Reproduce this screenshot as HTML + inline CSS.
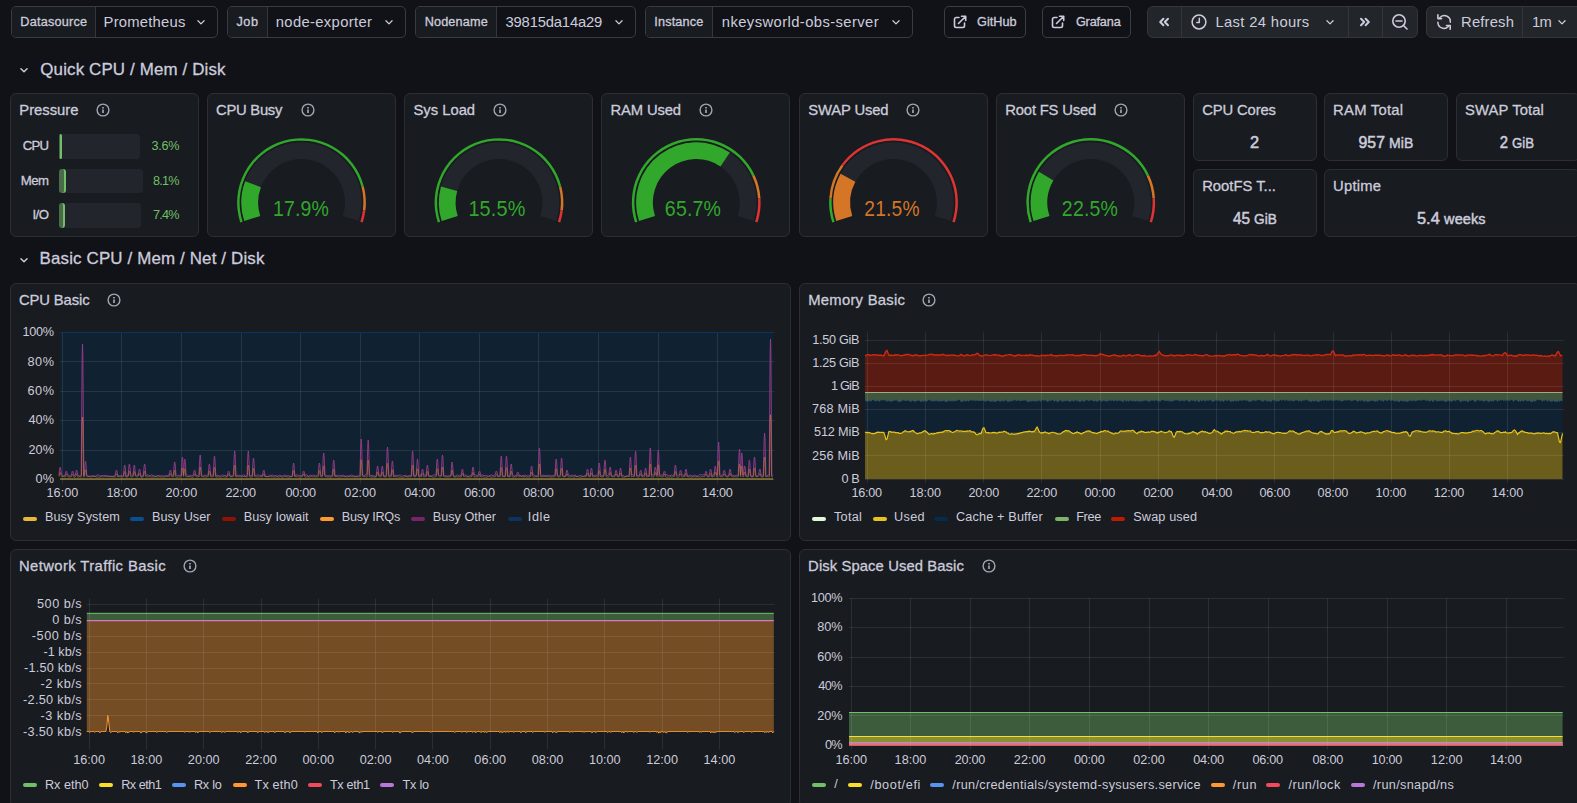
<!DOCTYPE html>
<html><head><meta charset="utf-8">
<style>
*{box-sizing:border-box;margin:0;padding:0}
html,body{width:1577px;height:803px;overflow:hidden;background:#111217;font-family:"Liberation Sans",sans-serif;color:#ccccdc}
.a{position:absolute;white-space:nowrap}
.vb{position:absolute;top:6px;height:32px;border:1px solid #393b41;border-radius:5px;background:#111217;overflow:hidden}
.vl{position:absolute;left:0;top:0;bottom:0;background:#181b1f;border-right:1px solid #34363b}
.btn{position:absolute;top:6px;height:32px;border:1px solid #3b3d42;border-radius:5px;background:#111217}
.grp{position:absolute;top:6px;height:32px;border:1px solid #33353a;border-radius:6px;background:#22252a;overflow:hidden}
.dv{position:absolute;top:0;bottom:0;width:1px;background:#34363b}
.p{position:absolute;background:#181b1f;border:1px solid #2c2e33;border-radius:6px;overflow:hidden}
.lbl{-webkit-text-stroke:0.3px #ccccdc}
.val{font-size:14px;letter-spacing:0.35px}
.ttl{-webkit-text-stroke:0.3px #ccccdc}
.ax{font-size:12px;letter-spacing:0.2px;color:#ccccdc}
svg{position:absolute;overflow:visible}
</style></head><body>

<div class="vb" style="left:11px;width:207px"><div class="vl" style="width:84px"></div></div>
<div id="t0" class="a lbl" style="left:20.30px;top:14.72px;line-height:14.59px;font-size:12.68px;color:#ccccdc;font-weight:normal;letter-spacing:0.222px;">Datasource</div>
<div id="t1" class="a val" style="left:103.60px;top:13.61px;line-height:17.02px;font-size:14.80px;color:#ccccdc;font-weight:normal;letter-spacing:0.222px;">Prometheus</div>
<svg style="left:197px;top:19.5px" width="8" height="4.8" viewBox="0 0 8 5"><path d="M0.8 0.8L4 4L7.2 0.8" fill="none" stroke="#ccccdc" stroke-width="1.3" stroke-linecap="round" stroke-linejoin="round"/></svg>
<div class="vb" style="left:227px;width:179px"><div class="vl" style="width:40px"></div></div>
<div id="t2" class="a lbl" style="left:236.50px;top:14.72px;line-height:14.59px;font-size:12.68px;color:#ccccdc;font-weight:normal;letter-spacing:0.500px;">Job</div>
<div id="t3" class="a val" style="left:275.80px;top:13.61px;line-height:17.02px;font-size:14.80px;color:#ccccdc;font-weight:normal;letter-spacing:0.333px;">node-exporter</div>
<svg style="left:385px;top:19.5px" width="8" height="4.8" viewBox="0 0 8 5"><path d="M0.8 0.8L4 4L7.2 0.8" fill="none" stroke="#ccccdc" stroke-width="1.3" stroke-linecap="round" stroke-linejoin="round"/></svg>
<div class="vb" style="left:415px;width:221px"><div class="vl" style="width:81px"></div></div>
<div id="t4" class="a lbl" style="left:424.70px;top:14.72px;line-height:14.59px;font-size:12.68px;color:#ccccdc;font-weight:normal;letter-spacing:0.143px;">Nodename</div>
<div id="t5" class="a val" style="left:505.50px;top:13.61px;line-height:17.02px;font-size:14.80px;color:#ccccdc;font-weight:normal;letter-spacing:-0.182px;">39815da14a29</div>
<svg style="left:615px;top:19.5px" width="8" height="4.8" viewBox="0 0 8 5"><path d="M0.8 0.8L4 4L7.2 0.8" fill="none" stroke="#ccccdc" stroke-width="1.3" stroke-linecap="round" stroke-linejoin="round"/></svg>
<div class="vb" style="left:645px;width:268px"><div class="vl" style="width:67px"></div></div>
<div id="t6" class="a lbl" style="left:654.30px;top:14.72px;line-height:14.59px;font-size:12.68px;color:#ccccdc;font-weight:normal;letter-spacing:0.143px;">Instance</div>
<div id="t7" class="a val" style="left:721.80px;top:13.61px;line-height:17.02px;font-size:14.80px;color:#ccccdc;font-weight:normal;letter-spacing:0.400px;">nkeysworld-obs-server</div>
<svg style="left:892px;top:19.5px" width="8" height="4.8" viewBox="0 0 8 5"><path d="M0.8 0.8L4 4L7.2 0.8" fill="none" stroke="#ccccdc" stroke-width="1.3" stroke-linecap="round" stroke-linejoin="round"/></svg>
<div class="btn" style="left:944px;width:82px"></div>
<svg style="left:952px;top:14px" width="16" height="16" viewBox="0 0 16 16"><path d="M7 3.5H4.2A1.7 1.7 0 0 0 2.5 5.2v6.6a1.7 1.7 0 0 0 1.7 1.7h6.6a1.7 1.7 0 0 0 1.7-1.7V9" fill="none" stroke="#ccccdc" stroke-width="1.6" stroke-linecap="round"/><path d="M6.5 9.5L13.5 2.5M9.5 2.3h4.2v4.2" fill="none" stroke="#ccccdc" stroke-width="1.6" stroke-linecap="round" stroke-linejoin="round"/></svg>
<div id="t8" class="a lbl" style="left:977.10px;top:15.32px;line-height:14.59px;font-size:12.68px;color:#ccccdc;font-weight:normal;letter-spacing:-0.000px;">GitHub</div>
<div class="btn" style="left:1042px;width:89px"></div>
<svg style="left:1050px;top:14px" width="16" height="16" viewBox="0 0 16 16"><path d="M7 3.5H4.2A1.7 1.7 0 0 0 2.5 5.2v6.6a1.7 1.7 0 0 0 1.7 1.7h6.6a1.7 1.7 0 0 0 1.7-1.7V9" fill="none" stroke="#ccccdc" stroke-width="1.6" stroke-linecap="round"/><path d="M6.5 9.5L13.5 2.5M9.5 2.3h4.2v4.2" fill="none" stroke="#ccccdc" stroke-width="1.6" stroke-linecap="round" stroke-linejoin="round"/></svg>
<div id="t9" class="a lbl" style="left:1075.90px;top:15.32px;line-height:14.59px;font-size:12.68px;color:#ccccdc;font-weight:normal;letter-spacing:-0.167px;">Grafana</div>
<div class="grp" style="left:1147px;width:271px"><div class="dv" style="left:33px"></div><div class="dv" style="left:200px"></div><div class="dv" style="left:234px"></div></div>
<svg style="left:1158px;top:17px" width="12" height="10" viewBox="0 0 12 10"><path d="M5.4 1.8L2.2 5L5.4 8.2M10 1.8L6.8 5L10 8.2" fill="none" stroke="#ccccdc" stroke-width="2" stroke-linecap="round" stroke-linejoin="round"/></svg>
<svg style="left:1191px;top:14px" width="16" height="16" viewBox="0 0 16 16"><circle cx="8" cy="8" r="6.9" fill="none" stroke="#ccccdc" stroke-width="1.5"/><path d="M8.3 4.3V8.4H5.8" fill="none" stroke="#ccccdc" stroke-width="1.5" stroke-linecap="round" stroke-linejoin="round"/></svg>
<div id="t10" class="a val" style="left:1215.50px;top:13.61px;line-height:17.02px;font-size:14.80px;color:#ccccdc;font-weight:normal;letter-spacing:0.333px;">Last 24 hours</div>
<svg style="left:1326px;top:19.5px" width="8" height="4.8" viewBox="0 0 8 5"><path d="M0.8 0.8L4 4L7.2 0.8" fill="none" stroke="#ccccdc" stroke-width="1.3" stroke-linecap="round" stroke-linejoin="round"/></svg>
<svg style="left:1359px;top:17px" width="12" height="10" viewBox="0 0 12 10"><path d="M2 1.8L5.2 5L2 8.2M6.6 1.8L9.8 5L6.6 8.2" fill="none" stroke="#ccccdc" stroke-width="2" stroke-linecap="round" stroke-linejoin="round"/></svg>
<svg style="left:1391px;top:13px" width="18" height="18" viewBox="0 0 18 18"><circle cx="8" cy="8" r="6.2" fill="none" stroke="#ccccdc" stroke-width="1.6"/><path d="M5 8H11M12.5 12.5L16 16" fill="none" stroke="#ccccdc" stroke-width="1.6" stroke-linecap="round"/></svg>
<div class="grp" style="left:1426px;width:160px"><div class="dv" style="left:95px"></div></div>
<svg style="left:1436px;top:14px" width="16" height="16" viewBox="0 0 16 16"><path d="M3.6 3.9A6 6 0 0 1 14.3 8.2M1.9 8.2A6 6 0 0 0 12.3 12.4" fill="none" stroke="#ccccdc" stroke-width="1.5" stroke-linecap="round"/><path d="M1.9 0.9V4.6H5.6M14.2 15.2V11.5H10.5" fill="none" stroke="#ccccdc" stroke-width="1.6" stroke-linecap="round" stroke-linejoin="round"/></svg>
<div id="t11" class="a val" style="left:1461.10px;top:13.61px;line-height:17.02px;font-size:14.80px;color:#ccccdc;font-weight:normal;letter-spacing:0.167px;">Refresh</div>
<div id="t12" class="a val" style="left:1531.90px;top:13.61px;line-height:17.02px;font-size:14.80px;color:#ccccdc;font-weight:normal;letter-spacing:-0.500px;">1m</div>
<svg style="left:1558px;top:19.5px" width="8" height="4.8" viewBox="0 0 8 5"><path d="M0.8 0.8L4 4L7.2 0.8" fill="none" stroke="#ccccdc" stroke-width="1.3" stroke-linecap="round" stroke-linejoin="round"/></svg>
<svg style="left:19.5px;top:67.8px" width="8" height="4.8" viewBox="0 0 8 5"><path d="M0.8 0.8L4 4L7.2 0.8" fill="none" stroke="#ccccdc" stroke-width="1.5" stroke-linecap="round" stroke-linejoin="round"/></svg>
<div id="t13" class="a ttl" style="left:40.30px;top:60.49px;line-height:19.45px;font-size:16.91px;color:#ccccdc;font-weight:normal;letter-spacing:0.143px;">Quick CPU / Mem / Disk</div>
<svg style="left:19.5px;top:257.5px" width="8" height="4.8" viewBox="0 0 8 5"><path d="M0.8 0.8L4 4L7.2 0.8" fill="none" stroke="#ccccdc" stroke-width="1.5" stroke-linecap="round" stroke-linejoin="round"/></svg>
<div id="t14" class="a ttl" style="left:39.60px;top:249.19px;line-height:19.45px;font-size:16.91px;color:#ccccdc;font-weight:normal;letter-spacing:0.148px;">Basic CPU / Mem / Net / Disk</div>
<div class="p" style="left:10px;top:93px;width:189px;height:144px"></div>
<div id="t15" class="a ttl" style="left:19.30px;top:101.61px;line-height:17.02px;font-size:14.80px;color:#ccccdc;font-weight:normal;letter-spacing:-0.000px;">Pressure</div>
<svg style="left:95.9px;top:103px" width="14" height="14" viewBox="0 0 14 14"><g opacity="0.78"><circle cx="7" cy="7" r="5.9" fill="none" stroke="#ccccdc" stroke-width="1.4"/><path d="M7 6.6V9.9" stroke="#ccccdc" stroke-width="1.7"/><path d="M7 3.9V5.4" stroke="#ccccdc" stroke-width="1.7"/></g></svg>
<div class="p" style="left:207px;top:93px;width:189px;height:144px"></div>
<div id="t16" class="a ttl" style="left:216.10px;top:101.61px;line-height:17.02px;font-size:14.80px;color:#ccccdc;font-weight:normal;letter-spacing:-0.286px;">CPU Busy</div>
<svg style="left:300.7px;top:103px" width="14" height="14" viewBox="0 0 14 14"><g opacity="0.78"><circle cx="7" cy="7" r="5.9" fill="none" stroke="#ccccdc" stroke-width="1.4"/><path d="M7 6.6V9.9" stroke="#ccccdc" stroke-width="1.7"/><path d="M7 3.9V5.4" stroke="#ccccdc" stroke-width="1.7"/></g></svg>
<div class="p" style="left:404px;top:93px;width:189px;height:144px"></div>
<div id="t17" class="a ttl" style="left:413.40px;top:101.61px;line-height:17.02px;font-size:14.80px;color:#ccccdc;font-weight:normal;letter-spacing:0.000px;">Sys Load</div>
<svg style="left:492.7px;top:103px" width="14" height="14" viewBox="0 0 14 14"><g opacity="0.78"><circle cx="7" cy="7" r="5.9" fill="none" stroke="#ccccdc" stroke-width="1.4"/><path d="M7 6.6V9.9" stroke="#ccccdc" stroke-width="1.7"/><path d="M7 3.9V5.4" stroke="#ccccdc" stroke-width="1.7"/></g></svg>
<div class="p" style="left:601px;top:93px;width:189px;height:144px"></div>
<div id="t18" class="a ttl" style="left:610.50px;top:101.61px;line-height:17.02px;font-size:14.80px;color:#ccccdc;font-weight:normal;letter-spacing:-0.143px;">RAM Used</div>
<svg style="left:698.9px;top:103px" width="14" height="14" viewBox="0 0 14 14"><g opacity="0.78"><circle cx="7" cy="7" r="5.9" fill="none" stroke="#ccccdc" stroke-width="1.4"/><path d="M7 6.6V9.9" stroke="#ccccdc" stroke-width="1.7"/><path d="M7 3.9V5.4" stroke="#ccccdc" stroke-width="1.7"/></g></svg>
<div class="p" style="left:799px;top:93px;width:189px;height:144px"></div>
<div id="t19" class="a ttl" style="left:808.20px;top:101.61px;line-height:17.02px;font-size:14.80px;color:#ccccdc;font-weight:normal;letter-spacing:-0.125px;">SWAP Used</div>
<svg style="left:906.0px;top:103px" width="14" height="14" viewBox="0 0 14 14"><g opacity="0.78"><circle cx="7" cy="7" r="5.9" fill="none" stroke="#ccccdc" stroke-width="1.4"/><path d="M7 6.6V9.9" stroke="#ccccdc" stroke-width="1.7"/><path d="M7 3.9V5.4" stroke="#ccccdc" stroke-width="1.7"/></g></svg>
<div class="p" style="left:996px;top:93px;width:189px;height:144px"></div>
<div id="t20" class="a ttl" style="left:1005.30px;top:101.61px;line-height:17.02px;font-size:14.80px;color:#ccccdc;font-weight:normal;letter-spacing:-0.182px;">Root FS Used</div>
<svg style="left:1113.7px;top:103px" width="14" height="14" viewBox="0 0 14 14"><g opacity="0.78"><circle cx="7" cy="7" r="5.9" fill="none" stroke="#ccccdc" stroke-width="1.4"/><path d="M7 6.6V9.9" stroke="#ccccdc" stroke-width="1.7"/><path d="M7 3.9V5.4" stroke="#ccccdc" stroke-width="1.7"/></g></svg>
<div id="t21" class="a ttl" style="left:-351.80px;width:400px;text-align:right;top:138.04px;line-height:15.19px;font-size:13.21px;color:#ccccdc;font-weight:normal;letter-spacing:-0.800px;">CPU</div>
<div class="a" style="left:59px;top:134px;width:81px;height:25px;background:#22252b;border-radius:3px"></div>
<div class="a" style="left:59px;top:134px;width:3.3px;height:25px;background:#4a6b47;border-right:2.5px solid #73bf69;border-radius:3px"></div>
<div id="t22" class="a " style="left:-220.83px;width:400px;text-align:right;top:138.52px;line-height:14.59px;font-size:12.68px;color:#73bf69;font-weight:normal;letter-spacing:-0.333px;">3.6%</div>
<div id="t23" class="a ttl" style="left:-351.50px;width:400px;text-align:right;top:172.94px;line-height:15.19px;font-size:13.21px;color:#ccccdc;font-weight:normal;letter-spacing:-0.500px;">Mem</div>
<div class="a" style="left:59px;top:169px;width:84px;height:24px;background:#22252b;border-radius:3px"></div>
<div class="a" style="left:59px;top:169px;width:7.0px;height:24px;background:#4a6b47;border-right:2.5px solid #73bf69;border-radius:3px"></div>
<div id="t24" class="a " style="left:-221.30px;width:400px;text-align:right;top:174.42px;line-height:14.59px;font-size:12.68px;color:#73bf69;font-weight:normal;letter-spacing:-0.800px;">8.1%</div>
<div id="t25" class="a ttl" style="left:-351.50px;width:400px;text-align:right;top:207.14px;line-height:15.19px;font-size:13.21px;color:#ccccdc;font-weight:normal;letter-spacing:-0.500px;">I/O</div>
<div class="a" style="left:59px;top:203px;width:82px;height:25px;background:#22252b;border-radius:3px"></div>
<div class="a" style="left:59px;top:203px;width:6.2px;height:25px;background:#4a6b47;border-right:2.5px solid #73bf69;border-radius:3px"></div>
<div id="t26" class="a " style="left:-221.30px;width:400px;text-align:right;top:207.62px;line-height:14.59px;font-size:12.68px;color:#73bf69;font-weight:normal;letter-spacing:-0.800px;">7.4%</div>
<svg style="left:0;top:0" width="1577" height="803"><path d="M240.25 222.40A64.4 64.4 0 1 1 363.88 186.48L361.46 187.11A61.9 61.9 0 1 0 242.63 221.63Z" fill="#31a82c"/><path d="M363.88 186.48A64.4 64.4 0 0 1 365.39 210.57L362.91 210.26A61.9 61.9 0 0 0 361.46 187.11Z" fill="#d57627"/><path d="M365.39 210.57A64.4 64.4 0 0 1 362.75 222.40L360.37 221.63A61.9 61.9 0 0 0 362.91 210.26Z" fill="#df3334"/><path d="M244.25 221.10A60.2 60.2 0 1 1 358.75 221.10L342.78 215.91A43.4 43.4 0 1 0 260.22 215.91Z" fill="#22252b"/><path d="M244.25 221.10A60.2 60.2 0 0 1 245.17 181.26L260.89 187.18A43.4 43.4 0 0 0 260.22 215.91Z" fill="#31a82c"/></svg>
<div id="t27" class="a " style="left:100.50px;width:400px;text-align:center;top:197.39px;line-height:24.92px;font-size:21.67px;color:#31a82c;font-weight:normal;transform:scaleX(0.9004);transform-origin:50% 50%;letter-spacing:0.200px;">17.9%</div>
<svg style="left:0;top:0" width="1577" height="803"><path d="M437.75 222.40A64.4 64.4 0 1 1 561.38 186.48L558.96 187.11A61.9 61.9 0 1 0 440.13 221.63Z" fill="#31a82c"/><path d="M561.38 186.48A64.4 64.4 0 0 1 562.89 210.57L560.41 210.26A61.9 61.9 0 0 0 558.96 187.11Z" fill="#d57627"/><path d="M562.89 210.57A64.4 64.4 0 0 1 560.25 222.40L557.87 221.63A61.9 61.9 0 0 0 560.41 210.26Z" fill="#df3334"/><path d="M441.75 221.10A60.2 60.2 0 1 1 556.25 221.10L540.28 215.91A43.4 43.4 0 1 0 457.72 215.91Z" fill="#22252b"/><path d="M441.75 221.10A60.2 60.2 0 0 1 440.98 186.43L457.17 190.92A43.4 43.4 0 0 0 457.72 215.91Z" fill="#31a82c"/></svg>
<div id="t28" class="a " style="left:296.50px;width:400px;text-align:center;top:197.39px;line-height:24.92px;font-size:21.67px;color:#31a82c;font-weight:normal;transform:scaleX(0.9170);transform-origin:50% 50%;letter-spacing:0.200px;">15.5%</div>
<svg style="left:0;top:0" width="1577" height="803"><path d="M635.00 222.40A64.4 64.4 0 0 1 754.52 175.08L752.26 176.14A61.9 61.9 0 0 0 637.38 221.63Z" fill="#31a82c"/><path d="M754.52 175.08A64.4 64.4 0 0 1 760.52 198.46L758.03 198.61A61.9 61.9 0 0 0 752.26 176.14Z" fill="#d57627"/><path d="M760.52 198.46A64.4 64.4 0 0 1 757.50 222.40L755.12 221.63A61.9 61.9 0 0 0 758.03 198.61Z" fill="#df3334"/><path d="M639.00 221.10A60.2 60.2 0 1 1 753.50 221.10L737.53 215.91A43.4 43.4 0 1 0 654.97 215.91Z" fill="#22252b"/><path d="M639.00 221.10A60.2 60.2 0 0 1 729.84 152.54L720.46 166.48A43.4 43.4 0 0 0 654.97 215.91Z" fill="#31a82c"/></svg>
<div id="t29" class="a " style="left:493.25px;width:400px;text-align:center;top:197.39px;line-height:24.92px;font-size:21.67px;color:#31a82c;font-weight:normal;transform:scaleX(0.9023);transform-origin:50% 50%;letter-spacing:0.200px;">65.7%</div>
<svg style="left:0;top:0" width="1577" height="803"><path d="M832.25 222.40A64.4 64.4 0 0 1 829.23 198.46L831.72 198.61A61.9 61.9 0 0 0 834.63 221.63Z" fill="#31a82c"/><path d="M829.23 198.46A64.4 64.4 0 0 1 841.40 164.65L843.42 166.12A61.9 61.9 0 0 0 831.72 198.61Z" fill="#d57627"/><path d="M841.40 164.65A64.4 64.4 0 0 1 954.75 222.40L952.37 221.63A61.9 61.9 0 0 0 843.42 166.12Z" fill="#df3334"/><path d="M836.25 221.10A60.2 60.2 0 1 1 950.75 221.10L934.78 215.91A43.4 43.4 0 1 0 852.22 215.91Z" fill="#22252b"/><path d="M836.25 221.10A60.2 60.2 0 0 1 840.57 173.83L855.34 181.83A43.4 43.4 0 0 0 852.22 215.91Z" fill="#d57627"/></svg>
<div id="t30" class="a " style="left:692.00px;width:400px;text-align:center;top:197.39px;line-height:24.92px;font-size:21.67px;color:#d57627;font-weight:normal;transform:scaleX(0.8856);transform-origin:50% 50%;letter-spacing:0.200px;">21.5%</div>
<svg style="left:0;top:0" width="1577" height="803"><path d="M1029.50 222.40A64.4 64.4 0 0 1 1149.02 175.08L1146.76 176.14A61.9 61.9 0 0 0 1031.88 221.63Z" fill="#31a82c"/><path d="M1149.02 175.08A64.4 64.4 0 0 1 1155.02 198.46L1152.53 198.61A61.9 61.9 0 0 0 1146.76 176.14Z" fill="#d57627"/><path d="M1155.02 198.46A64.4 64.4 0 0 1 1152.00 222.40L1149.62 221.63A61.9 61.9 0 0 0 1152.53 198.61Z" fill="#df3334"/><path d="M1033.50 221.10A60.2 60.2 0 1 1 1148.00 221.10L1132.03 215.91A43.4 43.4 0 1 0 1049.47 215.91Z" fill="#22252b"/><path d="M1033.50 221.10A60.2 60.2 0 0 1 1038.93 171.86L1053.39 180.41A43.4 43.4 0 0 0 1049.47 215.91Z" fill="#31a82c"/></svg>
<div id="t31" class="a " style="left:889.75px;width:400px;text-align:center;top:197.39px;line-height:24.92px;font-size:21.67px;color:#31a82c;font-weight:normal;transform:scaleX(0.9023);transform-origin:50% 50%;letter-spacing:0.200px;">22.5%</div>
<div class="p" style="left:1193px;top:93px;width:124px;height:68px"></div>
<div id="t32" class="a ttl" style="left:1202.20px;top:101.61px;line-height:17.02px;font-size:14.80px;color:#ccccdc;font-weight:normal;letter-spacing:-0.125px;">CPU Cores</div>
<div id="t33" class="a " style="left:1054.50px;width:400px;text-align:center;top:133.37px;line-height:18.84px;font-size:16.38px;color:#ccccdc;font-weight:normal;transform:scaleX(1.0000);transform-origin:50% 50%;letter-spacing:0.100px;-webkit-text-stroke:0.55px #ccccdc;">2</div>
<div class="p" style="left:1324px;top:93px;width:124px;height:68px"></div>
<div id="t34" class="a ttl" style="left:1333.10px;top:101.61px;line-height:17.02px;font-size:14.80px;color:#ccccdc;font-weight:normal;letter-spacing:0.250px;">RAM Total</div>
<div id="t35" class="a " style="left:1185.50px;width:400px;text-align:center;top:133.37px;line-height:18.84px;font-size:16.38px;color:#ccccdc;font-weight:normal;transform:scaleX(0.9650);transform-origin:50% 50%;letter-spacing:0.100px;-webkit-text-stroke:0.55px #ccccdc;">957<span style="font-size:14.5px;-webkit-text-stroke:0.45px #ccccdc"> MiB</span></div>
<div class="p" style="left:1456px;top:93px;width:124px;height:68px"></div>
<div id="t36" class="a ttl" style="left:1465.00px;top:101.61px;line-height:17.02px;font-size:14.80px;color:#ccccdc;font-weight:normal;letter-spacing:0.111px;">SWAP Total</div>
<div id="t37" class="a " style="left:1317.15px;width:400px;text-align:center;top:133.37px;line-height:18.84px;font-size:16.38px;color:#ccccdc;font-weight:normal;transform:scaleX(0.9093);transform-origin:50% 50%;letter-spacing:0.100px;-webkit-text-stroke:0.55px #ccccdc;">2<span style="font-size:14.5px;-webkit-text-stroke:0.45px #ccccdc"> GiB</span></div>
<div class="p" style="left:1193px;top:169px;width:124px;height:68px"></div>
<div id="t38" class="a ttl" style="left:1202.20px;top:177.61px;line-height:17.02px;font-size:14.80px;color:#ccccdc;font-weight:normal;letter-spacing:0.000px;">RootFS T...</div>
<div id="t39" class="a " style="left:1054.50px;width:400px;text-align:center;top:209.37px;line-height:18.84px;font-size:16.38px;color:#ccccdc;font-weight:normal;transform:scaleX(0.9377);transform-origin:50% 50%;letter-spacing:0.100px;-webkit-text-stroke:0.55px #ccccdc;">45<span style="font-size:14.5px;-webkit-text-stroke:0.45px #ccccdc"> GiB</span></div>
<div class="p" style="left:1324px;top:169px;width:256px;height:68px"></div>
<div id="t40" class="a ttl" style="left:1333.10px;top:177.61px;line-height:17.02px;font-size:14.80px;color:#ccccdc;font-weight:normal;letter-spacing:0.200px;">Uptime</div>
<div id="t41" class="a " style="left:1251.30px;width:400px;text-align:center;top:209.37px;line-height:18.84px;font-size:16.38px;color:#ccccdc;font-weight:normal;transform:scaleX(1.0000);transform-origin:50% 50%;letter-spacing:0.100px;-webkit-text-stroke:0.55px #ccccdc;">5.4<span style="font-size:14.5px;-webkit-text-stroke:0.45px #ccccdc"> weeks</span></div>
<div class="p" style="left:10px;top:283px;width:781px;height:258px"></div>
<div id="t42" class="a ttl" style="left:19.00px;top:291.61px;line-height:17.02px;font-size:14.80px;color:#ccccdc;font-weight:normal;letter-spacing:-0.125px;">CPU Basic</div>
<svg style="left:107px;top:293px" width="14" height="14" viewBox="0 0 14 14"><g opacity="0.78"><circle cx="7" cy="7" r="5.9" fill="none" stroke="#ccccdc" stroke-width="1.4"/><path d="M7 6.6V9.9" stroke="#ccccdc" stroke-width="1.7"/><path d="M7 3.9V5.4" stroke="#ccccdc" stroke-width="1.7"/></g></svg>
<svg style="left:0;top:0" width="1577" height="803"><rect x="60.1" y="332.5" width="713.1" height="146.9" fill="#052b51" fill-opacity="0.4"/><path d="M60.1 332.5H774.5" stroke="rgba(240,250,255,0.09)" stroke-width="1"/><path d="M60.1 361.5H774.5" stroke="rgba(240,250,255,0.09)" stroke-width="1"/><path d="M60.1 391.5H774.5" stroke="rgba(240,250,255,0.09)" stroke-width="1"/><path d="M60.1 420.5H774.5" stroke="rgba(240,250,255,0.09)" stroke-width="1"/><path d="M60.1 450.5H774.5" stroke="rgba(240,250,255,0.09)" stroke-width="1"/><path d="M60.1 479.5H774.5" stroke="rgba(240,250,255,0.09)" stroke-width="1"/><path d="M62.5 332.5V483.4" stroke="rgba(240,250,255,0.09)" stroke-width="1"/><path d="M121.5 332.5V483.4" stroke="rgba(240,250,255,0.09)" stroke-width="1"/><path d="M181.5 332.5V483.4" stroke="rgba(240,250,255,0.09)" stroke-width="1"/><path d="M241.5 332.5V483.4" stroke="rgba(240,250,255,0.09)" stroke-width="1"/><path d="M300.5 332.5V483.4" stroke="rgba(240,250,255,0.09)" stroke-width="1"/><path d="M360.5 332.5V483.4" stroke="rgba(240,250,255,0.09)" stroke-width="1"/><path d="M419.5 332.5V483.4" stroke="rgba(240,250,255,0.09)" stroke-width="1"/><path d="M479.5 332.5V483.4" stroke="rgba(240,250,255,0.09)" stroke-width="1"/><path d="M538.5 332.5V483.4" stroke="rgba(240,250,255,0.09)" stroke-width="1"/><path d="M598.5 332.5V483.4" stroke="rgba(240,250,255,0.09)" stroke-width="1"/><path d="M658.5 332.5V483.4" stroke="rgba(240,250,255,0.09)" stroke-width="1"/><path d="M717.5 332.5V483.4" stroke="rgba(240,250,255,0.09)" stroke-width="1"/><path d="M60.1 332.5H773.2" stroke="#0a3561" stroke-width="1"/><path d="M58.90 475.37L59.85 467.86L60.20 467.00L60.55 467.86L61.50 474.63L62.10 475.37L63.10 475.79L64.10 475.83L65.00 475.38L65.95 471.46L66.30 471.00L66.65 471.46L67.60 475.04L68.10 475.17L69.10 475.12L70.10 476.49L71.10 475.55L71.30 475.18L72.25 471.46L72.60 471.00L72.95 471.46L73.90 474.82L74.10 475.85L75.10 474.97L75.30 475.00L76.25 470.56L76.60 470.00L76.95 470.56L77.90 474.81L78.10 475.64L79.10 476.03L80.10 475.91L81.10 474.82L81.20 475.06L82.15 357.16L82.50 344.00L82.85 357.16L83.80 475.41L84.10 475.24L84.20 475.42L85.15 462.46L85.50 461.00L85.85 462.46L86.80 475.52L87.10 475.55L88.10 475.99L89.10 476.28L90.10 475.99L91.10 476.36L92.10 475.41L93.10 476.14L94.10 475.50L95.10 476.38L96.10 476.28L97.10 474.88L98.10 474.94L99.10 475.09L100.10 476.44L101.10 475.49L102.10 475.83L103.10 475.24L104.10 475.61L105.10 475.39L106.10 475.33L107.10 475.75L108.10 475.75L109.10 476.33L110.10 475.93L111.10 476.37L112.10 476.24L113.10 476.48L114.10 475.91L115.10 474.99L115.20 474.77L116.15 470.56L116.50 470.00L116.85 470.56L117.80 475.49L118.10 476.33L119.10 475.72L120.10 475.98L121.10 475.08L122.10 476.20L123.10 475.73L123.40 475.58L124.35 466.06L124.70 465.00L125.05 466.06L126.00 474.63L126.10 476.24L127.10 476.48L128.10 474.86L128.10 475.40L129.05 465.16L129.40 464.00L129.75 465.16L130.70 474.71L131.10 474.97L132.10 475.23L133.00 475.51L133.95 466.06L134.30 465.00L134.65 466.06L135.60 475.13L136.10 475.81L137.10 474.78L138.10 475.99L138.20 475.38L139.15 469.66L139.50 469.00L139.85 469.66L140.80 474.77L141.10 476.47L142.10 475.61L143.10 476.50L143.30 474.98L144.25 465.16L144.60 464.00L144.95 465.16L145.90 474.96L146.10 475.78L147.10 474.76L148.10 475.06L149.10 475.43L150.10 475.80L151.10 474.98L152.10 474.78L153.10 476.26L154.10 475.26L155.10 476.43L156.10 476.31L157.10 475.38L158.10 475.53L159.10 475.64L160.10 475.86L161.10 475.77L162.10 475.71L163.10 475.82L164.10 476.39L165.10 475.61L166.10 475.48L167.10 476.00L168.10 475.13L169.10 474.84L169.10 475.24L170.05 470.56L170.40 470.00L170.75 470.56L171.70 474.73L172.10 475.69L173.10 474.72L173.40 475.25L174.35 463.36L174.70 462.00L175.05 463.36L176.00 475.00L176.10 474.74L177.10 475.81L178.10 475.84L179.10 474.81L180.10 475.83L181.10 475.15L181.10 475.54L182.05 458.86L182.40 457.00L182.75 458.86L183.50 474.76L184.45 460.66L184.80 459.00L185.15 460.66L186.10 475.01L187.10 474.81L188.10 475.92L189.10 476.43L190.10 475.15L191.10 475.52L192.10 475.77L193.10 475.28L193.30 474.79L194.25 470.56L194.60 470.00L194.95 470.56L195.90 475.39L196.10 475.36L197.10 475.77L198.10 475.24L198.90 475.06L199.85 457.06L200.20 455.00L200.55 457.06L201.50 475.14L202.10 475.72L203.10 476.02L204.10 475.26L205.10 475.10L206.10 476.15L207.10 475.13L208.10 474.87L208.10 475.04L209.05 465.16L209.40 464.00L209.75 465.16L210.70 475.52L211.10 474.88L212.10 475.28L213.10 475.30L213.20 475.25L214.15 457.96L214.50 456.00L214.85 457.96L215.80 475.12L216.10 476.24L217.10 475.00L218.10 475.31L219.10 475.87L220.10 476.29L221.10 475.51L222.10 475.11L223.10 474.92L224.10 475.65L225.10 475.04L226.10 476.15L227.10 476.21L227.30 475.53L228.25 471.46L228.60 471.00L228.95 471.46L229.90 475.05L230.10 476.15L231.10 475.86L232.10 476.15L233.10 475.32L233.40 474.86L234.35 453.46L234.70 451.00L235.05 453.46L236.00 475.18L236.10 476.13L237.10 475.19L238.10 475.32L239.10 475.45L240.10 475.46L241.10 475.44L242.10 476.36L243.10 474.98L244.10 474.71L245.10 476.40L246.10 476.28L247.00 474.95L247.95 453.46L248.30 451.00L248.65 453.46L249.60 474.99L250.10 476.37L251.10 475.10L252.10 476.04L252.20 475.39L253.15 459.76L253.50 458.00L253.85 459.76L254.80 475.25L255.10 475.63L256.10 475.22L257.10 475.31L258.10 475.11L259.10 474.82L260.10 475.76L261.10 475.22L262.10 476.16L262.50 474.60L263.45 470.56L263.80 470.00L264.15 470.56L265.10 475.26L265.10 475.95L266.10 476.36L267.10 476.31L268.10 476.32L269.10 475.74L270.10 474.72L271.10 476.04L272.10 475.01L273.10 475.24L274.10 475.89L275.10 475.64L276.10 475.44L277.10 476.39L278.10 475.80L279.10 475.31L280.10 475.15L281.10 476.25L282.10 475.56L283.10 476.11L284.10 475.33L285.10 475.06L286.10 475.66L287.10 476.17L288.10 475.01L289.10 476.13L290.10 476.36L291.10 476.15L292.10 476.18L292.30 475.17L293.25 464.26L293.60 463.00L293.95 464.26L294.90 475.52L295.10 476.25L296.10 474.79L297.10 475.19L298.10 475.18L299.10 475.65L300.10 475.46L301.10 475.55L302.10 476.10L302.40 475.38L303.35 471.46L303.70 471.00L304.05 471.46L305.00 475.43L305.10 474.93L306.10 474.92L307.10 474.82L308.10 476.45L309.10 476.24L310.10 474.86L311.10 475.60L312.10 475.27L313.10 475.27L314.10 475.33L315.10 475.86L316.10 475.76L317.10 475.35L318.10 474.67L319.05 464.26L319.40 463.00L319.75 464.26L320.70 474.87L321.10 475.70L322.10 475.99L322.40 474.73L323.35 455.26L323.70 453.00L324.05 455.26L325.00 474.61L325.10 475.02L326.10 475.37L327.10 475.79L328.10 476.11L329.10 475.38L330.10 476.14L331.10 475.82L332.10 475.48L332.40 474.99L333.35 461.56L333.70 460.00L334.05 461.56L335.00 474.67L335.10 475.97L336.10 475.46L337.10 475.95L338.10 475.53L339.10 475.14L340.10 475.66L341.10 475.95L342.10 474.83L343.10 475.46L344.10 475.47L345.10 476.28L346.10 476.39L347.10 475.37L348.10 476.32L349.10 476.12L350.10 475.17L351.10 475.54L352.10 474.92L353.10 476.16L354.10 475.89L355.10 476.30L356.10 476.13L357.10 475.90L358.10 476.02L359.10 475.71L359.90 475.06L360.85 442.66L361.20 439.00L361.55 442.66L362.50 475.18L363.10 474.96L364.10 476.09L365.10 474.78L366.10 474.87L366.90 474.65L367.85 443.56L368.20 440.00L368.55 443.56L369.50 474.70L370.10 474.74L371.10 476.21L372.10 474.92L373.10 476.22L374.10 475.91L375.10 476.21L376.10 476.41L376.30 474.65L377.25 466.96L377.60 466.00L377.95 466.96L378.90 475.12L379.10 474.77L380.10 476.08L381.00 474.83L381.95 466.96L382.30 466.00L382.65 466.96L383.60 475.19L384.10 476.05L385.10 476.38L386.10 474.81L386.20 474.60L387.15 449.86L387.50 447.00L387.85 449.86L388.80 474.68L389.10 476.19L390.10 475.14L391.10 475.31L392.05 462.46L392.40 461.00L392.75 462.46L393.70 474.67L394.10 476.06L395.10 475.41L396.10 475.36L397.10 475.41L398.10 475.33L399.10 475.45L400.10 474.85L401.10 475.60L402.10 476.45L403.10 475.44L404.10 476.05L405.10 474.99L406.10 475.94L407.10 476.06L408.10 475.91L409.10 475.63L410.10 475.57L411.10 475.86L411.30 475.42L412.25 453.46L412.60 451.00L412.95 453.46L413.90 475.50L414.10 474.87L415.10 476.05L416.00 474.88L416.20 475.08L417.15 460.66L417.50 459.00L417.85 460.66L418.80 474.96L419.10 475.99L420.10 475.03L421.10 475.18L421.20 475.56L422.15 469.66L422.50 469.00L422.85 469.66L423.80 474.85L424.10 475.27L425.10 475.12L426.10 475.32L427.05 466.06L427.40 465.00L427.75 466.06L428.70 475.17L429.10 475.97L430.10 475.44L431.10 476.24L432.10 475.75L433.10 475.18L434.10 475.09L435.10 474.74L436.00 475.26L436.95 460.66L437.30 459.00L437.65 460.66L438.60 474.86L439.10 475.35L440.10 475.28L441.10 476.09L441.20 474.85L442.15 457.06L442.50 455.00L442.85 457.06L443.80 475.31L444.10 475.56L445.10 475.78L446.10 475.54L447.10 476.20L448.10 476.18L449.10 475.70L450.10 475.57L450.80 475.50L451.75 463.36L452.10 462.00L452.45 463.36L453.40 475.30L454.10 476.02L455.10 476.43L456.10 475.54L457.10 475.11L458.10 475.12L459.10 475.99L460.10 475.92L461.10 475.19L462.05 469.66L462.40 469.00L462.75 469.66L463.70 475.52L464.10 475.04L465.10 475.17L466.10 475.04L467.10 475.97L468.10 476.25L469.10 476.32L470.10 475.16L471.10 476.26L471.70 475.45L472.65 467.86L473.00 467.00L473.35 467.86L474.30 474.84L475.10 474.85L476.10 474.87L477.10 476.20L478.10 475.23L478.20 474.90L479.15 471.46L479.50 471.00L479.85 471.46L480.80 474.62L481.10 475.92L482.10 474.71L483.10 475.30L484.10 475.49L485.10 475.57L486.10 475.08L487.10 475.75L488.10 476.42L489.10 475.40L490.10 475.68L491.10 474.91L492.10 475.19L493.10 475.90L494.10 474.90L495.10 474.62L496.05 471.46L496.40 471.00L496.75 471.46L497.70 474.72L498.10 476.39L499.10 475.37L500.00 475.23L500.95 457.96L501.30 456.00L501.65 457.96L502.60 475.44L503.10 475.92L504.10 475.88L505.10 476.15L505.20 475.29L506.15 457.96L506.50 456.00L506.85 457.96L507.80 475.14L508.10 476.43L509.10 475.91L509.90 475.07L510.85 465.16L511.20 464.00L511.55 465.16L512.50 475.06L513.10 475.33L514.10 475.99L515.10 475.92L516.10 475.72L516.50 475.24L517.45 472.36L517.80 472.00L518.15 472.36L519.10 474.75L519.10 475.84L520.10 475.02L521.10 476.30L522.10 475.88L523.10 474.92L524.10 476.38L525.10 474.95L526.10 475.30L527.10 476.00L528.10 475.78L529.10 475.70L530.10 475.87L530.30 475.31L531.25 466.96L531.60 466.00L531.95 466.96L532.90 475.14L533.10 475.02L534.10 474.82L535.10 475.99L536.10 476.06L537.10 475.68L538.10 474.71L539.05 450.76L539.40 448.00L539.75 450.76L540.70 474.79L541.10 475.39L542.10 476.27L543.10 474.78L544.10 475.61L545.10 475.14L546.10 476.08L547.10 475.34L548.10 475.30L549.10 475.43L550.10 475.67L551.10 476.09L552.10 475.34L553.10 476.22L554.10 474.90L554.90 475.30L555.85 460.66L556.20 459.00L556.55 460.66L557.50 475.36L558.10 476.10L559.10 476.01L560.10 475.03L560.30 474.79L561.25 459.76L561.60 458.00L561.95 459.76L562.90 475.59L563.10 476.04L564.10 476.17L565.10 476.05L565.70 475.47L566.65 470.56L567.00 470.00L567.35 470.56L568.30 475.07L569.10 475.05L570.10 475.65L571.10 475.72L572.10 475.06L573.10 475.15L574.10 476.11L575.10 474.75L576.10 476.15L577.10 476.30L578.10 476.41L579.10 475.39L580.10 475.69L581.10 475.75L582.10 475.84L583.10 476.46L584.10 475.94L585.10 475.24L586.10 476.25L586.20 475.06L587.15 469.66L587.50 469.00L587.85 469.66L588.80 475.43L589.10 476.01L590.10 475.55L591.05 468.76L591.40 468.00L591.75 468.76L592.70 475.40L593.10 475.59L594.10 475.64L595.10 475.53L596.10 475.05L597.10 475.65L597.90 474.83L598.85 464.26L599.20 463.00L599.55 464.26L600.50 475.13L601.10 475.50L602.10 475.72L603.10 476.43L603.70 474.62L604.65 461.56L605.00 460.00L605.35 461.56L606.30 474.81L607.10 475.82L608.10 474.79L608.90 474.62L609.85 467.86L610.20 467.00L610.55 467.86L611.50 475.56L612.10 475.67L613.10 476.37L614.10 475.28L614.80 475.41L615.75 470.56L616.10 470.00L616.45 470.56L617.40 475.59L618.10 476.24L619.10 475.78L619.20 475.17L620.15 468.76L620.50 468.00L620.85 468.76L621.80 475.26L622.10 476.03L623.10 475.32L624.10 476.15L625.10 476.38L626.10 476.25L627.10 475.49L628.10 476.06L629.10 475.55L630.05 458.86L630.40 457.00L630.75 458.86L631.70 475.05L632.10 474.84L633.10 475.06L634.10 474.99L634.30 475.51L635.25 453.46L635.60 451.00L635.95 453.46L636.90 475.29L637.10 475.67L638.10 475.46L639.10 475.87L639.40 475.35L640.35 470.56L640.70 470.00L641.05 470.56L642.00 474.80L642.10 476.06L643.10 475.42L644.10 475.03L644.30 475.18L645.25 468.76L645.60 468.00L645.95 468.76L646.90 475.34L647.10 475.36L648.10 475.37L649.00 475.56L649.95 450.76L650.30 448.00L650.65 450.76L651.60 475.17L652.10 474.70L653.10 475.08L654.00 474.97L654.95 467.86L655.30 467.00L655.65 467.86L656.60 474.92L657.00 474.69L657.95 452.56L658.30 450.00L658.65 452.56L659.60 474.79L660.10 475.43L661.10 475.00L662.10 474.75L663.10 475.35L664.05 471.46L664.40 471.00L664.75 471.46L665.70 475.46L666.10 474.81L667.10 474.74L668.10 475.51L669.10 475.43L670.10 475.97L671.10 474.79L672.10 475.43L673.10 475.41L674.10 474.84L675.05 466.06L675.40 465.00L675.75 466.06L676.70 474.81L677.10 474.87L678.10 475.55L679.10 475.00L679.30 475.09L680.25 470.56L680.60 470.00L680.95 470.56L681.90 474.77L682.10 474.92L683.10 474.79L684.10 476.01L684.70 475.05L685.65 469.66L686.00 469.00L686.35 469.66L687.30 475.32L688.10 476.38L689.10 475.24L690.10 475.15L691.10 475.18L692.10 476.17L693.10 475.83L694.10 475.32L695.10 474.87L696.10 475.93L697.10 476.44L698.10 475.77L699.10 474.71L700.10 474.75L701.10 474.86L702.10 475.01L703.10 474.77L704.10 474.80L704.70 475.43L705.65 471.46L706.00 471.00L706.35 471.46L707.30 475.58L708.10 476.45L709.10 475.56L709.30 474.96L710.25 469.66L710.60 469.00L710.95 469.66L711.90 474.70L712.10 476.39L713.10 474.76L714.00 474.69L714.95 466.96L715.30 466.00L715.65 466.96L716.60 475.13L717.10 474.86L717.30 474.93L718.25 445.36L718.60 442.00L718.95 445.36L719.90 474.67L720.10 474.91L721.10 475.40L722.10 475.30L722.90 474.79L723.85 470.56L724.20 470.00L724.55 470.56L725.50 475.00L726.10 476.03L727.10 476.02L728.10 476.20L728.80 475.19L729.75 469.66L730.10 469.00L730.45 469.66L731.40 475.08L732.10 475.45L733.10 475.11L734.10 476.10L735.10 475.57L736.10 475.19L737.10 475.01L738.10 476.00L738.20 475.43L739.15 451.66L739.50 449.00L739.85 451.66L740.50 474.92L741.45 455.26L741.80 453.00L742.15 455.26L743.10 474.61L743.10 474.98L743.40 475.05L744.35 466.96L744.70 466.00L745.05 466.96L746.00 475.19L746.10 475.54L747.10 476.07L748.10 475.25L749.05 461.56L749.40 460.00L749.75 461.56L750.70 475.15L751.10 476.22L752.10 475.86L753.10 476.28L753.20 474.80L754.15 458.86L754.50 457.00L754.85 458.86L755.80 475.15L756.10 476.31L757.10 476.02L758.10 475.30L758.60 474.64L759.55 469.66L759.90 469.00L760.25 469.66L761.20 475.44L762.10 476.42L763.10 474.89L763.30 475.29L764.25 437.26L764.60 433.00L764.95 437.26L765.90 475.08L766.10 474.85L767.10 475.87L768.10 475.13L769.10 474.79L769.20 475.19L770.15 352.66L770.50 339.00L770.85 352.66L771.80 474.75L772.10 475.75L773.10 474.72" fill="none" stroke="#9a3d8c" stroke-width="1" stroke-opacity="0.9"/><path d="M59.20 476.61L59.85 472.83L60.20 472.39L60.55 472.83L61.20 475.82L62.10 476.91L63.10 476.33L64.10 476.87L65.10 476.85L65.30 476.69L65.95 474.45L66.30 474.19L66.65 474.45L67.30 475.93L68.10 477.01L69.10 477.21L70.10 476.40L71.10 476.97L71.60 476.62L72.25 474.45L72.60 474.19L72.95 474.45L73.60 476.00L74.10 477.20L75.10 477.26L75.60 476.54L76.25 474.05L76.60 473.74L76.95 474.05L77.60 476.72L78.10 477.22L79.10 476.48L80.10 476.68L81.10 477.13L81.50 476.26L82.15 423.02L82.50 417.04L82.85 423.02L83.50 475.96L84.10 477.25L84.50 475.95L85.15 470.40L85.50 469.69L85.85 470.40L86.50 475.92L87.10 476.69L88.10 476.58L89.10 476.43L90.10 476.55L91.10 477.28L92.10 476.38L93.10 476.53L94.10 476.50L95.10 476.38L96.10 476.83L97.10 477.04L98.10 477.14L99.10 476.93L100.10 477.12L101.10 476.31L102.10 476.58L103.10 477.26L104.10 476.37L105.10 476.57L106.10 476.78L107.10 476.57L108.10 476.85L109.10 476.35L110.10 476.54L111.10 477.26L112.10 476.44L113.10 477.21L114.10 476.48L115.10 477.29L115.50 475.82L116.15 474.05L116.50 473.74L116.85 474.05L117.50 476.75L118.10 476.44L119.10 476.35L120.10 477.06L121.10 476.48L122.10 476.49L123.10 477.12L123.70 476.42L124.35 472.02L124.70 471.49L125.05 472.02L125.70 476.69L126.10 477.26L127.10 476.83L128.10 476.68L128.40 476.04L129.05 471.62L129.40 471.04L129.75 471.62L130.40 476.35L131.10 477.29L132.10 476.58L133.10 476.43L133.30 476.06L133.95 472.02L134.30 471.49L134.65 472.02L135.30 476.00L136.10 476.65L137.10 477.21L138.10 476.38L138.50 475.80L139.15 473.64L139.50 473.29L139.85 473.64L140.50 476.12L141.10 477.30L142.10 477.28L143.10 476.55L143.60 475.92L144.25 471.62L144.60 471.04L144.95 471.62L145.60 476.25L146.10 476.79L147.10 477.00L148.10 476.61L149.10 476.32L150.10 476.65L151.10 477.05L152.10 477.08L153.10 476.87L154.10 476.76L155.10 476.84L156.10 476.74L157.10 476.83L158.10 477.13L159.10 476.50L160.10 476.89L161.10 477.23L162.10 477.15L163.10 476.48L164.10 477.26L165.10 477.14L166.10 476.47L167.10 476.57L168.10 476.50L169.10 476.35L169.40 476.72L170.05 474.05L170.40 473.74L170.75 474.05L171.40 475.91L172.10 477.17L173.10 476.41L173.70 476.71L174.35 470.81L174.70 470.14L175.05 470.81L175.70 476.71L176.10 477.09L177.10 477.29L178.10 476.99L179.10 476.83L180.10 477.07L181.10 476.39L181.40 475.97L182.05 468.78L182.40 467.89L182.75 468.78L183.40 476.52L183.80 476.14L184.45 469.59L184.80 468.79L185.15 469.59L185.80 476.77L186.10 476.62L187.10 476.81L188.10 476.67L189.10 476.62L190.10 476.66L191.10 476.90L192.10 477.28L193.10 477.24L193.60 476.59L194.25 474.05L194.60 473.74L194.95 474.05L195.60 476.08L196.10 476.59L197.10 477.28L198.10 476.57L199.10 476.42L199.20 476.76L199.85 467.97L200.20 466.99L200.55 467.97L201.20 476.29L202.10 476.64L203.10 476.95L204.10 476.58L205.10 477.27L206.10 476.75L207.10 476.78L208.10 476.83L208.40 475.86L209.05 471.62L209.40 471.04L209.75 471.62L210.40 476.59L211.10 476.83L212.10 476.74L213.10 476.92L213.50 476.10L214.15 468.38L214.50 467.44L214.85 468.38L215.50 476.06L216.10 477.15L217.10 477.08L218.10 476.36L219.10 477.15L220.10 476.68L221.10 477.28L222.10 476.67L223.10 476.51L224.10 476.85L225.10 477.18L226.10 476.73L227.10 477.17L227.60 476.18L228.25 474.45L228.60 474.19L228.95 474.45L229.60 476.03L230.10 476.60L231.10 476.81L232.10 476.70L233.10 476.67L233.70 476.10L234.35 466.35L234.70 465.19L235.05 466.35L235.70 476.79L236.10 476.88L237.10 476.45L238.10 476.52L239.10 476.67L240.10 476.91L241.10 476.44L242.10 476.38L243.10 476.62L244.10 476.58L245.10 476.33L246.10 476.84L247.10 477.22L247.30 476.61L247.95 466.35L248.30 465.19L248.65 466.35L249.30 476.26L250.10 477.13L251.10 477.14L252.10 477.21L252.50 475.83L253.15 469.19L253.50 468.34L253.85 469.19L254.50 476.58L255.10 476.42L256.10 477.18L257.10 476.68L258.10 476.78L259.10 477.19L260.10 476.59L261.10 476.49L262.10 477.12L262.80 476.21L263.45 474.05L263.80 473.74L264.15 474.05L264.80 476.67L265.10 476.33L266.10 476.65L267.10 476.31L268.10 477.13L269.10 476.48L270.10 476.57L271.10 476.69L272.10 476.81L273.10 476.73L274.10 476.93L275.10 476.96L276.10 476.74L277.10 476.40L278.10 477.28L279.10 476.99L280.10 476.38L281.10 476.74L282.10 477.05L283.10 477.29L284.10 476.37L285.10 476.31L286.10 476.78L287.10 476.72L288.10 477.19L289.10 477.13L290.10 476.63L291.10 476.72L292.10 476.88L292.60 475.95L293.25 471.21L293.60 470.59L293.95 471.21L294.60 476.35L295.10 476.69L296.10 476.39L297.10 476.94L298.10 476.33L299.10 477.24L300.10 476.82L301.10 476.87L302.10 476.39L302.70 476.28L303.35 474.45L303.70 474.19L304.05 474.45L304.70 476.13L305.10 477.16L306.10 476.84L307.10 476.58L308.10 477.28L309.10 476.96L310.10 476.83L311.10 476.50L312.10 476.60L313.10 477.20L314.10 476.43L315.10 476.83L316.10 476.92L317.10 476.65L318.10 477.07L318.40 476.66L319.05 471.21L319.40 470.59L319.75 471.21L320.40 476.07L321.10 477.04L322.10 476.50L322.70 476.00L323.35 467.16L323.70 466.09L324.05 467.16L324.70 475.94L325.10 476.61L326.10 476.49L327.10 477.17L328.10 476.52L329.10 477.12L330.10 477.24L331.10 476.42L332.10 477.21L332.70 476.52L333.35 470.00L333.70 469.24L334.05 470.00L334.70 476.57L335.10 476.49L336.10 476.34L337.10 476.80L338.10 476.68L339.10 477.15L340.10 477.13L341.10 476.36L342.10 476.70L343.10 476.69L344.10 476.48L345.10 476.55L346.10 476.56L347.10 476.99L348.10 476.64L349.10 476.41L350.10 476.52L351.10 476.74L352.10 476.86L353.10 476.55L354.10 477.00L355.10 476.52L356.10 476.97L357.10 476.91L358.10 476.48L359.10 477.05L360.10 476.69L360.20 476.64L360.85 461.49L361.20 459.79L361.55 461.49L362.20 475.90L363.10 476.93L364.10 476.74L365.10 476.36L366.10 477.09L367.10 477.16L367.20 476.36L367.85 461.90L368.20 460.24L368.55 461.90L369.20 476.41L370.10 476.57L371.10 477.20L372.10 476.99L373.10 476.52L374.10 477.12L375.10 477.29L376.10 476.65L376.60 476.28L377.25 472.43L377.60 471.94L377.95 472.43L378.60 476.10L379.10 476.48L380.10 477.02L381.10 476.64L381.30 476.48L381.95 472.43L382.30 471.94L382.65 472.43L383.30 476.46L384.10 476.41L385.10 476.83L386.10 477.15L386.50 476.03L387.15 464.73L387.50 463.39L387.85 464.73L388.50 476.02L389.10 477.16L390.10 476.75L391.10 476.79L391.40 476.50L392.05 470.40L392.40 469.69L392.75 470.40L393.40 476.73L394.10 476.50L395.10 476.39L396.10 477.06L397.10 476.85L398.10 476.60L399.10 477.19L400.10 477.18L401.10 476.84L402.10 477.29L403.10 477.14L404.10 477.05L405.10 476.59L406.10 476.31L407.10 476.98L408.10 477.04L409.10 476.65L410.10 476.78L411.10 476.87L411.60 475.87L412.25 466.35L412.60 465.19L412.95 466.35L413.60 476.07L414.10 476.86L415.10 476.69L416.10 476.41L416.30 476.21L416.50 475.84L417.15 469.59L417.50 468.79L417.85 469.59L418.50 476.37L419.10 477.02L420.10 476.47L421.10 476.69L421.50 476.58L422.15 473.64L422.50 473.29L422.85 473.64L423.50 476.70L424.10 476.88L425.10 476.41L426.10 476.35L426.40 476.45L427.05 472.02L427.40 471.49L427.75 472.02L428.40 476.20L429.10 476.81L430.10 476.47L431.10 476.40L432.10 476.84L433.10 477.22L434.10 477.17L435.10 476.82L436.10 476.70L436.30 476.44L436.95 469.59L437.30 468.79L437.65 469.59L438.30 475.85L439.10 476.61L440.10 477.24L441.10 476.42L441.50 476.15L442.15 467.97L442.50 466.99L442.85 467.97L443.50 476.34L444.10 476.73L445.10 476.56L446.10 477.26L447.10 476.49L448.10 476.87L449.10 476.81L450.10 476.50L451.10 476.14L451.75 470.81L452.10 470.14L452.45 470.81L453.10 476.20L454.10 477.03L455.10 477.20L456.10 476.40L457.10 477.00L458.10 477.05L459.10 476.53L460.10 476.76L461.10 477.27L461.40 476.18L462.05 473.64L462.40 473.29L462.75 473.64L463.40 476.30L464.10 476.47L465.10 476.97L466.10 476.57L467.10 476.81L468.10 476.67L469.10 477.17L470.10 477.04L471.10 476.80L472.00 476.28L472.65 472.83L473.00 472.39L473.35 472.83L474.00 476.31L474.10 477.10L475.10 476.56L476.10 476.84L477.10 476.89L478.10 476.69L478.50 475.97L479.15 474.45L479.50 474.19L479.85 474.45L480.50 476.61L481.10 476.94L482.10 476.51L483.10 477.06L484.10 476.80L485.10 477.25L486.10 477.15L487.10 477.03L488.10 476.67L489.10 476.34L490.10 476.86L491.10 477.05L492.10 477.22L493.10 476.50L494.10 476.46L495.10 477.28L495.40 476.01L496.05 474.45L496.40 474.19L496.75 474.45L497.40 476.50L498.10 477.04L499.10 476.45L500.10 476.84L500.30 475.95L500.95 468.38L501.30 467.44L501.65 468.38L502.30 476.73L503.10 476.46L504.10 476.44L505.10 476.92L505.50 476.32L506.15 468.38L506.50 467.44L506.85 468.38L507.50 476.36L508.10 476.31L509.10 476.38L510.10 477.09L510.20 476.09L510.85 471.62L511.20 471.04L511.55 471.62L512.20 476.60L513.10 477.29L514.10 476.91L515.10 476.56L516.10 477.00L516.80 476.54L517.45 474.86L517.80 474.64L518.15 474.86L518.80 476.67L519.10 477.00L520.10 476.47L521.10 476.33L522.10 476.82L523.10 476.63L524.10 477.27L525.10 476.40L526.10 477.10L527.10 476.69L528.10 477.11L529.10 476.75L530.10 476.97L530.60 476.24L531.25 472.43L531.60 471.94L531.95 472.43L532.60 476.22L533.10 476.75L534.10 477.10L535.10 476.65L536.10 476.53L537.10 476.72L538.10 476.40L538.40 476.80L539.05 465.14L539.40 463.84L539.75 465.14L540.40 476.62L541.10 476.85L542.10 476.90L543.10 476.59L544.10 476.32L545.10 476.33L546.10 476.64L547.10 476.50L548.10 476.87L549.10 476.57L550.10 477.06L551.10 476.90L552.10 476.96L553.10 477.04L554.10 476.82L555.10 476.73L555.20 476.60L555.85 469.59L556.20 468.79L556.55 469.59L557.20 475.84L558.10 477.09L559.10 476.80L560.10 476.40L560.60 476.34L561.25 469.19L561.60 468.34L561.95 469.19L562.60 476.23L563.10 476.92L564.10 476.74L565.10 476.43L566.00 476.51L566.65 474.05L567.00 473.74L567.35 474.05L568.00 476.14L568.10 476.67L569.10 477.30L570.10 476.42L571.10 476.80L572.10 476.78L573.10 476.55L574.10 477.22L575.10 476.71L576.10 476.31L577.10 476.77L578.10 476.30L579.10 477.01L580.10 477.17L581.10 477.21L582.10 476.35L583.10 476.98L584.10 476.60L585.10 476.77L586.10 476.60L586.50 475.99L587.15 473.64L587.50 473.29L587.85 473.64L588.50 476.13L589.10 476.93L590.10 476.39L590.40 476.80L591.05 473.24L591.40 472.84L591.75 473.24L592.40 476.36L593.10 477.26L594.10 476.49L595.10 476.38L596.10 477.04L597.10 476.83L598.10 477.07L598.20 476.31L598.85 471.21L599.20 470.59L599.55 471.21L600.20 476.76L601.10 476.38L602.10 476.97L603.10 476.81L604.00 476.01L604.65 470.00L605.00 469.24L605.35 470.00L606.00 476.48L606.10 476.37L607.10 476.98L608.10 477.23L609.10 476.72L609.20 476.51L609.85 472.83L610.20 472.39L610.55 472.83L611.20 476.17L612.10 476.69L613.10 476.77L614.10 476.90L615.10 476.22L615.75 474.05L616.10 473.74L616.45 474.05L617.10 476.30L618.10 476.56L619.10 476.77L619.50 475.94L620.15 473.24L620.50 472.84L620.85 473.24L621.50 476.28L622.10 476.95L623.10 477.04L624.10 477.26L625.10 476.78L626.10 476.50L627.10 476.64L628.10 476.36L629.10 476.54L629.40 476.46L630.05 468.78L630.40 467.89L630.75 468.78L631.40 476.74L632.10 476.54L633.10 476.48L634.10 476.40L634.60 476.25L635.25 466.35L635.60 465.19L635.95 466.35L636.60 476.44L637.10 476.56L638.10 477.18L639.10 476.86L639.70 476.26L640.35 474.05L640.70 473.74L641.05 474.05L641.70 476.45L642.10 476.34L643.10 477.03L644.10 477.05L644.60 476.79L645.25 473.24L645.60 472.84L645.95 473.24L646.60 476.76L647.10 476.57L648.10 476.52L649.10 476.53L649.30 476.64L649.95 465.14L650.30 463.84L650.65 465.14L651.30 476.71L652.10 476.94L653.10 477.03L654.10 476.40L654.30 475.95L654.95 472.83L655.30 472.39L655.65 472.83L656.30 476.22L657.10 476.68L657.30 476.56L657.95 465.95L658.30 464.74L658.65 465.95L659.30 476.09L660.10 476.50L661.10 476.70L662.10 476.95L663.10 477.02L663.40 476.17L664.05 474.45L664.40 474.19L664.75 474.45L665.40 476.74L666.10 477.19L667.10 477.10L668.10 477.01L669.10 477.28L670.10 476.44L671.10 477.08L672.10 477.20L673.10 476.42L674.10 476.89L674.40 476.05L675.05 472.02L675.40 471.49L675.75 472.02L676.40 476.57L677.10 477.16L678.10 477.21L679.10 476.74L679.60 475.80L680.25 474.05L680.60 473.74L680.95 474.05L681.60 476.66L682.10 477.13L683.10 476.72L684.10 476.62L685.00 476.51L685.65 473.64L686.00 473.29L686.35 473.64L687.00 476.55L687.10 476.55L688.10 476.32L689.10 477.25L690.10 476.62L691.10 476.69L692.10 477.28L693.10 476.58L694.10 476.39L695.10 477.19L696.10 476.54L697.10 476.52L698.10 477.24L699.10 476.53L700.10 477.20L701.10 476.63L702.10 476.60L703.10 476.52L704.10 476.84L705.00 475.94L705.65 474.45L706.00 474.19L706.35 474.45L707.00 475.98L707.10 476.81L708.10 476.60L709.10 477.14L709.60 476.22L710.25 473.64L710.60 473.29L710.95 473.64L711.60 476.65L712.10 477.12L713.10 476.37L714.10 476.55L714.30 476.37L714.95 472.43L715.30 471.94L715.65 472.43L716.30 476.10L717.10 477.27L717.60 476.74L718.25 462.71L718.60 461.14L718.95 462.71L719.60 475.88L720.10 476.86L721.10 476.42L722.10 476.73L723.10 476.36L723.20 475.96L723.85 474.05L724.20 473.74L724.55 474.05L725.20 475.87L726.10 476.59L727.10 477.25L728.10 476.50L729.10 476.10L729.75 473.64L730.10 473.29L730.45 473.64L731.10 476.18L732.10 476.41L733.10 477.20L734.10 476.70L735.10 476.65L736.10 476.95L737.10 476.89L738.10 476.55L738.50 475.82L739.15 465.54L739.50 464.29L739.85 465.54L740.50 476.53L740.80 476.49L741.45 467.16L741.80 466.09L742.15 467.16L742.80 476.68L743.10 476.64L743.70 476.62L744.35 472.43L744.70 471.94L745.05 472.43L745.70 476.00L746.10 476.41L747.10 476.62L748.10 476.84L748.40 476.70L749.05 470.00L749.40 469.24L749.75 470.00L750.40 476.06L751.10 476.59L752.10 476.79L753.10 477.08L753.50 476.40L754.15 468.78L754.50 467.89L754.85 468.78L755.50 475.92L756.10 476.78L757.10 476.42L758.10 476.47L758.90 476.04L759.55 473.64L759.90 473.29L760.25 473.64L760.90 476.11L761.10 476.68L762.10 476.82L763.10 477.15L763.60 475.95L764.25 459.06L764.60 457.09L764.95 459.06L765.60 476.76L766.10 476.67L767.10 476.31L768.10 476.84L769.10 476.78L769.50 476.53L770.15 420.99L770.50 414.79L770.85 420.99L771.50 476.43L772.10 476.77L773.10 477.02" fill="none" stroke="#ff9830" stroke-width="0.8" stroke-opacity="0.5"/><path d="M60.1 479.0H773.2" stroke="#eab839" stroke-width="1.2" stroke-opacity="0.85"/></svg>
<div id="t43" class="a ax" style="left:-346.43px;width:400px;text-align:right;top:325.32px;line-height:14.59px;font-size:12.68px;color:#ccccdc;font-weight:normal;letter-spacing:-0.333px;">100%</div>
<div id="t44" class="a ax" style="left:-345.60px;width:400px;text-align:right;top:354.70px;line-height:14.59px;font-size:12.68px;color:#ccccdc;font-weight:normal;letter-spacing:0.500px;">80%</div>
<div id="t45" class="a ax" style="left:-345.60px;width:400px;text-align:right;top:384.08px;line-height:14.59px;font-size:12.68px;color:#ccccdc;font-weight:normal;letter-spacing:0.500px;">60%</div>
<div id="t46" class="a ax" style="left:-346.10px;width:400px;text-align:right;top:413.46px;line-height:14.59px;font-size:12.68px;color:#ccccdc;font-weight:normal;letter-spacing:0.000px;">40%</div>
<div id="t47" class="a ax" style="left:-346.10px;width:400px;text-align:right;top:442.84px;line-height:14.59px;font-size:12.68px;color:#ccccdc;font-weight:normal;letter-spacing:-0.000px;">20%</div>
<div id="t48" class="a ax" style="left:-345.90px;width:400px;text-align:right;top:472.22px;line-height:14.59px;font-size:12.68px;color:#ccccdc;font-weight:normal;letter-spacing:0.200px;">0%</div>
<div id="t49" class="a ax" style="left:-137.60px;width:400px;text-align:center;top:486.22px;line-height:14.59px;font-size:12.68px;color:#ccccdc;font-weight:normal;letter-spacing:0.000px;">16:00</div>
<div id="t50" class="a ax" style="left:-78.26px;width:400px;text-align:center;top:486.22px;line-height:14.59px;font-size:12.68px;color:#ccccdc;font-weight:normal;letter-spacing:-0.250px;">18:00</div>
<div id="t51" class="a ax" style="left:-18.68px;width:400px;text-align:center;top:486.22px;line-height:14.59px;font-size:12.68px;color:#ccccdc;font-weight:normal;letter-spacing:0.000px;">20:00</div>
<div id="t52" class="a ax" style="left:40.65px;width:400px;text-align:center;top:486.22px;line-height:14.59px;font-size:12.68px;color:#ccccdc;font-weight:normal;letter-spacing:-0.250px;">22:00</div>
<div id="t53" class="a ax" style="left:100.61px;width:400px;text-align:center;top:486.22px;line-height:14.59px;font-size:12.68px;color:#ccccdc;font-weight:normal;letter-spacing:-0.250px;">00:00</div>
<div id="t54" class="a ax" style="left:160.20px;width:400px;text-align:center;top:486.22px;line-height:14.59px;font-size:12.68px;color:#ccccdc;font-weight:normal;letter-spacing:0.000px;">02:00</div>
<div id="t55" class="a ax" style="left:219.53px;width:400px;text-align:center;top:486.22px;line-height:14.59px;font-size:12.68px;color:#ccccdc;font-weight:normal;letter-spacing:-0.250px;">04:00</div>
<div id="t56" class="a ax" style="left:279.49px;width:400px;text-align:center;top:486.22px;line-height:14.59px;font-size:12.68px;color:#ccccdc;font-weight:normal;letter-spacing:-0.250px;">06:00</div>
<div id="t57" class="a ax" style="left:338.45px;width:400px;text-align:center;top:486.22px;line-height:14.59px;font-size:12.68px;color:#ccccdc;font-weight:normal;letter-spacing:-0.250px;">08:00</div>
<div id="t58" class="a ax" style="left:398.04px;width:400px;text-align:center;top:486.22px;line-height:14.59px;font-size:12.68px;color:#ccccdc;font-weight:normal;letter-spacing:-0.000px;">10:00</div>
<div id="t59" class="a ax" style="left:458.00px;width:400px;text-align:center;top:486.22px;line-height:14.59px;font-size:12.68px;color:#ccccdc;font-weight:normal;letter-spacing:-0.000px;">12:00</div>
<div id="t60" class="a ax" style="left:517.34px;width:400px;text-align:center;top:486.22px;line-height:14.59px;font-size:12.68px;color:#ccccdc;font-weight:normal;letter-spacing:-0.250px;">14:00</div>
<div class="a" style="left:23.3px;top:517px;width:14px;height:4px;border-radius:2px;background:#eab839"></div>
<div id="t61" class="a ax" style="left:44.90px;top:510.12px;line-height:14.59px;font-size:12.68px;color:#ccccdc;font-weight:normal;letter-spacing:0.100px;">Busy System</div>
<div class="a" style="left:130.3px;top:517px;width:14px;height:4px;border-radius:2px;background:#0a4f91"></div>
<div id="t62" class="a ax" style="left:152.00px;top:510.12px;line-height:14.59px;font-size:12.68px;color:#ccccdc;font-weight:normal;letter-spacing:0.000px;">Busy User</div>
<div class="a" style="left:221.7px;top:517px;width:14px;height:4px;border-radius:2px;background:#8f1204"></div>
<div id="t63" class="a ax" style="left:243.70px;top:510.12px;line-height:14.59px;font-size:12.68px;color:#ccccdc;font-weight:normal;letter-spacing:0.000px;">Busy Iowait</div>
<div class="a" style="left:320.4px;top:517px;width:14px;height:4px;border-radius:2px;background:#ff9830"></div>
<div id="t64" class="a ax" style="left:341.70px;top:510.12px;line-height:14.59px;font-size:12.68px;color:#ccccdc;font-weight:normal;letter-spacing:-0.250px;">Busy IRQs</div>
<div class="a" style="left:411.1px;top:517px;width:14px;height:4px;border-radius:2px;background:#7a236b"></div>
<div id="t65" class="a ax" style="left:432.70px;top:510.12px;line-height:14.59px;font-size:12.68px;color:#ccccdc;font-weight:normal;letter-spacing:0.000px;">Busy Other</div>
<div class="a" style="left:508px;top:517px;width:14px;height:4px;border-radius:2px;background:#0b3560"></div>
<div id="t66" class="a ax" style="left:527.70px;top:510.12px;line-height:14.59px;font-size:12.68px;color:#ccccdc;font-weight:normal;letter-spacing:0.667px;">Idle</div>
<div class="p" style="left:799px;top:283px;width:781px;height:258px"></div>
<div id="t67" class="a ttl" style="left:808.20px;top:291.61px;line-height:17.02px;font-size:14.80px;color:#ccccdc;font-weight:normal;letter-spacing:0.273px;">Memory Basic</div>
<svg style="left:921.7px;top:293px" width="14" height="14" viewBox="0 0 14 14"><g opacity="0.78"><circle cx="7" cy="7" r="5.9" fill="none" stroke="#ccccdc" stroke-width="1.4"/><path d="M7 6.6V9.9" stroke="#ccccdc" stroke-width="1.7"/><path d="M7 3.9V5.4" stroke="#ccccdc" stroke-width="1.7"/></g></svg>
<svg style="left:0;top:0" width="1577" height="803"><path d="M865.00 432.06L866.00 432.46L867.00 432.61L868.00 432.48L869.00 432.62L870.00 432.75L871.00 433.24L872.01 433.59L873.01 433.49L874.01 433.53L875.01 433.40L876.01 432.89L877.01 432.36L878.01 432.13L879.01 432.44L880.01 432.36L881.01 432.28L882.01 432.67L883.01 432.14L884.01 432.79L885.01 435.89L886.02 439.59L887.02 439.02L888.02 434.85L889.02 431.32L890.02 431.46L891.02 431.85L892.02 432.38L893.02 432.15L894.02 432.06L895.02 432.40L896.02 432.80L897.02 432.53L898.02 432.65L899.02 433.39L900.03 433.34L901.03 433.31L902.03 433.04L903.03 431.96L904.03 431.60L905.03 430.60L906.03 430.97L907.03 431.46L908.03 431.74L909.03 431.90L910.03 431.31L911.03 431.28L912.03 430.87L913.03 430.54L914.04 431.47L915.04 432.39L916.04 433.05L917.04 433.58L918.04 433.67L919.04 433.03L920.04 432.84L921.04 432.96L922.04 432.23L923.04 431.59L924.04 431.17L925.04 430.75L926.04 431.49L927.04 432.20L928.05 433.46L929.05 434.42L930.05 433.98L931.05 433.66L932.05 433.61L933.05 434.27L934.05 433.33L935.05 433.58L936.05 433.19L937.05 432.70L938.05 433.05L939.05 432.40L940.05 432.46L941.05 432.68L942.06 431.92L943.06 432.16L944.06 431.27L945.06 430.78L946.06 430.58L947.06 430.91L948.06 430.64L949.06 430.66L950.06 431.14L951.06 431.72L952.06 432.31L953.06 432.55L954.06 431.74L955.06 431.54L956.07 430.88L957.07 430.32L958.07 430.81L959.07 431.12L960.07 430.81L961.07 431.00L962.07 431.11L963.07 431.44L964.07 431.34L965.07 431.46L966.07 431.39L967.07 430.90L968.07 431.03L969.07 430.93L970.08 430.67L971.08 431.74L972.08 431.96L973.08 431.87L974.08 432.11L975.08 432.92L976.08 434.33L977.08 434.89L978.08 434.21L979.08 433.61L980.08 433.41L981.08 433.69L982.08 430.61L983.08 428.07L984.09 427.83L985.09 430.35L986.09 432.73L987.09 432.70L988.09 432.87L989.09 432.58L990.09 433.00L991.09 432.94L992.09 432.81L993.09 432.33L994.09 432.68L995.09 432.45L996.09 433.07L997.09 433.17L998.10 432.58L999.10 432.18L1000.10 432.28L1001.10 432.19L1002.10 432.20L1003.10 431.81L1004.10 431.29L1005.10 431.75L1006.10 431.80L1007.10 433.04L1008.10 433.18L1009.10 433.96L1010.10 434.32L1011.10 433.80L1012.11 433.81L1013.11 434.10L1014.11 434.12L1015.11 434.08L1016.11 433.82L1017.11 433.88L1018.11 433.40L1019.11 433.65L1020.11 432.84L1021.11 432.83L1022.11 432.72L1023.11 432.17L1024.11 432.17L1025.11 431.75L1026.12 431.58L1027.12 431.76L1028.12 431.45L1029.12 431.18L1030.12 431.29L1031.12 431.71L1032.12 431.81L1033.12 431.31L1034.12 431.62L1035.12 430.53L1036.12 428.37L1037.12 427.01L1038.12 428.94L1039.12 431.43L1040.13 432.63L1041.13 433.34L1042.13 432.55L1043.13 432.98L1044.13 432.28L1045.13 431.86L1046.13 432.58L1047.13 432.79L1048.13 433.14L1049.13 433.70L1050.13 432.79L1051.13 432.75L1052.13 432.24L1053.13 432.26L1054.14 432.74L1055.14 432.74L1056.14 433.41L1057.14 433.65L1058.14 433.80L1059.14 434.00L1060.14 433.97L1061.14 433.53L1062.14 432.64L1063.14 431.78L1064.14 431.36L1065.14 430.84L1066.14 430.39L1067.14 431.10L1068.15 430.68L1069.15 431.01L1070.15 431.67L1071.15 432.67L1072.15 433.00L1073.15 433.66L1074.15 433.48L1075.15 432.67L1076.15 432.77L1077.15 431.89L1078.15 432.66L1079.15 432.91L1080.15 433.33L1081.15 434.05L1082.16 433.45L1083.16 432.88L1084.16 432.39L1085.16 431.95L1086.16 431.37L1087.16 431.11L1088.16 431.16L1089.16 430.87L1090.16 431.29L1091.16 432.05L1092.16 432.35L1093.16 433.05L1094.16 432.69L1095.16 433.23L1096.17 433.42L1097.17 433.62L1098.17 432.70L1099.17 432.24L1100.17 432.27L1101.17 431.25L1102.17 431.71L1103.17 431.45L1104.17 430.69L1105.17 430.61L1106.17 431.22L1107.17 431.06L1108.17 431.15L1109.18 431.96L1110.18 432.20L1111.18 433.07L1112.18 433.10L1113.18 433.89L1114.18 433.93L1115.18 433.21L1116.18 433.18L1117.18 433.37L1118.18 432.98L1119.18 432.45L1120.18 431.19L1121.18 430.93L1122.18 431.25L1123.19 431.16L1124.19 431.42L1125.19 431.14L1126.19 430.91L1127.19 430.81L1128.19 430.62L1129.19 430.91L1130.19 430.84L1131.19 430.84L1132.19 430.47L1133.19 430.46L1134.19 431.14L1135.19 432.31L1136.19 433.10L1137.20 433.71L1138.20 432.49L1139.20 431.90L1140.20 432.06L1141.20 431.11L1142.20 431.69L1143.20 431.69L1144.20 432.14L1145.20 432.53L1146.20 432.36L1147.20 432.39L1148.20 431.82L1149.20 432.27L1150.20 432.16L1151.21 431.39L1152.21 431.38L1153.21 431.38L1154.21 431.60L1155.21 431.92L1156.21 432.38L1157.21 433.14L1158.21 432.21L1159.21 432.37L1160.21 431.75L1161.21 431.14L1162.21 431.72L1163.21 432.00L1164.21 432.28L1165.22 432.90L1166.22 432.35L1167.22 432.25L1168.22 431.64L1169.22 430.73L1170.22 431.52L1171.22 431.66L1172.22 433.69L1173.22 436.40L1174.22 437.22L1175.22 435.02L1176.22 432.42L1177.22 431.42L1178.22 431.53L1179.23 431.58L1180.23 431.34L1181.23 431.65L1182.23 431.76L1183.23 432.61L1184.23 433.34L1185.23 433.60L1186.23 433.73L1187.23 433.80L1188.23 433.64L1189.23 433.18L1190.23 433.30L1191.23 432.63L1192.23 431.91L1193.24 431.72L1194.24 432.17L1195.24 432.67L1196.24 433.07L1197.24 434.09L1198.24 433.19L1199.24 432.63L1200.24 432.07L1201.24 431.64L1202.24 431.04L1203.24 431.68L1204.24 431.95L1205.24 431.72L1206.24 432.25L1207.25 432.39L1208.25 432.92L1209.25 433.48L1210.25 433.06L1211.25 432.99L1212.25 432.43L1213.25 430.75L1214.25 429.63L1215.25 430.71L1216.25 431.11L1217.25 431.26L1218.25 431.77L1219.25 432.71L1220.25 432.92L1221.26 434.14L1222.26 433.57L1223.26 432.30L1224.26 432.31L1225.26 431.00L1226.26 431.29L1227.26 431.08L1228.26 431.39L1229.26 431.52L1230.26 431.54L1231.26 432.71L1232.26 432.76L1233.26 433.30L1234.26 432.96L1235.27 432.38L1236.27 431.91L1237.27 431.81L1238.27 431.70L1239.27 431.45L1240.27 431.77L1241.27 431.40L1242.27 430.98L1243.27 430.96L1244.27 430.60L1245.27 430.49L1246.27 430.98L1247.27 430.71L1248.27 431.13L1249.28 431.02L1250.28 430.91L1251.28 432.10L1252.28 432.51L1253.28 432.26L1254.28 432.62L1255.28 431.93L1256.28 431.66L1257.28 431.75L1258.28 431.49L1259.28 432.04L1260.28 432.69L1261.28 432.84L1262.28 432.43L1263.29 432.63L1264.29 432.30L1265.29 431.92L1266.29 431.60L1267.29 432.08L1268.29 432.02L1269.29 431.89L1270.29 432.23L1271.29 433.06L1272.29 433.20L1273.29 433.91L1274.29 433.66L1275.29 433.06L1276.29 432.48L1277.30 432.31L1278.30 432.26L1279.30 432.63L1280.30 432.51L1281.30 432.97L1282.30 433.19L1283.30 433.28L1284.30 433.15L1285.30 433.31L1286.30 433.32L1287.30 432.62L1288.30 431.87L1289.30 431.05L1290.30 430.95L1291.31 431.25L1292.31 431.13L1293.31 431.13L1294.31 431.84L1295.31 432.62L1296.31 432.84L1297.31 433.57L1298.31 434.07L1299.31 433.94L1300.31 433.83L1301.31 433.08L1302.31 432.58L1303.31 432.24L1304.31 431.85L1305.32 431.50L1306.32 431.03L1307.32 431.32L1308.32 430.90L1309.32 430.85L1310.32 431.82L1311.32 432.21L1312.32 432.77L1313.32 433.06L1314.32 433.33L1315.32 433.29L1316.32 433.58L1317.32 434.08L1318.32 433.49L1319.33 432.21L1320.33 431.57L1321.33 431.46L1322.33 431.98L1323.33 432.78L1324.33 433.01L1325.33 433.86L1326.33 433.67L1327.33 434.05L1328.33 433.63L1329.33 433.80L1330.33 432.82L1331.33 430.83L1332.34 430.36L1333.34 431.47L1334.34 432.65L1335.34 432.29L1336.34 432.08L1337.34 431.69L1338.34 432.03L1339.34 431.11L1340.34 430.83L1341.34 430.93L1342.34 430.80L1343.34 430.90L1344.34 430.54L1345.34 430.86L1346.35 431.13L1347.35 432.07L1348.35 433.26L1349.35 433.63L1350.35 433.16L1351.35 432.84L1352.35 432.17L1353.35 431.18L1354.35 431.49L1355.35 432.08L1356.35 432.80L1357.35 432.93L1358.35 432.33L1359.35 432.40L1360.36 431.88L1361.36 431.76L1362.36 432.29L1363.36 432.78L1364.36 432.91L1365.36 433.71L1366.36 433.10L1367.36 432.91L1368.36 432.77L1369.36 433.00L1370.36 432.69L1371.36 431.90L1372.36 431.72L1373.36 431.45L1374.37 431.34L1375.37 431.26L1376.37 431.15L1377.37 430.89L1378.37 431.67L1379.37 432.35L1380.37 432.64L1381.37 433.36L1382.37 432.56L1383.37 431.66L1384.37 431.54L1385.37 431.05L1386.37 430.72L1387.37 430.65L1388.38 431.19L1389.38 431.36L1390.38 431.67L1391.38 432.29L1392.38 432.34L1393.38 432.76L1394.38 432.43L1395.38 433.08L1396.38 433.54L1397.38 433.24L1398.38 433.02L1399.38 433.33L1400.38 433.25L1401.38 432.38L1402.39 432.52L1403.39 431.83L1404.39 432.01L1405.39 431.63L1406.39 431.88L1407.39 432.43L1408.39 434.51L1409.39 436.09L1410.39 435.90L1411.39 433.76L1412.39 431.88L1413.39 431.61L1414.39 431.20L1415.39 430.89L1416.40 430.76L1417.40 430.74L1418.40 430.95L1419.40 431.35L1420.40 431.17L1421.40 431.73L1422.40 431.76L1423.40 432.07L1424.40 432.19L1425.40 432.37L1426.40 432.07L1427.40 431.78L1428.40 431.18L1429.40 430.74L1430.41 430.99L1431.41 431.17L1432.41 430.97L1433.41 431.07L1434.41 431.02L1435.41 431.67L1436.41 432.05L1437.41 431.73L1438.41 431.74L1439.41 431.96L1440.41 432.32L1441.41 432.39L1442.41 432.54L1443.41 431.41L1444.42 431.22L1445.42 430.67L1446.42 431.30L1447.42 431.61L1448.42 431.34L1449.42 431.45L1450.42 432.25L1451.42 432.82L1452.42 433.56L1453.42 433.34L1454.42 433.47L1455.42 433.62L1456.42 433.72L1457.42 433.82L1458.43 433.91L1459.43 433.52L1460.43 432.94L1461.43 432.61L1462.43 432.72L1463.43 432.66L1464.43 433.16L1465.43 432.84L1466.43 432.93L1467.43 433.05L1468.43 432.68L1469.43 432.41L1470.43 432.51L1471.43 432.14L1472.44 431.28L1473.44 431.04L1474.44 431.28L1475.44 430.80L1476.44 430.50L1477.44 430.27L1478.44 430.97L1479.44 430.84L1480.44 430.49L1481.44 430.59L1482.44 431.38L1483.44 431.99L1484.44 433.37L1485.44 433.90L1486.45 433.38L1487.45 433.01L1488.45 433.19L1489.45 432.92L1490.45 433.50L1491.45 433.67L1492.45 433.82L1493.45 433.69L1494.45 432.84L1495.45 432.13L1496.45 431.23L1497.45 430.87L1498.45 431.14L1499.45 431.79L1500.46 432.63L1501.46 432.60L1502.46 432.68L1503.46 432.23L1504.46 432.59L1505.46 431.84L1506.46 432.72L1507.46 432.96L1508.46 433.16L1509.46 432.80L1510.46 432.58L1511.46 432.56L1512.46 431.70L1513.46 430.47L1514.47 429.88L1515.47 430.80L1516.47 432.31L1517.47 434.34L1518.47 433.11L1519.47 432.67L1520.47 431.54L1521.47 431.10L1522.47 430.87L1523.47 431.88L1524.47 431.81L1525.47 432.50L1526.47 432.66L1527.47 432.54L1528.48 433.25L1529.48 433.00L1530.48 433.15L1531.48 433.11L1532.48 433.44L1533.48 433.71L1534.48 433.77L1535.48 433.33L1536.48 433.45L1537.48 432.84L1538.48 433.04L1539.48 433.06L1540.48 433.44L1541.48 433.30L1542.49 433.24L1543.49 432.80L1544.49 433.18L1545.49 433.52L1546.49 433.26L1547.49 433.63L1548.49 433.65L1549.49 433.40L1550.49 433.68L1551.49 433.02L1552.49 432.04L1553.49 431.86L1554.49 431.90L1555.49 432.27L1556.50 432.70L1557.50 432.81L1558.50 437.42L1559.50 442.06L1560.50 442.49L1561.50 437.95L1562.50 433.48L1562.50 479.00L1561.50 479.00L1560.50 479.00L1559.50 479.00L1558.50 479.00L1557.50 479.00L1556.50 479.00L1555.49 479.00L1554.49 479.00L1553.49 479.00L1552.49 479.00L1551.49 479.00L1550.49 479.00L1549.49 479.00L1548.49 479.00L1547.49 479.00L1546.49 479.00L1545.49 479.00L1544.49 479.00L1543.49 479.00L1542.49 479.00L1541.48 479.00L1540.48 479.00L1539.48 479.00L1538.48 479.00L1537.48 479.00L1536.48 479.00L1535.48 479.00L1534.48 479.00L1533.48 479.00L1532.48 479.00L1531.48 479.00L1530.48 479.00L1529.48 479.00L1528.48 479.00L1527.47 479.00L1526.47 479.00L1525.47 479.00L1524.47 479.00L1523.47 479.00L1522.47 479.00L1521.47 479.00L1520.47 479.00L1519.47 479.00L1518.47 479.00L1517.47 479.00L1516.47 479.00L1515.47 479.00L1514.47 479.00L1513.46 479.00L1512.46 479.00L1511.46 479.00L1510.46 479.00L1509.46 479.00L1508.46 479.00L1507.46 479.00L1506.46 479.00L1505.46 479.00L1504.46 479.00L1503.46 479.00L1502.46 479.00L1501.46 479.00L1500.46 479.00L1499.45 479.00L1498.45 479.00L1497.45 479.00L1496.45 479.00L1495.45 479.00L1494.45 479.00L1493.45 479.00L1492.45 479.00L1491.45 479.00L1490.45 479.00L1489.45 479.00L1488.45 479.00L1487.45 479.00L1486.45 479.00L1485.44 479.00L1484.44 479.00L1483.44 479.00L1482.44 479.00L1481.44 479.00L1480.44 479.00L1479.44 479.00L1478.44 479.00L1477.44 479.00L1476.44 479.00L1475.44 479.00L1474.44 479.00L1473.44 479.00L1472.44 479.00L1471.43 479.00L1470.43 479.00L1469.43 479.00L1468.43 479.00L1467.43 479.00L1466.43 479.00L1465.43 479.00L1464.43 479.00L1463.43 479.00L1462.43 479.00L1461.43 479.00L1460.43 479.00L1459.43 479.00L1458.43 479.00L1457.42 479.00L1456.42 479.00L1455.42 479.00L1454.42 479.00L1453.42 479.00L1452.42 479.00L1451.42 479.00L1450.42 479.00L1449.42 479.00L1448.42 479.00L1447.42 479.00L1446.42 479.00L1445.42 479.00L1444.42 479.00L1443.41 479.00L1442.41 479.00L1441.41 479.00L1440.41 479.00L1439.41 479.00L1438.41 479.00L1437.41 479.00L1436.41 479.00L1435.41 479.00L1434.41 479.00L1433.41 479.00L1432.41 479.00L1431.41 479.00L1430.41 479.00L1429.40 479.00L1428.40 479.00L1427.40 479.00L1426.40 479.00L1425.40 479.00L1424.40 479.00L1423.40 479.00L1422.40 479.00L1421.40 479.00L1420.40 479.00L1419.40 479.00L1418.40 479.00L1417.40 479.00L1416.40 479.00L1415.39 479.00L1414.39 479.00L1413.39 479.00L1412.39 479.00L1411.39 479.00L1410.39 479.00L1409.39 479.00L1408.39 479.00L1407.39 479.00L1406.39 479.00L1405.39 479.00L1404.39 479.00L1403.39 479.00L1402.39 479.00L1401.38 479.00L1400.38 479.00L1399.38 479.00L1398.38 479.00L1397.38 479.00L1396.38 479.00L1395.38 479.00L1394.38 479.00L1393.38 479.00L1392.38 479.00L1391.38 479.00L1390.38 479.00L1389.38 479.00L1388.38 479.00L1387.37 479.00L1386.37 479.00L1385.37 479.00L1384.37 479.00L1383.37 479.00L1382.37 479.00L1381.37 479.00L1380.37 479.00L1379.37 479.00L1378.37 479.00L1377.37 479.00L1376.37 479.00L1375.37 479.00L1374.37 479.00L1373.36 479.00L1372.36 479.00L1371.36 479.00L1370.36 479.00L1369.36 479.00L1368.36 479.00L1367.36 479.00L1366.36 479.00L1365.36 479.00L1364.36 479.00L1363.36 479.00L1362.36 479.00L1361.36 479.00L1360.36 479.00L1359.35 479.00L1358.35 479.00L1357.35 479.00L1356.35 479.00L1355.35 479.00L1354.35 479.00L1353.35 479.00L1352.35 479.00L1351.35 479.00L1350.35 479.00L1349.35 479.00L1348.35 479.00L1347.35 479.00L1346.35 479.00L1345.34 479.00L1344.34 479.00L1343.34 479.00L1342.34 479.00L1341.34 479.00L1340.34 479.00L1339.34 479.00L1338.34 479.00L1337.34 479.00L1336.34 479.00L1335.34 479.00L1334.34 479.00L1333.34 479.00L1332.34 479.00L1331.33 479.00L1330.33 479.00L1329.33 479.00L1328.33 479.00L1327.33 479.00L1326.33 479.00L1325.33 479.00L1324.33 479.00L1323.33 479.00L1322.33 479.00L1321.33 479.00L1320.33 479.00L1319.33 479.00L1318.32 479.00L1317.32 479.00L1316.32 479.00L1315.32 479.00L1314.32 479.00L1313.32 479.00L1312.32 479.00L1311.32 479.00L1310.32 479.00L1309.32 479.00L1308.32 479.00L1307.32 479.00L1306.32 479.00L1305.32 479.00L1304.31 479.00L1303.31 479.00L1302.31 479.00L1301.31 479.00L1300.31 479.00L1299.31 479.00L1298.31 479.00L1297.31 479.00L1296.31 479.00L1295.31 479.00L1294.31 479.00L1293.31 479.00L1292.31 479.00L1291.31 479.00L1290.30 479.00L1289.30 479.00L1288.30 479.00L1287.30 479.00L1286.30 479.00L1285.30 479.00L1284.30 479.00L1283.30 479.00L1282.30 479.00L1281.30 479.00L1280.30 479.00L1279.30 479.00L1278.30 479.00L1277.30 479.00L1276.29 479.00L1275.29 479.00L1274.29 479.00L1273.29 479.00L1272.29 479.00L1271.29 479.00L1270.29 479.00L1269.29 479.00L1268.29 479.00L1267.29 479.00L1266.29 479.00L1265.29 479.00L1264.29 479.00L1263.29 479.00L1262.28 479.00L1261.28 479.00L1260.28 479.00L1259.28 479.00L1258.28 479.00L1257.28 479.00L1256.28 479.00L1255.28 479.00L1254.28 479.00L1253.28 479.00L1252.28 479.00L1251.28 479.00L1250.28 479.00L1249.28 479.00L1248.27 479.00L1247.27 479.00L1246.27 479.00L1245.27 479.00L1244.27 479.00L1243.27 479.00L1242.27 479.00L1241.27 479.00L1240.27 479.00L1239.27 479.00L1238.27 479.00L1237.27 479.00L1236.27 479.00L1235.27 479.00L1234.26 479.00L1233.26 479.00L1232.26 479.00L1231.26 479.00L1230.26 479.00L1229.26 479.00L1228.26 479.00L1227.26 479.00L1226.26 479.00L1225.26 479.00L1224.26 479.00L1223.26 479.00L1222.26 479.00L1221.26 479.00L1220.25 479.00L1219.25 479.00L1218.25 479.00L1217.25 479.00L1216.25 479.00L1215.25 479.00L1214.25 479.00L1213.25 479.00L1212.25 479.00L1211.25 479.00L1210.25 479.00L1209.25 479.00L1208.25 479.00L1207.25 479.00L1206.24 479.00L1205.24 479.00L1204.24 479.00L1203.24 479.00L1202.24 479.00L1201.24 479.00L1200.24 479.00L1199.24 479.00L1198.24 479.00L1197.24 479.00L1196.24 479.00L1195.24 479.00L1194.24 479.00L1193.24 479.00L1192.23 479.00L1191.23 479.00L1190.23 479.00L1189.23 479.00L1188.23 479.00L1187.23 479.00L1186.23 479.00L1185.23 479.00L1184.23 479.00L1183.23 479.00L1182.23 479.00L1181.23 479.00L1180.23 479.00L1179.23 479.00L1178.22 479.00L1177.22 479.00L1176.22 479.00L1175.22 479.00L1174.22 479.00L1173.22 479.00L1172.22 479.00L1171.22 479.00L1170.22 479.00L1169.22 479.00L1168.22 479.00L1167.22 479.00L1166.22 479.00L1165.22 479.00L1164.21 479.00L1163.21 479.00L1162.21 479.00L1161.21 479.00L1160.21 479.00L1159.21 479.00L1158.21 479.00L1157.21 479.00L1156.21 479.00L1155.21 479.00L1154.21 479.00L1153.21 479.00L1152.21 479.00L1151.21 479.00L1150.20 479.00L1149.20 479.00L1148.20 479.00L1147.20 479.00L1146.20 479.00L1145.20 479.00L1144.20 479.00L1143.20 479.00L1142.20 479.00L1141.20 479.00L1140.20 479.00L1139.20 479.00L1138.20 479.00L1137.20 479.00L1136.19 479.00L1135.19 479.00L1134.19 479.00L1133.19 479.00L1132.19 479.00L1131.19 479.00L1130.19 479.00L1129.19 479.00L1128.19 479.00L1127.19 479.00L1126.19 479.00L1125.19 479.00L1124.19 479.00L1123.19 479.00L1122.18 479.00L1121.18 479.00L1120.18 479.00L1119.18 479.00L1118.18 479.00L1117.18 479.00L1116.18 479.00L1115.18 479.00L1114.18 479.00L1113.18 479.00L1112.18 479.00L1111.18 479.00L1110.18 479.00L1109.18 479.00L1108.17 479.00L1107.17 479.00L1106.17 479.00L1105.17 479.00L1104.17 479.00L1103.17 479.00L1102.17 479.00L1101.17 479.00L1100.17 479.00L1099.17 479.00L1098.17 479.00L1097.17 479.00L1096.17 479.00L1095.16 479.00L1094.16 479.00L1093.16 479.00L1092.16 479.00L1091.16 479.00L1090.16 479.00L1089.16 479.00L1088.16 479.00L1087.16 479.00L1086.16 479.00L1085.16 479.00L1084.16 479.00L1083.16 479.00L1082.16 479.00L1081.15 479.00L1080.15 479.00L1079.15 479.00L1078.15 479.00L1077.15 479.00L1076.15 479.00L1075.15 479.00L1074.15 479.00L1073.15 479.00L1072.15 479.00L1071.15 479.00L1070.15 479.00L1069.15 479.00L1068.15 479.00L1067.14 479.00L1066.14 479.00L1065.14 479.00L1064.14 479.00L1063.14 479.00L1062.14 479.00L1061.14 479.00L1060.14 479.00L1059.14 479.00L1058.14 479.00L1057.14 479.00L1056.14 479.00L1055.14 479.00L1054.14 479.00L1053.13 479.00L1052.13 479.00L1051.13 479.00L1050.13 479.00L1049.13 479.00L1048.13 479.00L1047.13 479.00L1046.13 479.00L1045.13 479.00L1044.13 479.00L1043.13 479.00L1042.13 479.00L1041.13 479.00L1040.13 479.00L1039.12 479.00L1038.12 479.00L1037.12 479.00L1036.12 479.00L1035.12 479.00L1034.12 479.00L1033.12 479.00L1032.12 479.00L1031.12 479.00L1030.12 479.00L1029.12 479.00L1028.12 479.00L1027.12 479.00L1026.12 479.00L1025.11 479.00L1024.11 479.00L1023.11 479.00L1022.11 479.00L1021.11 479.00L1020.11 479.00L1019.11 479.00L1018.11 479.00L1017.11 479.00L1016.11 479.00L1015.11 479.00L1014.11 479.00L1013.11 479.00L1012.11 479.00L1011.10 479.00L1010.10 479.00L1009.10 479.00L1008.10 479.00L1007.10 479.00L1006.10 479.00L1005.10 479.00L1004.10 479.00L1003.10 479.00L1002.10 479.00L1001.10 479.00L1000.10 479.00L999.10 479.00L998.10 479.00L997.09 479.00L996.09 479.00L995.09 479.00L994.09 479.00L993.09 479.00L992.09 479.00L991.09 479.00L990.09 479.00L989.09 479.00L988.09 479.00L987.09 479.00L986.09 479.00L985.09 479.00L984.09 479.00L983.08 479.00L982.08 479.00L981.08 479.00L980.08 479.00L979.08 479.00L978.08 479.00L977.08 479.00L976.08 479.00L975.08 479.00L974.08 479.00L973.08 479.00L972.08 479.00L971.08 479.00L970.08 479.00L969.07 479.00L968.07 479.00L967.07 479.00L966.07 479.00L965.07 479.00L964.07 479.00L963.07 479.00L962.07 479.00L961.07 479.00L960.07 479.00L959.07 479.00L958.07 479.00L957.07 479.00L956.07 479.00L955.06 479.00L954.06 479.00L953.06 479.00L952.06 479.00L951.06 479.00L950.06 479.00L949.06 479.00L948.06 479.00L947.06 479.00L946.06 479.00L945.06 479.00L944.06 479.00L943.06 479.00L942.06 479.00L941.05 479.00L940.05 479.00L939.05 479.00L938.05 479.00L937.05 479.00L936.05 479.00L935.05 479.00L934.05 479.00L933.05 479.00L932.05 479.00L931.05 479.00L930.05 479.00L929.05 479.00L928.05 479.00L927.04 479.00L926.04 479.00L925.04 479.00L924.04 479.00L923.04 479.00L922.04 479.00L921.04 479.00L920.04 479.00L919.04 479.00L918.04 479.00L917.04 479.00L916.04 479.00L915.04 479.00L914.04 479.00L913.03 479.00L912.03 479.00L911.03 479.00L910.03 479.00L909.03 479.00L908.03 479.00L907.03 479.00L906.03 479.00L905.03 479.00L904.03 479.00L903.03 479.00L902.03 479.00L901.03 479.00L900.03 479.00L899.02 479.00L898.02 479.00L897.02 479.00L896.02 479.00L895.02 479.00L894.02 479.00L893.02 479.00L892.02 479.00L891.02 479.00L890.02 479.00L889.02 479.00L888.02 479.00L887.02 479.00L886.02 479.00L885.01 479.00L884.01 479.00L883.01 479.00L882.01 479.00L881.01 479.00L880.01 479.00L879.01 479.00L878.01 479.00L877.01 479.00L876.01 479.00L875.01 479.00L874.01 479.00L873.01 479.00L872.01 479.00L871.00 479.00L870.00 479.00L869.00 479.00L868.00 479.00L867.00 479.00L866.00 479.00L865.00 479.00Z" fill="#e8c41a" fill-opacity="0.4"/><path d="M865.00 401.11L866.00 400.22L867.00 401.58L868.00 400.74L869.00 401.09L870.00 400.23L871.00 401.32L872.01 399.70L873.01 399.81L874.01 399.71L875.01 400.99L876.01 401.06L877.01 399.90L878.01 400.39L879.01 401.34L880.01 400.80L881.01 399.70L882.01 400.00L883.01 399.85L884.01 399.77L885.01 400.40L886.02 399.66L887.02 401.53L888.02 400.44L889.02 400.63L890.02 400.92L891.02 401.19L892.02 401.31L893.02 400.35L894.02 400.23L895.02 400.41L896.02 399.53L897.02 400.38L898.02 401.04L899.02 401.66L900.03 401.24L901.03 400.95L902.03 400.84L903.03 399.54L904.03 400.23L905.03 400.25L906.03 400.93L907.03 399.73L908.03 400.33L909.03 400.62L910.03 401.23L911.03 401.32L912.03 400.85L913.03 399.85L914.04 401.19L915.04 401.49L916.04 400.71L917.04 400.28L918.04 400.60L919.04 399.81L920.04 401.07L921.04 401.67L922.04 400.64L923.04 401.07L924.04 401.34L925.04 399.93L926.04 401.58L927.04 400.88L928.05 399.94L929.05 399.68L930.05 400.04L931.05 400.77L932.05 401.03L933.05 400.22L934.05 401.54L935.05 400.29L936.05 400.52L937.05 399.77L938.05 401.64L939.05 399.80L940.05 401.49L941.05 400.70L942.06 400.73L943.06 400.73L944.06 400.08L945.06 401.50L946.06 401.68L947.06 401.30L948.06 400.82L949.06 399.77L950.06 401.31L951.06 400.13L952.06 401.47L953.06 400.03L954.06 400.76L955.06 401.33L956.07 399.91L957.07 400.71L958.07 399.67L959.07 399.57L960.07 399.90L961.07 401.67L962.07 401.57L963.07 400.95L964.07 400.18L965.07 400.98L966.07 401.12L967.07 400.34L968.07 400.80L969.07 401.27L970.08 399.54L971.08 399.94L972.08 400.53L973.08 399.81L974.08 400.35L975.08 400.75L976.08 399.88L977.08 400.64L978.08 400.08L979.08 400.75L980.08 400.23L981.08 400.91L982.08 399.58L983.08 400.98L984.09 399.82L985.09 401.61L986.09 400.82L987.09 400.53L988.09 400.41L989.09 400.87L990.09 401.02L991.09 401.17L992.09 401.15L993.09 400.57L994.09 401.69L995.09 401.34L996.09 401.38L997.09 400.40L998.10 400.45L999.10 400.75L1000.10 401.49L1001.10 400.66L1002.10 400.66L1003.10 400.45L1004.10 401.49L1005.10 400.21L1006.10 399.62L1007.10 401.10L1008.10 401.48L1009.10 401.11L1010.10 400.81L1011.10 401.15L1012.11 400.17L1013.11 400.81L1014.11 399.65L1015.11 399.77L1016.11 400.48L1017.11 400.61L1018.11 400.37L1019.11 399.61L1020.11 401.03L1021.11 400.66L1022.11 400.03L1023.11 400.17L1024.11 400.37L1025.11 400.02L1026.12 399.65L1027.12 401.50L1028.12 401.63L1029.12 400.96L1030.12 401.41L1031.12 400.43L1032.12 401.27L1033.12 399.99L1034.12 401.14L1035.12 400.75L1036.12 401.49L1037.12 399.72L1038.12 401.24L1039.12 399.77L1040.13 400.68L1041.13 401.59L1042.13 399.50L1043.13 400.04L1044.13 400.16L1045.13 400.21L1046.13 399.64L1047.13 401.47L1048.13 401.29L1049.13 400.37L1050.13 400.28L1051.13 400.79L1052.13 399.60L1053.13 399.57L1054.14 401.48L1055.14 400.18L1056.14 400.60L1057.14 401.55L1058.14 401.65L1059.14 400.54L1060.14 399.95L1061.14 400.15L1062.14 401.53L1063.14 401.47L1064.14 399.93L1065.14 401.34L1066.14 400.28L1067.14 400.54L1068.15 399.88L1069.15 401.44L1070.15 401.69L1071.15 399.94L1072.15 400.89L1073.15 399.92L1074.15 401.44L1075.15 399.61L1076.15 399.73L1077.15 401.10L1078.15 400.19L1079.15 401.48L1080.15 401.41L1081.15 401.07L1082.16 399.80L1083.16 401.03L1084.16 401.56L1085.16 400.48L1086.16 399.67L1087.16 399.99L1088.16 400.18L1089.16 401.06L1090.16 399.93L1091.16 399.90L1092.16 400.02L1093.16 400.96L1094.16 401.24L1095.16 400.32L1096.17 400.96L1097.17 401.45L1098.17 400.80L1099.17 400.00L1100.17 400.16L1101.17 401.54L1102.17 400.97L1103.17 400.11L1104.17 400.91L1105.17 399.70L1106.17 401.66L1107.17 400.47L1108.17 400.66L1109.18 400.67L1110.18 399.60L1111.18 400.82L1112.18 400.13L1113.18 400.05L1114.18 401.27L1115.18 399.69L1116.18 400.13L1117.18 401.16L1118.18 400.04L1119.18 400.11L1120.18 400.71L1121.18 399.91L1122.18 401.47L1123.19 401.67L1124.19 399.57L1125.19 400.52L1126.19 401.15L1127.19 400.35L1128.19 401.54L1129.19 400.60L1130.19 399.90L1131.19 400.72L1132.19 400.92L1133.19 400.29L1134.19 400.95L1135.19 401.22L1136.19 400.64L1137.20 400.61L1138.20 401.36L1139.20 401.01L1140.20 400.65L1141.20 401.59L1142.20 399.88L1143.20 401.22L1144.20 399.86L1145.20 400.84L1146.20 400.02L1147.20 400.47L1148.20 401.20L1149.20 401.23L1150.20 401.24L1151.21 400.02L1152.21 400.58L1153.21 399.99L1154.21 400.78L1155.21 400.60L1156.21 399.58L1157.21 400.81L1158.21 401.07L1159.21 400.76L1160.21 401.42L1161.21 399.90L1162.21 399.83L1163.21 399.54L1164.21 400.59L1165.22 400.46L1166.22 400.47L1167.22 400.08L1168.22 401.26L1169.22 399.66L1170.22 401.50L1171.22 400.75L1172.22 400.70L1173.22 401.24L1174.22 400.02L1175.22 399.82L1176.22 400.18L1177.22 399.59L1178.22 400.19L1179.23 400.87L1180.23 400.66L1181.23 400.08L1182.23 400.80L1183.23 399.69L1184.23 401.31L1185.23 399.88L1186.23 400.06L1187.23 399.85L1188.23 401.02L1189.23 401.33L1190.23 401.23L1191.23 399.63L1192.23 400.40L1193.24 400.30L1194.24 399.98L1195.24 401.64L1196.24 399.59L1197.24 400.58L1198.24 401.17L1199.24 401.67L1200.24 399.82L1201.24 400.50L1202.24 401.14L1203.24 399.59L1204.24 400.03L1205.24 401.46L1206.24 399.81L1207.25 400.36L1208.25 400.16L1209.25 400.43L1210.25 399.67L1211.25 399.58L1212.25 401.69L1213.25 401.18L1214.25 401.11L1215.25 400.01L1216.25 400.06L1217.25 400.71L1218.25 400.03L1219.25 400.52L1220.25 401.55L1221.26 400.30L1222.26 400.24L1223.26 401.66L1224.26 400.84L1225.26 399.59L1226.26 400.39L1227.26 400.93L1228.26 399.63L1229.26 400.26L1230.26 401.03L1231.26 401.40L1232.26 400.80L1233.26 401.45L1234.26 400.52L1235.27 400.36L1236.27 401.35L1237.27 400.34L1238.27 401.22L1239.27 399.97L1240.27 400.26L1241.27 399.90L1242.27 400.71L1243.27 399.86L1244.27 399.95L1245.27 399.97L1246.27 400.53L1247.27 400.18L1248.27 400.48L1249.28 401.69L1250.28 400.99L1251.28 401.40L1252.28 399.95L1253.28 400.34L1254.28 399.66L1255.28 401.02L1256.28 400.30L1257.28 400.10L1258.28 399.54L1259.28 399.90L1260.28 400.08L1261.28 400.36L1262.28 401.53L1263.29 401.07L1264.29 400.09L1265.29 400.29L1266.29 399.84L1267.29 401.56L1268.29 400.29L1269.29 401.18L1270.29 401.09L1271.29 401.50L1272.29 399.54L1273.29 400.21L1274.29 400.35L1275.29 399.68L1276.29 401.44L1277.30 400.22L1278.30 401.20L1279.30 400.64L1280.30 399.62L1281.30 400.37L1282.30 400.02L1283.30 399.59L1284.30 399.83L1285.30 400.81L1286.30 399.57L1287.30 400.19L1288.30 400.43L1289.30 400.70L1290.30 399.80L1291.31 401.05L1292.31 400.07L1293.31 401.10L1294.31 400.97L1295.31 399.82L1296.31 399.95L1297.31 400.12L1298.31 401.07L1299.31 400.39L1300.31 400.35L1301.31 401.41L1302.31 400.00L1303.31 400.14L1304.31 400.26L1305.32 399.97L1306.32 399.59L1307.32 399.55L1308.32 400.89L1309.32 400.75L1310.32 401.28L1311.32 401.65L1312.32 400.16L1313.32 400.98L1314.32 401.52L1315.32 399.98L1316.32 401.02L1317.32 400.97L1318.32 401.60L1319.33 401.41L1320.33 400.02L1321.33 400.89L1322.33 399.70L1323.33 400.44L1324.33 400.36L1325.33 399.63L1326.33 400.34L1327.33 400.22L1328.33 400.59L1329.33 400.12L1330.33 399.85L1331.33 400.39L1332.34 400.55L1333.34 399.87L1334.34 400.96L1335.34 400.03L1336.34 399.70L1337.34 400.25L1338.34 400.43L1339.34 399.83L1340.34 400.78L1341.34 401.04L1342.34 400.72L1343.34 401.04L1344.34 399.55L1345.34 400.36L1346.35 400.30L1347.35 399.64L1348.35 400.39L1349.35 399.62L1350.35 400.59L1351.35 400.79L1352.35 400.53L1353.35 400.22L1354.35 400.06L1355.35 399.55L1356.35 400.26L1357.35 401.46L1358.35 400.74L1359.35 400.08L1360.36 400.97L1361.36 399.91L1362.36 400.53L1363.36 400.85L1364.36 401.60L1365.36 400.30L1366.36 400.77L1367.36 401.57L1368.36 401.20L1369.36 400.88L1370.36 400.87L1371.36 400.40L1372.36 400.41L1373.36 400.11L1374.37 401.33L1375.37 401.44L1376.37 400.34L1377.37 401.50L1378.37 399.58L1379.37 399.80L1380.37 400.62L1381.37 400.18L1382.37 400.29L1383.37 401.65L1384.37 399.83L1385.37 399.92L1386.37 400.00L1387.37 401.00L1388.38 400.02L1389.38 399.50L1390.38 400.70L1391.38 400.37L1392.38 400.03L1393.38 400.59L1394.38 400.93L1395.38 400.71L1396.38 400.87L1397.38 400.73L1398.38 401.33L1399.38 401.63L1400.38 400.23L1401.38 400.26L1402.39 401.45L1403.39 400.19L1404.39 401.08L1405.39 401.03L1406.39 401.01L1407.39 401.62L1408.39 401.31L1409.39 399.85L1410.39 400.87L1411.39 400.58L1412.39 400.74L1413.39 400.31L1414.39 400.13L1415.39 401.15L1416.40 400.67L1417.40 400.02L1418.40 400.05L1419.40 400.21L1420.40 399.89L1421.40 400.63L1422.40 399.78L1423.40 399.64L1424.40 399.65L1425.40 399.72L1426.40 401.05L1427.40 399.75L1428.40 400.49L1429.40 401.20L1430.41 400.56L1431.41 399.86L1432.41 401.41L1433.41 401.41L1434.41 399.62L1435.41 400.06L1436.41 400.62L1437.41 401.25L1438.41 400.36L1439.41 401.08L1440.41 400.05L1441.41 401.07L1442.41 400.22L1443.41 400.23L1444.42 401.17L1445.42 401.35L1446.42 401.32L1447.42 400.75L1448.42 400.43L1449.42 401.06L1450.42 400.87L1451.42 401.33L1452.42 401.26L1453.42 399.78L1454.42 400.33L1455.42 400.97L1456.42 400.01L1457.42 399.91L1458.43 399.53L1459.43 400.79L1460.43 401.57L1461.43 401.63L1462.43 399.79L1463.43 401.01L1464.43 400.42L1465.43 400.89L1466.43 400.37L1467.43 401.55L1468.43 401.68L1469.43 399.61L1470.43 401.07L1471.43 399.76L1472.44 399.59L1473.44 400.13L1474.44 401.11L1475.44 401.69L1476.44 399.76L1477.44 400.23L1478.44 399.56L1479.44 400.69L1480.44 400.56L1481.44 400.32L1482.44 400.18L1483.44 401.26L1484.44 401.35L1485.44 400.12L1486.45 400.36L1487.45 400.86L1488.45 401.18L1489.45 401.66L1490.45 400.36L1491.45 401.03L1492.45 400.70L1493.45 401.26L1494.45 399.82L1495.45 399.89L1496.45 399.74L1497.45 401.55L1498.45 400.05L1499.45 400.57L1500.46 399.76L1501.46 400.21L1502.46 399.54L1503.46 400.75L1504.46 399.82L1505.46 400.88L1506.46 400.10L1507.46 400.00L1508.46 400.56L1509.46 400.30L1510.46 400.07L1511.46 399.61L1512.46 399.64L1513.46 401.46L1514.47 400.18L1515.47 399.67L1516.47 399.90L1517.47 400.56L1518.47 401.69L1519.47 399.94L1520.47 401.41L1521.47 400.57L1522.47 400.41L1523.47 401.28L1524.47 400.37L1525.47 399.63L1526.47 400.71L1527.47 400.95L1528.48 400.87L1529.48 400.11L1530.48 401.57L1531.48 401.40L1532.48 401.69L1533.48 400.48L1534.48 401.33L1535.48 401.09L1536.48 399.89L1537.48 399.56L1538.48 399.87L1539.48 399.76L1540.48 399.66L1541.48 400.29L1542.49 401.16L1543.49 400.18L1544.49 400.63L1545.49 399.52L1546.49 399.96L1547.49 401.61L1548.49 399.52L1549.49 400.66L1550.49 401.28L1551.49 401.24L1552.49 401.12L1553.49 400.38L1554.49 401.27L1555.49 401.32L1556.50 401.19L1557.50 401.67L1558.50 399.72L1559.50 401.59L1560.50 400.38L1561.50 401.05L1562.50 400.05L1562.50 433.48L1561.50 437.95L1560.50 442.49L1559.50 442.06L1558.50 437.42L1557.50 432.81L1556.50 432.70L1555.49 432.27L1554.49 431.90L1553.49 431.86L1552.49 432.04L1551.49 433.02L1550.49 433.68L1549.49 433.40L1548.49 433.65L1547.49 433.63L1546.49 433.26L1545.49 433.52L1544.49 433.18L1543.49 432.80L1542.49 433.24L1541.48 433.30L1540.48 433.44L1539.48 433.06L1538.48 433.04L1537.48 432.84L1536.48 433.45L1535.48 433.33L1534.48 433.77L1533.48 433.71L1532.48 433.44L1531.48 433.11L1530.48 433.15L1529.48 433.00L1528.48 433.25L1527.47 432.54L1526.47 432.66L1525.47 432.50L1524.47 431.81L1523.47 431.88L1522.47 430.87L1521.47 431.10L1520.47 431.54L1519.47 432.67L1518.47 433.11L1517.47 434.34L1516.47 432.31L1515.47 430.80L1514.47 429.88L1513.46 430.47L1512.46 431.70L1511.46 432.56L1510.46 432.58L1509.46 432.80L1508.46 433.16L1507.46 432.96L1506.46 432.72L1505.46 431.84L1504.46 432.59L1503.46 432.23L1502.46 432.68L1501.46 432.60L1500.46 432.63L1499.45 431.79L1498.45 431.14L1497.45 430.87L1496.45 431.23L1495.45 432.13L1494.45 432.84L1493.45 433.69L1492.45 433.82L1491.45 433.67L1490.45 433.50L1489.45 432.92L1488.45 433.19L1487.45 433.01L1486.45 433.38L1485.44 433.90L1484.44 433.37L1483.44 431.99L1482.44 431.38L1481.44 430.59L1480.44 430.49L1479.44 430.84L1478.44 430.97L1477.44 430.27L1476.44 430.50L1475.44 430.80L1474.44 431.28L1473.44 431.04L1472.44 431.28L1471.43 432.14L1470.43 432.51L1469.43 432.41L1468.43 432.68L1467.43 433.05L1466.43 432.93L1465.43 432.84L1464.43 433.16L1463.43 432.66L1462.43 432.72L1461.43 432.61L1460.43 432.94L1459.43 433.52L1458.43 433.91L1457.42 433.82L1456.42 433.72L1455.42 433.62L1454.42 433.47L1453.42 433.34L1452.42 433.56L1451.42 432.82L1450.42 432.25L1449.42 431.45L1448.42 431.34L1447.42 431.61L1446.42 431.30L1445.42 430.67L1444.42 431.22L1443.41 431.41L1442.41 432.54L1441.41 432.39L1440.41 432.32L1439.41 431.96L1438.41 431.74L1437.41 431.73L1436.41 432.05L1435.41 431.67L1434.41 431.02L1433.41 431.07L1432.41 430.97L1431.41 431.17L1430.41 430.99L1429.40 430.74L1428.40 431.18L1427.40 431.78L1426.40 432.07L1425.40 432.37L1424.40 432.19L1423.40 432.07L1422.40 431.76L1421.40 431.73L1420.40 431.17L1419.40 431.35L1418.40 430.95L1417.40 430.74L1416.40 430.76L1415.39 430.89L1414.39 431.20L1413.39 431.61L1412.39 431.88L1411.39 433.76L1410.39 435.90L1409.39 436.09L1408.39 434.51L1407.39 432.43L1406.39 431.88L1405.39 431.63L1404.39 432.01L1403.39 431.83L1402.39 432.52L1401.38 432.38L1400.38 433.25L1399.38 433.33L1398.38 433.02L1397.38 433.24L1396.38 433.54L1395.38 433.08L1394.38 432.43L1393.38 432.76L1392.38 432.34L1391.38 432.29L1390.38 431.67L1389.38 431.36L1388.38 431.19L1387.37 430.65L1386.37 430.72L1385.37 431.05L1384.37 431.54L1383.37 431.66L1382.37 432.56L1381.37 433.36L1380.37 432.64L1379.37 432.35L1378.37 431.67L1377.37 430.89L1376.37 431.15L1375.37 431.26L1374.37 431.34L1373.36 431.45L1372.36 431.72L1371.36 431.90L1370.36 432.69L1369.36 433.00L1368.36 432.77L1367.36 432.91L1366.36 433.10L1365.36 433.71L1364.36 432.91L1363.36 432.78L1362.36 432.29L1361.36 431.76L1360.36 431.88L1359.35 432.40L1358.35 432.33L1357.35 432.93L1356.35 432.80L1355.35 432.08L1354.35 431.49L1353.35 431.18L1352.35 432.17L1351.35 432.84L1350.35 433.16L1349.35 433.63L1348.35 433.26L1347.35 432.07L1346.35 431.13L1345.34 430.86L1344.34 430.54L1343.34 430.90L1342.34 430.80L1341.34 430.93L1340.34 430.83L1339.34 431.11L1338.34 432.03L1337.34 431.69L1336.34 432.08L1335.34 432.29L1334.34 432.65L1333.34 431.47L1332.34 430.36L1331.33 430.83L1330.33 432.82L1329.33 433.80L1328.33 433.63L1327.33 434.05L1326.33 433.67L1325.33 433.86L1324.33 433.01L1323.33 432.78L1322.33 431.98L1321.33 431.46L1320.33 431.57L1319.33 432.21L1318.32 433.49L1317.32 434.08L1316.32 433.58L1315.32 433.29L1314.32 433.33L1313.32 433.06L1312.32 432.77L1311.32 432.21L1310.32 431.82L1309.32 430.85L1308.32 430.90L1307.32 431.32L1306.32 431.03L1305.32 431.50L1304.31 431.85L1303.31 432.24L1302.31 432.58L1301.31 433.08L1300.31 433.83L1299.31 433.94L1298.31 434.07L1297.31 433.57L1296.31 432.84L1295.31 432.62L1294.31 431.84L1293.31 431.13L1292.31 431.13L1291.31 431.25L1290.30 430.95L1289.30 431.05L1288.30 431.87L1287.30 432.62L1286.30 433.32L1285.30 433.31L1284.30 433.15L1283.30 433.28L1282.30 433.19L1281.30 432.97L1280.30 432.51L1279.30 432.63L1278.30 432.26L1277.30 432.31L1276.29 432.48L1275.29 433.06L1274.29 433.66L1273.29 433.91L1272.29 433.20L1271.29 433.06L1270.29 432.23L1269.29 431.89L1268.29 432.02L1267.29 432.08L1266.29 431.60L1265.29 431.92L1264.29 432.30L1263.29 432.63L1262.28 432.43L1261.28 432.84L1260.28 432.69L1259.28 432.04L1258.28 431.49L1257.28 431.75L1256.28 431.66L1255.28 431.93L1254.28 432.62L1253.28 432.26L1252.28 432.51L1251.28 432.10L1250.28 430.91L1249.28 431.02L1248.27 431.13L1247.27 430.71L1246.27 430.98L1245.27 430.49L1244.27 430.60L1243.27 430.96L1242.27 430.98L1241.27 431.40L1240.27 431.77L1239.27 431.45L1238.27 431.70L1237.27 431.81L1236.27 431.91L1235.27 432.38L1234.26 432.96L1233.26 433.30L1232.26 432.76L1231.26 432.71L1230.26 431.54L1229.26 431.52L1228.26 431.39L1227.26 431.08L1226.26 431.29L1225.26 431.00L1224.26 432.31L1223.26 432.30L1222.26 433.57L1221.26 434.14L1220.25 432.92L1219.25 432.71L1218.25 431.77L1217.25 431.26L1216.25 431.11L1215.25 430.71L1214.25 429.63L1213.25 430.75L1212.25 432.43L1211.25 432.99L1210.25 433.06L1209.25 433.48L1208.25 432.92L1207.25 432.39L1206.24 432.25L1205.24 431.72L1204.24 431.95L1203.24 431.68L1202.24 431.04L1201.24 431.64L1200.24 432.07L1199.24 432.63L1198.24 433.19L1197.24 434.09L1196.24 433.07L1195.24 432.67L1194.24 432.17L1193.24 431.72L1192.23 431.91L1191.23 432.63L1190.23 433.30L1189.23 433.18L1188.23 433.64L1187.23 433.80L1186.23 433.73L1185.23 433.60L1184.23 433.34L1183.23 432.61L1182.23 431.76L1181.23 431.65L1180.23 431.34L1179.23 431.58L1178.22 431.53L1177.22 431.42L1176.22 432.42L1175.22 435.02L1174.22 437.22L1173.22 436.40L1172.22 433.69L1171.22 431.66L1170.22 431.52L1169.22 430.73L1168.22 431.64L1167.22 432.25L1166.22 432.35L1165.22 432.90L1164.21 432.28L1163.21 432.00L1162.21 431.72L1161.21 431.14L1160.21 431.75L1159.21 432.37L1158.21 432.21L1157.21 433.14L1156.21 432.38L1155.21 431.92L1154.21 431.60L1153.21 431.38L1152.21 431.38L1151.21 431.39L1150.20 432.16L1149.20 432.27L1148.20 431.82L1147.20 432.39L1146.20 432.36L1145.20 432.53L1144.20 432.14L1143.20 431.69L1142.20 431.69L1141.20 431.11L1140.20 432.06L1139.20 431.90L1138.20 432.49L1137.20 433.71L1136.19 433.10L1135.19 432.31L1134.19 431.14L1133.19 430.46L1132.19 430.47L1131.19 430.84L1130.19 430.84L1129.19 430.91L1128.19 430.62L1127.19 430.81L1126.19 430.91L1125.19 431.14L1124.19 431.42L1123.19 431.16L1122.18 431.25L1121.18 430.93L1120.18 431.19L1119.18 432.45L1118.18 432.98L1117.18 433.37L1116.18 433.18L1115.18 433.21L1114.18 433.93L1113.18 433.89L1112.18 433.10L1111.18 433.07L1110.18 432.20L1109.18 431.96L1108.17 431.15L1107.17 431.06L1106.17 431.22L1105.17 430.61L1104.17 430.69L1103.17 431.45L1102.17 431.71L1101.17 431.25L1100.17 432.27L1099.17 432.24L1098.17 432.70L1097.17 433.62L1096.17 433.42L1095.16 433.23L1094.16 432.69L1093.16 433.05L1092.16 432.35L1091.16 432.05L1090.16 431.29L1089.16 430.87L1088.16 431.16L1087.16 431.11L1086.16 431.37L1085.16 431.95L1084.16 432.39L1083.16 432.88L1082.16 433.45L1081.15 434.05L1080.15 433.33L1079.15 432.91L1078.15 432.66L1077.15 431.89L1076.15 432.77L1075.15 432.67L1074.15 433.48L1073.15 433.66L1072.15 433.00L1071.15 432.67L1070.15 431.67L1069.15 431.01L1068.15 430.68L1067.14 431.10L1066.14 430.39L1065.14 430.84L1064.14 431.36L1063.14 431.78L1062.14 432.64L1061.14 433.53L1060.14 433.97L1059.14 434.00L1058.14 433.80L1057.14 433.65L1056.14 433.41L1055.14 432.74L1054.14 432.74L1053.13 432.26L1052.13 432.24L1051.13 432.75L1050.13 432.79L1049.13 433.70L1048.13 433.14L1047.13 432.79L1046.13 432.58L1045.13 431.86L1044.13 432.28L1043.13 432.98L1042.13 432.55L1041.13 433.34L1040.13 432.63L1039.12 431.43L1038.12 428.94L1037.12 427.01L1036.12 428.37L1035.12 430.53L1034.12 431.62L1033.12 431.31L1032.12 431.81L1031.12 431.71L1030.12 431.29L1029.12 431.18L1028.12 431.45L1027.12 431.76L1026.12 431.58L1025.11 431.75L1024.11 432.17L1023.11 432.17L1022.11 432.72L1021.11 432.83L1020.11 432.84L1019.11 433.65L1018.11 433.40L1017.11 433.88L1016.11 433.82L1015.11 434.08L1014.11 434.12L1013.11 434.10L1012.11 433.81L1011.10 433.80L1010.10 434.32L1009.10 433.96L1008.10 433.18L1007.10 433.04L1006.10 431.80L1005.10 431.75L1004.10 431.29L1003.10 431.81L1002.10 432.20L1001.10 432.19L1000.10 432.28L999.10 432.18L998.10 432.58L997.09 433.17L996.09 433.07L995.09 432.45L994.09 432.68L993.09 432.33L992.09 432.81L991.09 432.94L990.09 433.00L989.09 432.58L988.09 432.87L987.09 432.70L986.09 432.73L985.09 430.35L984.09 427.83L983.08 428.07L982.08 430.61L981.08 433.69L980.08 433.41L979.08 433.61L978.08 434.21L977.08 434.89L976.08 434.33L975.08 432.92L974.08 432.11L973.08 431.87L972.08 431.96L971.08 431.74L970.08 430.67L969.07 430.93L968.07 431.03L967.07 430.90L966.07 431.39L965.07 431.46L964.07 431.34L963.07 431.44L962.07 431.11L961.07 431.00L960.07 430.81L959.07 431.12L958.07 430.81L957.07 430.32L956.07 430.88L955.06 431.54L954.06 431.74L953.06 432.55L952.06 432.31L951.06 431.72L950.06 431.14L949.06 430.66L948.06 430.64L947.06 430.91L946.06 430.58L945.06 430.78L944.06 431.27L943.06 432.16L942.06 431.92L941.05 432.68L940.05 432.46L939.05 432.40L938.05 433.05L937.05 432.70L936.05 433.19L935.05 433.58L934.05 433.33L933.05 434.27L932.05 433.61L931.05 433.66L930.05 433.98L929.05 434.42L928.05 433.46L927.04 432.20L926.04 431.49L925.04 430.75L924.04 431.17L923.04 431.59L922.04 432.23L921.04 432.96L920.04 432.84L919.04 433.03L918.04 433.67L917.04 433.58L916.04 433.05L915.04 432.39L914.04 431.47L913.03 430.54L912.03 430.87L911.03 431.28L910.03 431.31L909.03 431.90L908.03 431.74L907.03 431.46L906.03 430.97L905.03 430.60L904.03 431.60L903.03 431.96L902.03 433.04L901.03 433.31L900.03 433.34L899.02 433.39L898.02 432.65L897.02 432.53L896.02 432.80L895.02 432.40L894.02 432.06L893.02 432.15L892.02 432.38L891.02 431.85L890.02 431.46L889.02 431.32L888.02 434.85L887.02 439.02L886.02 439.59L885.01 435.89L884.01 432.79L883.01 432.14L882.01 432.67L881.01 432.28L880.01 432.36L879.01 432.44L878.01 432.13L877.01 432.36L876.01 432.89L875.01 433.40L874.01 433.53L873.01 433.49L872.01 433.59L871.00 433.24L870.00 432.75L869.00 432.62L868.00 432.48L867.00 432.61L866.00 432.46L865.00 432.06Z" fill="#052b51" fill-opacity="0.4"/><path d="M865.00 392.50L866.00 392.50L867.00 392.50L868.00 392.50L869.00 392.50L870.00 392.50L871.00 392.50L872.01 392.50L873.01 392.50L874.01 392.50L875.01 392.50L876.01 392.50L877.01 392.50L878.01 392.50L879.01 392.50L880.01 392.50L881.01 392.50L882.01 392.50L883.01 392.50L884.01 392.50L885.01 392.50L886.02 392.50L887.02 392.50L888.02 392.50L889.02 392.50L890.02 392.50L891.02 392.50L892.02 392.50L893.02 392.50L894.02 392.50L895.02 392.50L896.02 392.50L897.02 392.50L898.02 392.50L899.02 392.50L900.03 392.50L901.03 392.50L902.03 392.50L903.03 392.50L904.03 392.50L905.03 392.50L906.03 392.50L907.03 392.50L908.03 392.50L909.03 392.50L910.03 392.50L911.03 392.50L912.03 392.50L913.03 392.50L914.04 392.50L915.04 392.50L916.04 392.50L917.04 392.50L918.04 392.50L919.04 392.50L920.04 392.50L921.04 392.50L922.04 392.50L923.04 392.50L924.04 392.50L925.04 392.50L926.04 392.50L927.04 392.50L928.05 392.50L929.05 392.50L930.05 392.50L931.05 392.50L932.05 392.50L933.05 392.50L934.05 392.50L935.05 392.50L936.05 392.50L937.05 392.50L938.05 392.50L939.05 392.50L940.05 392.50L941.05 392.50L942.06 392.50L943.06 392.50L944.06 392.50L945.06 392.50L946.06 392.50L947.06 392.50L948.06 392.50L949.06 392.50L950.06 392.50L951.06 392.50L952.06 392.50L953.06 392.50L954.06 392.50L955.06 392.50L956.07 392.50L957.07 392.50L958.07 392.50L959.07 392.50L960.07 392.50L961.07 392.50L962.07 392.50L963.07 392.50L964.07 392.50L965.07 392.50L966.07 392.50L967.07 392.50L968.07 392.50L969.07 392.50L970.08 392.50L971.08 392.50L972.08 392.50L973.08 392.50L974.08 392.50L975.08 392.50L976.08 392.50L977.08 392.50L978.08 392.50L979.08 392.50L980.08 392.50L981.08 392.50L982.08 392.50L983.08 392.50L984.09 392.50L985.09 392.50L986.09 392.50L987.09 392.50L988.09 392.50L989.09 392.50L990.09 392.50L991.09 392.50L992.09 392.50L993.09 392.50L994.09 392.50L995.09 392.50L996.09 392.50L997.09 392.50L998.10 392.50L999.10 392.50L1000.10 392.50L1001.10 392.50L1002.10 392.50L1003.10 392.50L1004.10 392.50L1005.10 392.50L1006.10 392.50L1007.10 392.50L1008.10 392.50L1009.10 392.50L1010.10 392.50L1011.10 392.50L1012.11 392.50L1013.11 392.50L1014.11 392.50L1015.11 392.50L1016.11 392.50L1017.11 392.50L1018.11 392.50L1019.11 392.50L1020.11 392.50L1021.11 392.50L1022.11 392.50L1023.11 392.50L1024.11 392.50L1025.11 392.50L1026.12 392.50L1027.12 392.50L1028.12 392.50L1029.12 392.50L1030.12 392.50L1031.12 392.50L1032.12 392.50L1033.12 392.50L1034.12 392.50L1035.12 392.50L1036.12 392.50L1037.12 392.50L1038.12 392.50L1039.12 392.50L1040.13 392.50L1041.13 392.50L1042.13 392.50L1043.13 392.50L1044.13 392.50L1045.13 392.50L1046.13 392.50L1047.13 392.50L1048.13 392.50L1049.13 392.50L1050.13 392.50L1051.13 392.50L1052.13 392.50L1053.13 392.50L1054.14 392.50L1055.14 392.50L1056.14 392.50L1057.14 392.50L1058.14 392.50L1059.14 392.50L1060.14 392.50L1061.14 392.50L1062.14 392.50L1063.14 392.50L1064.14 392.50L1065.14 392.50L1066.14 392.50L1067.14 392.50L1068.15 392.50L1069.15 392.50L1070.15 392.50L1071.15 392.50L1072.15 392.50L1073.15 392.50L1074.15 392.50L1075.15 392.50L1076.15 392.50L1077.15 392.50L1078.15 392.50L1079.15 392.50L1080.15 392.50L1081.15 392.50L1082.16 392.50L1083.16 392.50L1084.16 392.50L1085.16 392.50L1086.16 392.50L1087.16 392.50L1088.16 392.50L1089.16 392.50L1090.16 392.50L1091.16 392.50L1092.16 392.50L1093.16 392.50L1094.16 392.50L1095.16 392.50L1096.17 392.50L1097.17 392.50L1098.17 392.50L1099.17 392.50L1100.17 392.50L1101.17 392.50L1102.17 392.50L1103.17 392.50L1104.17 392.50L1105.17 392.50L1106.17 392.50L1107.17 392.50L1108.17 392.50L1109.18 392.50L1110.18 392.50L1111.18 392.50L1112.18 392.50L1113.18 392.50L1114.18 392.50L1115.18 392.50L1116.18 392.50L1117.18 392.50L1118.18 392.50L1119.18 392.50L1120.18 392.50L1121.18 392.50L1122.18 392.50L1123.19 392.50L1124.19 392.50L1125.19 392.50L1126.19 392.50L1127.19 392.50L1128.19 392.50L1129.19 392.50L1130.19 392.50L1131.19 392.50L1132.19 392.50L1133.19 392.50L1134.19 392.50L1135.19 392.50L1136.19 392.50L1137.20 392.50L1138.20 392.50L1139.20 392.50L1140.20 392.50L1141.20 392.50L1142.20 392.50L1143.20 392.50L1144.20 392.50L1145.20 392.50L1146.20 392.50L1147.20 392.50L1148.20 392.50L1149.20 392.50L1150.20 392.50L1151.21 392.50L1152.21 392.50L1153.21 392.50L1154.21 392.50L1155.21 392.50L1156.21 392.50L1157.21 392.50L1158.21 392.50L1159.21 392.50L1160.21 392.50L1161.21 392.50L1162.21 392.50L1163.21 392.50L1164.21 392.50L1165.22 392.50L1166.22 392.50L1167.22 392.50L1168.22 392.50L1169.22 392.50L1170.22 392.50L1171.22 392.50L1172.22 392.50L1173.22 392.50L1174.22 392.50L1175.22 392.50L1176.22 392.50L1177.22 392.50L1178.22 392.50L1179.23 392.50L1180.23 392.50L1181.23 392.50L1182.23 392.50L1183.23 392.50L1184.23 392.50L1185.23 392.50L1186.23 392.50L1187.23 392.50L1188.23 392.50L1189.23 392.50L1190.23 392.50L1191.23 392.50L1192.23 392.50L1193.24 392.50L1194.24 392.50L1195.24 392.50L1196.24 392.50L1197.24 392.50L1198.24 392.50L1199.24 392.50L1200.24 392.50L1201.24 392.50L1202.24 392.50L1203.24 392.50L1204.24 392.50L1205.24 392.50L1206.24 392.50L1207.25 392.50L1208.25 392.50L1209.25 392.50L1210.25 392.50L1211.25 392.50L1212.25 392.50L1213.25 392.50L1214.25 392.50L1215.25 392.50L1216.25 392.50L1217.25 392.50L1218.25 392.50L1219.25 392.50L1220.25 392.50L1221.26 392.50L1222.26 392.50L1223.26 392.50L1224.26 392.50L1225.26 392.50L1226.26 392.50L1227.26 392.50L1228.26 392.50L1229.26 392.50L1230.26 392.50L1231.26 392.50L1232.26 392.50L1233.26 392.50L1234.26 392.50L1235.27 392.50L1236.27 392.50L1237.27 392.50L1238.27 392.50L1239.27 392.50L1240.27 392.50L1241.27 392.50L1242.27 392.50L1243.27 392.50L1244.27 392.50L1245.27 392.50L1246.27 392.50L1247.27 392.50L1248.27 392.50L1249.28 392.50L1250.28 392.50L1251.28 392.50L1252.28 392.50L1253.28 392.50L1254.28 392.50L1255.28 392.50L1256.28 392.50L1257.28 392.50L1258.28 392.50L1259.28 392.50L1260.28 392.50L1261.28 392.50L1262.28 392.50L1263.29 392.50L1264.29 392.50L1265.29 392.50L1266.29 392.50L1267.29 392.50L1268.29 392.50L1269.29 392.50L1270.29 392.50L1271.29 392.50L1272.29 392.50L1273.29 392.50L1274.29 392.50L1275.29 392.50L1276.29 392.50L1277.30 392.50L1278.30 392.50L1279.30 392.50L1280.30 392.50L1281.30 392.50L1282.30 392.50L1283.30 392.50L1284.30 392.50L1285.30 392.50L1286.30 392.50L1287.30 392.50L1288.30 392.50L1289.30 392.50L1290.30 392.50L1291.31 392.50L1292.31 392.50L1293.31 392.50L1294.31 392.50L1295.31 392.50L1296.31 392.50L1297.31 392.50L1298.31 392.50L1299.31 392.50L1300.31 392.50L1301.31 392.50L1302.31 392.50L1303.31 392.50L1304.31 392.50L1305.32 392.50L1306.32 392.50L1307.32 392.50L1308.32 392.50L1309.32 392.50L1310.32 392.50L1311.32 392.50L1312.32 392.50L1313.32 392.50L1314.32 392.50L1315.32 392.50L1316.32 392.50L1317.32 392.50L1318.32 392.50L1319.33 392.50L1320.33 392.50L1321.33 392.50L1322.33 392.50L1323.33 392.50L1324.33 392.50L1325.33 392.50L1326.33 392.50L1327.33 392.50L1328.33 392.50L1329.33 392.50L1330.33 392.50L1331.33 392.50L1332.34 392.50L1333.34 392.50L1334.34 392.50L1335.34 392.50L1336.34 392.50L1337.34 392.50L1338.34 392.50L1339.34 392.50L1340.34 392.50L1341.34 392.50L1342.34 392.50L1343.34 392.50L1344.34 392.50L1345.34 392.50L1346.35 392.50L1347.35 392.50L1348.35 392.50L1349.35 392.50L1350.35 392.50L1351.35 392.50L1352.35 392.50L1353.35 392.50L1354.35 392.50L1355.35 392.50L1356.35 392.50L1357.35 392.50L1358.35 392.50L1359.35 392.50L1360.36 392.50L1361.36 392.50L1362.36 392.50L1363.36 392.50L1364.36 392.50L1365.36 392.50L1366.36 392.50L1367.36 392.50L1368.36 392.50L1369.36 392.50L1370.36 392.50L1371.36 392.50L1372.36 392.50L1373.36 392.50L1374.37 392.50L1375.37 392.50L1376.37 392.50L1377.37 392.50L1378.37 392.50L1379.37 392.50L1380.37 392.50L1381.37 392.50L1382.37 392.50L1383.37 392.50L1384.37 392.50L1385.37 392.50L1386.37 392.50L1387.37 392.50L1388.38 392.50L1389.38 392.50L1390.38 392.50L1391.38 392.50L1392.38 392.50L1393.38 392.50L1394.38 392.50L1395.38 392.50L1396.38 392.50L1397.38 392.50L1398.38 392.50L1399.38 392.50L1400.38 392.50L1401.38 392.50L1402.39 392.50L1403.39 392.50L1404.39 392.50L1405.39 392.50L1406.39 392.50L1407.39 392.50L1408.39 392.50L1409.39 392.50L1410.39 392.50L1411.39 392.50L1412.39 392.50L1413.39 392.50L1414.39 392.50L1415.39 392.50L1416.40 392.50L1417.40 392.50L1418.40 392.50L1419.40 392.50L1420.40 392.50L1421.40 392.50L1422.40 392.50L1423.40 392.50L1424.40 392.50L1425.40 392.50L1426.40 392.50L1427.40 392.50L1428.40 392.50L1429.40 392.50L1430.41 392.50L1431.41 392.50L1432.41 392.50L1433.41 392.50L1434.41 392.50L1435.41 392.50L1436.41 392.50L1437.41 392.50L1438.41 392.50L1439.41 392.50L1440.41 392.50L1441.41 392.50L1442.41 392.50L1443.41 392.50L1444.42 392.50L1445.42 392.50L1446.42 392.50L1447.42 392.50L1448.42 392.50L1449.42 392.50L1450.42 392.50L1451.42 392.50L1452.42 392.50L1453.42 392.50L1454.42 392.50L1455.42 392.50L1456.42 392.50L1457.42 392.50L1458.43 392.50L1459.43 392.50L1460.43 392.50L1461.43 392.50L1462.43 392.50L1463.43 392.50L1464.43 392.50L1465.43 392.50L1466.43 392.50L1467.43 392.50L1468.43 392.50L1469.43 392.50L1470.43 392.50L1471.43 392.50L1472.44 392.50L1473.44 392.50L1474.44 392.50L1475.44 392.50L1476.44 392.50L1477.44 392.50L1478.44 392.50L1479.44 392.50L1480.44 392.50L1481.44 392.50L1482.44 392.50L1483.44 392.50L1484.44 392.50L1485.44 392.50L1486.45 392.50L1487.45 392.50L1488.45 392.50L1489.45 392.50L1490.45 392.50L1491.45 392.50L1492.45 392.50L1493.45 392.50L1494.45 392.50L1495.45 392.50L1496.45 392.50L1497.45 392.50L1498.45 392.50L1499.45 392.50L1500.46 392.50L1501.46 392.50L1502.46 392.50L1503.46 392.50L1504.46 392.50L1505.46 392.50L1506.46 392.50L1507.46 392.50L1508.46 392.50L1509.46 392.50L1510.46 392.50L1511.46 392.50L1512.46 392.50L1513.46 392.50L1514.47 392.50L1515.47 392.50L1516.47 392.50L1517.47 392.50L1518.47 392.50L1519.47 392.50L1520.47 392.50L1521.47 392.50L1522.47 392.50L1523.47 392.50L1524.47 392.50L1525.47 392.50L1526.47 392.50L1527.47 392.50L1528.48 392.50L1529.48 392.50L1530.48 392.50L1531.48 392.50L1532.48 392.50L1533.48 392.50L1534.48 392.50L1535.48 392.50L1536.48 392.50L1537.48 392.50L1538.48 392.50L1539.48 392.50L1540.48 392.50L1541.48 392.50L1542.49 392.50L1543.49 392.50L1544.49 392.50L1545.49 392.50L1546.49 392.50L1547.49 392.50L1548.49 392.50L1549.49 392.50L1550.49 392.50L1551.49 392.50L1552.49 392.50L1553.49 392.50L1554.49 392.50L1555.49 392.50L1556.50 392.50L1557.50 392.50L1558.50 392.50L1559.50 392.50L1560.50 392.50L1561.50 392.50L1562.50 392.50L1562.50 400.05L1561.50 401.05L1560.50 400.38L1559.50 401.59L1558.50 399.72L1557.50 401.67L1556.50 401.19L1555.49 401.32L1554.49 401.27L1553.49 400.38L1552.49 401.12L1551.49 401.24L1550.49 401.28L1549.49 400.66L1548.49 399.52L1547.49 401.61L1546.49 399.96L1545.49 399.52L1544.49 400.63L1543.49 400.18L1542.49 401.16L1541.48 400.29L1540.48 399.66L1539.48 399.76L1538.48 399.87L1537.48 399.56L1536.48 399.89L1535.48 401.09L1534.48 401.33L1533.48 400.48L1532.48 401.69L1531.48 401.40L1530.48 401.57L1529.48 400.11L1528.48 400.87L1527.47 400.95L1526.47 400.71L1525.47 399.63L1524.47 400.37L1523.47 401.28L1522.47 400.41L1521.47 400.57L1520.47 401.41L1519.47 399.94L1518.47 401.69L1517.47 400.56L1516.47 399.90L1515.47 399.67L1514.47 400.18L1513.46 401.46L1512.46 399.64L1511.46 399.61L1510.46 400.07L1509.46 400.30L1508.46 400.56L1507.46 400.00L1506.46 400.10L1505.46 400.88L1504.46 399.82L1503.46 400.75L1502.46 399.54L1501.46 400.21L1500.46 399.76L1499.45 400.57L1498.45 400.05L1497.45 401.55L1496.45 399.74L1495.45 399.89L1494.45 399.82L1493.45 401.26L1492.45 400.70L1491.45 401.03L1490.45 400.36L1489.45 401.66L1488.45 401.18L1487.45 400.86L1486.45 400.36L1485.44 400.12L1484.44 401.35L1483.44 401.26L1482.44 400.18L1481.44 400.32L1480.44 400.56L1479.44 400.69L1478.44 399.56L1477.44 400.23L1476.44 399.76L1475.44 401.69L1474.44 401.11L1473.44 400.13L1472.44 399.59L1471.43 399.76L1470.43 401.07L1469.43 399.61L1468.43 401.68L1467.43 401.55L1466.43 400.37L1465.43 400.89L1464.43 400.42L1463.43 401.01L1462.43 399.79L1461.43 401.63L1460.43 401.57L1459.43 400.79L1458.43 399.53L1457.42 399.91L1456.42 400.01L1455.42 400.97L1454.42 400.33L1453.42 399.78L1452.42 401.26L1451.42 401.33L1450.42 400.87L1449.42 401.06L1448.42 400.43L1447.42 400.75L1446.42 401.32L1445.42 401.35L1444.42 401.17L1443.41 400.23L1442.41 400.22L1441.41 401.07L1440.41 400.05L1439.41 401.08L1438.41 400.36L1437.41 401.25L1436.41 400.62L1435.41 400.06L1434.41 399.62L1433.41 401.41L1432.41 401.41L1431.41 399.86L1430.41 400.56L1429.40 401.20L1428.40 400.49L1427.40 399.75L1426.40 401.05L1425.40 399.72L1424.40 399.65L1423.40 399.64L1422.40 399.78L1421.40 400.63L1420.40 399.89L1419.40 400.21L1418.40 400.05L1417.40 400.02L1416.40 400.67L1415.39 401.15L1414.39 400.13L1413.39 400.31L1412.39 400.74L1411.39 400.58L1410.39 400.87L1409.39 399.85L1408.39 401.31L1407.39 401.62L1406.39 401.01L1405.39 401.03L1404.39 401.08L1403.39 400.19L1402.39 401.45L1401.38 400.26L1400.38 400.23L1399.38 401.63L1398.38 401.33L1397.38 400.73L1396.38 400.87L1395.38 400.71L1394.38 400.93L1393.38 400.59L1392.38 400.03L1391.38 400.37L1390.38 400.70L1389.38 399.50L1388.38 400.02L1387.37 401.00L1386.37 400.00L1385.37 399.92L1384.37 399.83L1383.37 401.65L1382.37 400.29L1381.37 400.18L1380.37 400.62L1379.37 399.80L1378.37 399.58L1377.37 401.50L1376.37 400.34L1375.37 401.44L1374.37 401.33L1373.36 400.11L1372.36 400.41L1371.36 400.40L1370.36 400.87L1369.36 400.88L1368.36 401.20L1367.36 401.57L1366.36 400.77L1365.36 400.30L1364.36 401.60L1363.36 400.85L1362.36 400.53L1361.36 399.91L1360.36 400.97L1359.35 400.08L1358.35 400.74L1357.35 401.46L1356.35 400.26L1355.35 399.55L1354.35 400.06L1353.35 400.22L1352.35 400.53L1351.35 400.79L1350.35 400.59L1349.35 399.62L1348.35 400.39L1347.35 399.64L1346.35 400.30L1345.34 400.36L1344.34 399.55L1343.34 401.04L1342.34 400.72L1341.34 401.04L1340.34 400.78L1339.34 399.83L1338.34 400.43L1337.34 400.25L1336.34 399.70L1335.34 400.03L1334.34 400.96L1333.34 399.87L1332.34 400.55L1331.33 400.39L1330.33 399.85L1329.33 400.12L1328.33 400.59L1327.33 400.22L1326.33 400.34L1325.33 399.63L1324.33 400.36L1323.33 400.44L1322.33 399.70L1321.33 400.89L1320.33 400.02L1319.33 401.41L1318.32 401.60L1317.32 400.97L1316.32 401.02L1315.32 399.98L1314.32 401.52L1313.32 400.98L1312.32 400.16L1311.32 401.65L1310.32 401.28L1309.32 400.75L1308.32 400.89L1307.32 399.55L1306.32 399.59L1305.32 399.97L1304.31 400.26L1303.31 400.14L1302.31 400.00L1301.31 401.41L1300.31 400.35L1299.31 400.39L1298.31 401.07L1297.31 400.12L1296.31 399.95L1295.31 399.82L1294.31 400.97L1293.31 401.10L1292.31 400.07L1291.31 401.05L1290.30 399.80L1289.30 400.70L1288.30 400.43L1287.30 400.19L1286.30 399.57L1285.30 400.81L1284.30 399.83L1283.30 399.59L1282.30 400.02L1281.30 400.37L1280.30 399.62L1279.30 400.64L1278.30 401.20L1277.30 400.22L1276.29 401.44L1275.29 399.68L1274.29 400.35L1273.29 400.21L1272.29 399.54L1271.29 401.50L1270.29 401.09L1269.29 401.18L1268.29 400.29L1267.29 401.56L1266.29 399.84L1265.29 400.29L1264.29 400.09L1263.29 401.07L1262.28 401.53L1261.28 400.36L1260.28 400.08L1259.28 399.90L1258.28 399.54L1257.28 400.10L1256.28 400.30L1255.28 401.02L1254.28 399.66L1253.28 400.34L1252.28 399.95L1251.28 401.40L1250.28 400.99L1249.28 401.69L1248.27 400.48L1247.27 400.18L1246.27 400.53L1245.27 399.97L1244.27 399.95L1243.27 399.86L1242.27 400.71L1241.27 399.90L1240.27 400.26L1239.27 399.97L1238.27 401.22L1237.27 400.34L1236.27 401.35L1235.27 400.36L1234.26 400.52L1233.26 401.45L1232.26 400.80L1231.26 401.40L1230.26 401.03L1229.26 400.26L1228.26 399.63L1227.26 400.93L1226.26 400.39L1225.26 399.59L1224.26 400.84L1223.26 401.66L1222.26 400.24L1221.26 400.30L1220.25 401.55L1219.25 400.52L1218.25 400.03L1217.25 400.71L1216.25 400.06L1215.25 400.01L1214.25 401.11L1213.25 401.18L1212.25 401.69L1211.25 399.58L1210.25 399.67L1209.25 400.43L1208.25 400.16L1207.25 400.36L1206.24 399.81L1205.24 401.46L1204.24 400.03L1203.24 399.59L1202.24 401.14L1201.24 400.50L1200.24 399.82L1199.24 401.67L1198.24 401.17L1197.24 400.58L1196.24 399.59L1195.24 401.64L1194.24 399.98L1193.24 400.30L1192.23 400.40L1191.23 399.63L1190.23 401.23L1189.23 401.33L1188.23 401.02L1187.23 399.85L1186.23 400.06L1185.23 399.88L1184.23 401.31L1183.23 399.69L1182.23 400.80L1181.23 400.08L1180.23 400.66L1179.23 400.87L1178.22 400.19L1177.22 399.59L1176.22 400.18L1175.22 399.82L1174.22 400.02L1173.22 401.24L1172.22 400.70L1171.22 400.75L1170.22 401.50L1169.22 399.66L1168.22 401.26L1167.22 400.08L1166.22 400.47L1165.22 400.46L1164.21 400.59L1163.21 399.54L1162.21 399.83L1161.21 399.90L1160.21 401.42L1159.21 400.76L1158.21 401.07L1157.21 400.81L1156.21 399.58L1155.21 400.60L1154.21 400.78L1153.21 399.99L1152.21 400.58L1151.21 400.02L1150.20 401.24L1149.20 401.23L1148.20 401.20L1147.20 400.47L1146.20 400.02L1145.20 400.84L1144.20 399.86L1143.20 401.22L1142.20 399.88L1141.20 401.59L1140.20 400.65L1139.20 401.01L1138.20 401.36L1137.20 400.61L1136.19 400.64L1135.19 401.22L1134.19 400.95L1133.19 400.29L1132.19 400.92L1131.19 400.72L1130.19 399.90L1129.19 400.60L1128.19 401.54L1127.19 400.35L1126.19 401.15L1125.19 400.52L1124.19 399.57L1123.19 401.67L1122.18 401.47L1121.18 399.91L1120.18 400.71L1119.18 400.11L1118.18 400.04L1117.18 401.16L1116.18 400.13L1115.18 399.69L1114.18 401.27L1113.18 400.05L1112.18 400.13L1111.18 400.82L1110.18 399.60L1109.18 400.67L1108.17 400.66L1107.17 400.47L1106.17 401.66L1105.17 399.70L1104.17 400.91L1103.17 400.11L1102.17 400.97L1101.17 401.54L1100.17 400.16L1099.17 400.00L1098.17 400.80L1097.17 401.45L1096.17 400.96L1095.16 400.32L1094.16 401.24L1093.16 400.96L1092.16 400.02L1091.16 399.90L1090.16 399.93L1089.16 401.06L1088.16 400.18L1087.16 399.99L1086.16 399.67L1085.16 400.48L1084.16 401.56L1083.16 401.03L1082.16 399.80L1081.15 401.07L1080.15 401.41L1079.15 401.48L1078.15 400.19L1077.15 401.10L1076.15 399.73L1075.15 399.61L1074.15 401.44L1073.15 399.92L1072.15 400.89L1071.15 399.94L1070.15 401.69L1069.15 401.44L1068.15 399.88L1067.14 400.54L1066.14 400.28L1065.14 401.34L1064.14 399.93L1063.14 401.47L1062.14 401.53L1061.14 400.15L1060.14 399.95L1059.14 400.54L1058.14 401.65L1057.14 401.55L1056.14 400.60L1055.14 400.18L1054.14 401.48L1053.13 399.57L1052.13 399.60L1051.13 400.79L1050.13 400.28L1049.13 400.37L1048.13 401.29L1047.13 401.47L1046.13 399.64L1045.13 400.21L1044.13 400.16L1043.13 400.04L1042.13 399.50L1041.13 401.59L1040.13 400.68L1039.12 399.77L1038.12 401.24L1037.12 399.72L1036.12 401.49L1035.12 400.75L1034.12 401.14L1033.12 399.99L1032.12 401.27L1031.12 400.43L1030.12 401.41L1029.12 400.96L1028.12 401.63L1027.12 401.50L1026.12 399.65L1025.11 400.02L1024.11 400.37L1023.11 400.17L1022.11 400.03L1021.11 400.66L1020.11 401.03L1019.11 399.61L1018.11 400.37L1017.11 400.61L1016.11 400.48L1015.11 399.77L1014.11 399.65L1013.11 400.81L1012.11 400.17L1011.10 401.15L1010.10 400.81L1009.10 401.11L1008.10 401.48L1007.10 401.10L1006.10 399.62L1005.10 400.21L1004.10 401.49L1003.10 400.45L1002.10 400.66L1001.10 400.66L1000.10 401.49L999.10 400.75L998.10 400.45L997.09 400.40L996.09 401.38L995.09 401.34L994.09 401.69L993.09 400.57L992.09 401.15L991.09 401.17L990.09 401.02L989.09 400.87L988.09 400.41L987.09 400.53L986.09 400.82L985.09 401.61L984.09 399.82L983.08 400.98L982.08 399.58L981.08 400.91L980.08 400.23L979.08 400.75L978.08 400.08L977.08 400.64L976.08 399.88L975.08 400.75L974.08 400.35L973.08 399.81L972.08 400.53L971.08 399.94L970.08 399.54L969.07 401.27L968.07 400.80L967.07 400.34L966.07 401.12L965.07 400.98L964.07 400.18L963.07 400.95L962.07 401.57L961.07 401.67L960.07 399.90L959.07 399.57L958.07 399.67L957.07 400.71L956.07 399.91L955.06 401.33L954.06 400.76L953.06 400.03L952.06 401.47L951.06 400.13L950.06 401.31L949.06 399.77L948.06 400.82L947.06 401.30L946.06 401.68L945.06 401.50L944.06 400.08L943.06 400.73L942.06 400.73L941.05 400.70L940.05 401.49L939.05 399.80L938.05 401.64L937.05 399.77L936.05 400.52L935.05 400.29L934.05 401.54L933.05 400.22L932.05 401.03L931.05 400.77L930.05 400.04L929.05 399.68L928.05 399.94L927.04 400.88L926.04 401.58L925.04 399.93L924.04 401.34L923.04 401.07L922.04 400.64L921.04 401.67L920.04 401.07L919.04 399.81L918.04 400.60L917.04 400.28L916.04 400.71L915.04 401.49L914.04 401.19L913.03 399.85L912.03 400.85L911.03 401.32L910.03 401.23L909.03 400.62L908.03 400.33L907.03 399.73L906.03 400.93L905.03 400.25L904.03 400.23L903.03 399.54L902.03 400.84L901.03 400.95L900.03 401.24L899.02 401.66L898.02 401.04L897.02 400.38L896.02 399.53L895.02 400.41L894.02 400.23L893.02 400.35L892.02 401.31L891.02 401.19L890.02 400.92L889.02 400.63L888.02 400.44L887.02 401.53L886.02 399.66L885.01 400.40L884.01 399.77L883.01 399.85L882.01 400.00L881.01 399.70L880.01 400.80L879.01 401.34L878.01 400.39L877.01 399.90L876.01 401.06L875.01 400.99L874.01 399.71L873.01 399.81L872.01 399.70L871.00 401.32L870.00 400.23L869.00 401.09L868.00 400.74L867.00 401.58L866.00 400.22L865.00 401.11Z" fill="#7eb26d" fill-opacity="0.4"/><path d="M865.00 355.78L866.00 355.48L867.00 354.91L868.00 354.54L869.00 354.61L870.00 355.40L871.00 355.26L872.01 355.15L873.01 354.80L874.01 354.75L875.01 355.05L876.01 354.75L877.01 354.90L878.01 355.18L879.01 355.15L880.01 355.21L881.01 355.09L882.01 355.60L883.01 355.72L884.01 355.81L885.01 353.10L886.02 351.00L887.02 350.54L888.02 353.18L889.02 355.32L890.02 355.46L891.02 355.10L892.02 355.46L893.02 355.40L894.02 355.23L895.02 354.80L896.02 355.17L897.02 354.83L898.02 354.91L899.02 355.05L900.03 355.69L901.03 355.81L902.03 355.43L903.03 355.34L904.03 354.86L905.03 355.01L906.03 354.55L907.03 354.52L908.03 354.45L909.03 354.69L910.03 354.97L911.03 355.28L912.03 355.47L913.03 355.95L914.04 355.18L915.04 355.31L916.04 354.57L917.04 355.38L918.04 355.43L919.04 355.68L920.04 355.69L921.04 355.72L922.04 355.66L923.04 355.41L924.04 355.25L925.04 355.42L926.04 355.51L927.04 355.16L928.05 354.85L929.05 354.47L930.05 354.65L931.05 354.31L932.05 354.38L933.05 354.52L934.05 354.94L935.05 354.87L936.05 355.11L937.05 354.76L938.05 355.03L939.05 354.87L940.05 355.03L941.05 354.69L942.06 354.92L943.06 354.31L944.06 354.71L945.06 355.10L946.06 355.54L947.06 355.51L948.06 355.23L949.06 355.13L950.06 355.32L951.06 354.96L952.06 354.86L953.06 355.25L954.06 355.09L955.06 355.29L956.07 355.57L957.07 355.85L958.07 356.03L959.07 355.62L960.07 355.19L961.07 354.50L962.07 355.38L963.07 355.32L964.07 356.00L965.07 355.68L966.07 355.25L967.07 354.81L968.07 355.00L969.07 355.42L970.08 355.65L971.08 355.36L972.08 354.82L973.08 354.74L974.08 355.11L975.08 354.66L976.08 354.23L977.08 353.22L978.08 353.51L979.08 354.73L980.08 355.77L981.08 355.73L982.08 356.19L983.08 355.61L984.09 355.12L985.09 354.86L986.09 354.96L987.09 354.91L988.09 355.13L989.09 355.32L990.09 355.64L991.09 355.40L992.09 355.11L993.09 354.89L994.09 354.58L995.09 354.95L996.09 354.79L997.09 355.11L998.10 355.08L999.10 355.25L1000.10 355.73L1001.10 355.53L1002.10 356.23L1003.10 356.30L1004.10 355.63L1005.10 355.25L1006.10 355.17L1007.10 355.07L1008.10 354.90L1009.10 354.46L1010.10 354.99L1011.10 354.67L1012.11 355.12L1013.11 355.45L1014.11 356.06L1015.11 356.26L1016.11 355.39L1017.11 355.43L1018.11 354.82L1019.11 355.01L1020.11 354.95L1021.11 355.68L1022.11 355.34L1023.11 355.34L1024.11 355.37L1025.11 355.49L1026.12 355.14L1027.12 355.73L1028.12 355.26L1029.12 355.19L1030.12 354.71L1031.12 354.99L1032.12 355.23L1033.12 355.28L1034.12 355.56L1035.12 355.98L1036.12 355.74L1037.12 355.75L1038.12 356.16L1039.12 356.04L1040.13 355.83L1041.13 355.44L1042.13 355.30L1043.13 355.34L1044.13 355.66L1045.13 355.34L1046.13 355.60L1047.13 355.21L1048.13 355.37L1049.13 355.17L1050.13 355.08L1051.13 354.38L1052.13 355.26L1053.13 355.46L1054.14 355.63L1055.14 355.78L1056.14 355.66L1057.14 355.75L1058.14 355.76L1059.14 355.35L1060.14 355.33L1061.14 355.28L1062.14 355.64L1063.14 355.36L1064.14 355.60L1065.14 355.10L1066.14 355.21L1067.14 354.96L1068.15 355.02L1069.15 354.89L1070.15 354.91L1071.15 354.96L1072.15 354.83L1073.15 354.97L1074.15 355.30L1075.15 355.69L1076.15 355.38L1077.15 355.50L1078.15 355.42L1079.15 355.68L1080.15 355.26L1081.15 355.45L1082.16 354.88L1083.16 354.60L1084.16 354.60L1085.16 354.86L1086.16 355.03L1087.16 355.27L1088.16 355.62L1089.16 355.24L1090.16 355.33L1091.16 355.25L1092.16 355.45L1093.16 355.50L1094.16 355.75L1095.16 355.72L1096.17 355.44L1097.17 355.66L1098.17 355.18L1099.17 354.89L1100.17 353.51L1101.17 353.96L1102.17 354.62L1103.17 354.58L1104.17 355.17L1105.17 355.28L1106.17 355.59L1107.17 355.77L1108.17 355.98L1109.18 356.30L1110.18 356.04L1111.18 355.91L1112.18 355.23L1113.18 355.39L1114.18 354.79L1115.18 355.04L1116.18 355.49L1117.18 355.79L1118.18 355.65L1119.18 356.19L1120.18 356.23L1121.18 356.07L1122.18 355.73L1123.19 355.24L1124.19 355.32L1125.19 355.95L1126.19 356.09L1127.19 355.39L1128.19 355.29L1129.19 354.76L1130.19 355.00L1131.19 355.51L1132.19 355.89L1133.19 355.91L1134.19 355.44L1135.19 355.16L1136.19 354.98L1137.20 354.75L1138.20 354.81L1139.20 355.05L1140.20 355.42L1141.20 355.78L1142.20 355.80L1143.20 355.91L1144.20 355.36L1145.20 355.96L1146.20 356.13L1147.20 356.15L1148.20 356.05L1149.20 356.10L1150.20 355.91L1151.21 355.97L1152.21 356.11L1153.21 356.00L1154.21 355.52L1155.21 355.23L1156.21 355.58L1157.21 354.11L1158.21 352.65L1159.21 351.45L1160.21 353.03L1161.21 354.42L1162.21 354.65L1163.21 355.27L1164.21 355.49L1165.22 356.01L1166.22 355.78L1167.22 355.62L1168.22 355.95L1169.22 355.17L1170.22 355.39L1171.22 354.95L1172.22 354.93L1173.22 355.76L1174.22 355.61L1175.22 355.68L1176.22 355.20L1177.22 355.51L1178.22 355.15L1179.23 355.54L1180.23 355.10L1181.23 355.66L1182.23 355.50L1183.23 355.68L1184.23 355.60L1185.23 355.44L1186.23 354.86L1187.23 355.02L1188.23 355.02L1189.23 354.92L1190.23 354.87L1191.23 355.36L1192.23 355.37L1193.24 355.23L1194.24 354.79L1195.24 354.53L1196.24 354.64L1197.24 355.23L1198.24 355.35L1199.24 355.53L1200.24 355.42L1201.24 355.81L1202.24 355.67L1203.24 355.74L1204.24 355.32L1205.24 354.91L1206.24 354.86L1207.25 354.74L1208.25 355.29L1209.25 355.77L1210.25 356.13L1211.25 356.14L1212.25 356.16L1213.25 356.15L1214.25 356.15L1215.25 355.55L1216.25 355.78L1217.25 355.71L1218.25 355.63L1219.25 355.46L1220.25 355.67L1221.26 356.08L1222.26 355.78L1223.26 355.98L1224.26 356.18L1225.26 355.55L1226.26 355.21L1227.26 355.28L1228.26 354.95L1229.26 354.52L1230.26 354.65L1231.26 355.26L1232.26 355.01L1233.26 354.75L1234.26 354.63L1235.27 354.70L1236.27 354.69L1237.27 354.17L1238.27 354.39L1239.27 355.01L1240.27 355.31L1241.27 355.53L1242.27 355.59L1243.27 355.86L1244.27 355.85L1245.27 355.63L1246.27 356.06L1247.27 355.33L1248.27 355.09L1249.28 354.63L1250.28 354.55L1251.28 354.79L1252.28 354.70L1253.28 354.69L1254.28 355.20L1255.28 354.90L1256.28 355.17L1257.28 355.50L1258.28 355.92L1259.28 355.96L1260.28 355.55L1261.28 355.35L1262.28 355.77L1263.29 355.71L1264.29 356.04L1265.29 355.38L1266.29 355.25L1267.29 354.34L1268.29 354.92L1269.29 355.51L1270.29 356.08L1271.29 355.85L1272.29 355.35L1273.29 354.95L1274.29 355.05L1275.29 355.03L1276.29 355.69L1277.30 355.53L1278.30 355.66L1279.30 355.93L1280.30 356.18L1281.30 355.72L1282.30 355.62L1283.30 355.64L1284.30 355.37L1285.30 354.69L1286.30 354.82L1287.30 355.49L1288.30 355.77L1289.30 355.36L1290.30 355.49L1291.31 355.10L1292.31 354.80L1293.31 354.73L1294.31 354.57L1295.31 354.61L1296.31 355.01L1297.31 354.72L1298.31 355.00L1299.31 354.91L1300.31 354.71L1301.31 355.40L1302.31 355.13L1303.31 355.36L1304.31 355.55L1305.32 355.39L1306.32 355.16L1307.32 355.00L1308.32 355.55L1309.32 355.27L1310.32 355.67L1311.32 355.86L1312.32 355.47L1313.32 355.12L1314.32 355.14L1315.32 354.95L1316.32 354.83L1317.32 354.93L1318.32 354.60L1319.33 354.89L1320.33 355.08L1321.33 355.51L1322.33 355.78L1323.33 355.12L1324.33 355.05L1325.33 354.95L1326.33 354.56L1327.33 354.52L1328.33 354.43L1329.33 354.39L1330.33 354.62L1331.33 353.13L1332.34 351.24L1333.34 351.06L1334.34 353.12L1335.34 355.57L1336.34 355.25L1337.34 355.18L1338.34 354.94L1339.34 354.93L1340.34 355.10L1341.34 355.10L1342.34 354.76L1343.34 355.03L1344.34 355.61L1345.34 356.23L1346.35 355.89L1347.35 356.00L1348.35 355.93L1349.35 355.65L1350.35 355.76L1351.35 355.93L1352.35 355.48L1353.35 355.09L1354.35 355.32L1355.35 355.31L1356.35 354.70L1357.35 355.12L1358.35 354.96L1359.35 354.81L1360.36 354.93L1361.36 354.78L1362.36 354.96L1363.36 354.49L1364.36 354.67L1365.36 355.08L1366.36 355.72L1367.36 355.41L1368.36 355.38L1369.36 355.14L1370.36 355.21L1371.36 355.35L1372.36 355.76L1373.36 355.35L1374.37 355.24L1375.37 355.21L1376.37 355.09L1377.37 355.18L1378.37 355.30L1379.37 355.14L1380.37 355.20L1381.37 355.54L1382.37 355.62L1383.37 355.78L1384.37 356.12L1385.37 355.71L1386.37 355.28L1387.37 355.27L1388.38 355.08L1389.38 355.71L1390.38 355.88L1391.38 355.61L1392.38 354.90L1393.38 354.83L1394.38 355.32L1395.38 355.11L1396.38 355.25L1397.38 355.40L1398.38 354.93L1399.38 354.96L1400.38 355.06L1401.38 355.89L1402.39 355.84L1403.39 355.38L1404.39 355.38L1405.39 354.82L1406.39 355.29L1407.39 355.60L1408.39 356.19L1409.39 355.84L1410.39 355.65L1411.39 355.32L1412.39 355.48L1413.39 355.21L1414.39 355.26L1415.39 355.59L1416.40 355.77L1417.40 355.83L1418.40 355.75L1419.40 355.41L1420.40 355.18L1421.40 355.59L1422.40 355.39L1423.40 355.70L1424.40 355.40L1425.40 355.75L1426.40 355.32L1427.40 355.59L1428.40 355.48L1429.40 355.06L1430.41 355.22L1431.41 354.75L1432.41 354.47L1433.41 354.76L1434.41 355.21L1435.41 355.15L1436.41 355.06L1437.41 354.86L1438.41 355.11L1439.41 355.00L1440.41 355.00L1441.41 355.01L1442.41 355.33L1443.41 356.01L1444.42 356.30L1445.42 356.01L1446.42 355.57L1447.42 355.04L1448.42 355.35L1449.42 355.54L1450.42 355.84L1451.42 355.82L1452.42 355.43L1453.42 355.80L1454.42 355.24L1455.42 354.94L1456.42 355.09L1457.42 354.65L1458.43 355.05L1459.43 355.05L1460.43 355.15L1461.43 354.87L1462.43 354.88L1463.43 355.36L1464.43 355.64L1465.43 355.75L1466.43 355.73L1467.43 355.00L1468.43 355.14L1469.43 355.18L1470.43 354.94L1471.43 354.97L1472.44 355.23L1473.44 355.22L1474.44 355.31L1475.44 355.38L1476.44 355.36L1477.44 356.01L1478.44 355.63L1479.44 356.13L1480.44 356.09L1481.44 355.95L1482.44 355.84L1483.44 355.50L1484.44 355.70L1485.44 355.49L1486.45 355.38L1487.45 355.05L1488.45 354.76L1489.45 354.29L1490.45 354.85L1491.45 355.71L1492.45 355.85L1493.45 355.62L1494.45 355.21L1495.45 354.68L1496.45 354.73L1497.45 354.78L1498.45 354.92L1499.45 354.87L1500.46 355.16L1501.46 355.19L1502.46 355.55L1503.46 353.86L1504.46 352.82L1505.46 352.65L1506.46 353.85L1507.46 355.81L1508.46 355.48L1509.46 355.49L1510.46 355.18L1511.46 355.25L1512.46 355.55L1513.46 356.03L1514.47 356.04L1515.47 355.80L1516.47 356.33L1517.47 355.57L1518.47 354.98L1519.47 354.59L1520.47 354.66L1521.47 354.99L1522.47 355.59L1523.47 355.29L1524.47 355.24L1525.47 354.99L1526.47 354.91L1527.47 355.03L1528.48 355.07L1529.48 355.38L1530.48 355.26L1531.48 355.19L1532.48 355.09L1533.48 354.90L1534.48 354.95L1535.48 355.46L1536.48 355.17L1537.48 355.57L1538.48 355.68L1539.48 355.69L1540.48 355.52L1541.48 355.79L1542.49 356.19L1543.49 356.39L1544.49 356.00L1545.49 356.18L1546.49 356.46L1547.49 356.18L1548.49 355.99L1549.49 356.35L1550.49 355.56L1551.49 355.26L1552.49 355.14L1553.49 355.23L1554.49 355.76L1555.49 356.03L1556.50 353.68L1557.50 351.84L1558.50 351.65L1559.50 353.72L1560.50 355.60L1561.50 355.62L1562.50 355.60L1562.50 392.50L1561.50 392.50L1560.50 392.50L1559.50 392.50L1558.50 392.50L1557.50 392.50L1556.50 392.50L1555.49 392.50L1554.49 392.50L1553.49 392.50L1552.49 392.50L1551.49 392.50L1550.49 392.50L1549.49 392.50L1548.49 392.50L1547.49 392.50L1546.49 392.50L1545.49 392.50L1544.49 392.50L1543.49 392.50L1542.49 392.50L1541.48 392.50L1540.48 392.50L1539.48 392.50L1538.48 392.50L1537.48 392.50L1536.48 392.50L1535.48 392.50L1534.48 392.50L1533.48 392.50L1532.48 392.50L1531.48 392.50L1530.48 392.50L1529.48 392.50L1528.48 392.50L1527.47 392.50L1526.47 392.50L1525.47 392.50L1524.47 392.50L1523.47 392.50L1522.47 392.50L1521.47 392.50L1520.47 392.50L1519.47 392.50L1518.47 392.50L1517.47 392.50L1516.47 392.50L1515.47 392.50L1514.47 392.50L1513.46 392.50L1512.46 392.50L1511.46 392.50L1510.46 392.50L1509.46 392.50L1508.46 392.50L1507.46 392.50L1506.46 392.50L1505.46 392.50L1504.46 392.50L1503.46 392.50L1502.46 392.50L1501.46 392.50L1500.46 392.50L1499.45 392.50L1498.45 392.50L1497.45 392.50L1496.45 392.50L1495.45 392.50L1494.45 392.50L1493.45 392.50L1492.45 392.50L1491.45 392.50L1490.45 392.50L1489.45 392.50L1488.45 392.50L1487.45 392.50L1486.45 392.50L1485.44 392.50L1484.44 392.50L1483.44 392.50L1482.44 392.50L1481.44 392.50L1480.44 392.50L1479.44 392.50L1478.44 392.50L1477.44 392.50L1476.44 392.50L1475.44 392.50L1474.44 392.50L1473.44 392.50L1472.44 392.50L1471.43 392.50L1470.43 392.50L1469.43 392.50L1468.43 392.50L1467.43 392.50L1466.43 392.50L1465.43 392.50L1464.43 392.50L1463.43 392.50L1462.43 392.50L1461.43 392.50L1460.43 392.50L1459.43 392.50L1458.43 392.50L1457.42 392.50L1456.42 392.50L1455.42 392.50L1454.42 392.50L1453.42 392.50L1452.42 392.50L1451.42 392.50L1450.42 392.50L1449.42 392.50L1448.42 392.50L1447.42 392.50L1446.42 392.50L1445.42 392.50L1444.42 392.50L1443.41 392.50L1442.41 392.50L1441.41 392.50L1440.41 392.50L1439.41 392.50L1438.41 392.50L1437.41 392.50L1436.41 392.50L1435.41 392.50L1434.41 392.50L1433.41 392.50L1432.41 392.50L1431.41 392.50L1430.41 392.50L1429.40 392.50L1428.40 392.50L1427.40 392.50L1426.40 392.50L1425.40 392.50L1424.40 392.50L1423.40 392.50L1422.40 392.50L1421.40 392.50L1420.40 392.50L1419.40 392.50L1418.40 392.50L1417.40 392.50L1416.40 392.50L1415.39 392.50L1414.39 392.50L1413.39 392.50L1412.39 392.50L1411.39 392.50L1410.39 392.50L1409.39 392.50L1408.39 392.50L1407.39 392.50L1406.39 392.50L1405.39 392.50L1404.39 392.50L1403.39 392.50L1402.39 392.50L1401.38 392.50L1400.38 392.50L1399.38 392.50L1398.38 392.50L1397.38 392.50L1396.38 392.50L1395.38 392.50L1394.38 392.50L1393.38 392.50L1392.38 392.50L1391.38 392.50L1390.38 392.50L1389.38 392.50L1388.38 392.50L1387.37 392.50L1386.37 392.50L1385.37 392.50L1384.37 392.50L1383.37 392.50L1382.37 392.50L1381.37 392.50L1380.37 392.50L1379.37 392.50L1378.37 392.50L1377.37 392.50L1376.37 392.50L1375.37 392.50L1374.37 392.50L1373.36 392.50L1372.36 392.50L1371.36 392.50L1370.36 392.50L1369.36 392.50L1368.36 392.50L1367.36 392.50L1366.36 392.50L1365.36 392.50L1364.36 392.50L1363.36 392.50L1362.36 392.50L1361.36 392.50L1360.36 392.50L1359.35 392.50L1358.35 392.50L1357.35 392.50L1356.35 392.50L1355.35 392.50L1354.35 392.50L1353.35 392.50L1352.35 392.50L1351.35 392.50L1350.35 392.50L1349.35 392.50L1348.35 392.50L1347.35 392.50L1346.35 392.50L1345.34 392.50L1344.34 392.50L1343.34 392.50L1342.34 392.50L1341.34 392.50L1340.34 392.50L1339.34 392.50L1338.34 392.50L1337.34 392.50L1336.34 392.50L1335.34 392.50L1334.34 392.50L1333.34 392.50L1332.34 392.50L1331.33 392.50L1330.33 392.50L1329.33 392.50L1328.33 392.50L1327.33 392.50L1326.33 392.50L1325.33 392.50L1324.33 392.50L1323.33 392.50L1322.33 392.50L1321.33 392.50L1320.33 392.50L1319.33 392.50L1318.32 392.50L1317.32 392.50L1316.32 392.50L1315.32 392.50L1314.32 392.50L1313.32 392.50L1312.32 392.50L1311.32 392.50L1310.32 392.50L1309.32 392.50L1308.32 392.50L1307.32 392.50L1306.32 392.50L1305.32 392.50L1304.31 392.50L1303.31 392.50L1302.31 392.50L1301.31 392.50L1300.31 392.50L1299.31 392.50L1298.31 392.50L1297.31 392.50L1296.31 392.50L1295.31 392.50L1294.31 392.50L1293.31 392.50L1292.31 392.50L1291.31 392.50L1290.30 392.50L1289.30 392.50L1288.30 392.50L1287.30 392.50L1286.30 392.50L1285.30 392.50L1284.30 392.50L1283.30 392.50L1282.30 392.50L1281.30 392.50L1280.30 392.50L1279.30 392.50L1278.30 392.50L1277.30 392.50L1276.29 392.50L1275.29 392.50L1274.29 392.50L1273.29 392.50L1272.29 392.50L1271.29 392.50L1270.29 392.50L1269.29 392.50L1268.29 392.50L1267.29 392.50L1266.29 392.50L1265.29 392.50L1264.29 392.50L1263.29 392.50L1262.28 392.50L1261.28 392.50L1260.28 392.50L1259.28 392.50L1258.28 392.50L1257.28 392.50L1256.28 392.50L1255.28 392.50L1254.28 392.50L1253.28 392.50L1252.28 392.50L1251.28 392.50L1250.28 392.50L1249.28 392.50L1248.27 392.50L1247.27 392.50L1246.27 392.50L1245.27 392.50L1244.27 392.50L1243.27 392.50L1242.27 392.50L1241.27 392.50L1240.27 392.50L1239.27 392.50L1238.27 392.50L1237.27 392.50L1236.27 392.50L1235.27 392.50L1234.26 392.50L1233.26 392.50L1232.26 392.50L1231.26 392.50L1230.26 392.50L1229.26 392.50L1228.26 392.50L1227.26 392.50L1226.26 392.50L1225.26 392.50L1224.26 392.50L1223.26 392.50L1222.26 392.50L1221.26 392.50L1220.25 392.50L1219.25 392.50L1218.25 392.50L1217.25 392.50L1216.25 392.50L1215.25 392.50L1214.25 392.50L1213.25 392.50L1212.25 392.50L1211.25 392.50L1210.25 392.50L1209.25 392.50L1208.25 392.50L1207.25 392.50L1206.24 392.50L1205.24 392.50L1204.24 392.50L1203.24 392.50L1202.24 392.50L1201.24 392.50L1200.24 392.50L1199.24 392.50L1198.24 392.50L1197.24 392.50L1196.24 392.50L1195.24 392.50L1194.24 392.50L1193.24 392.50L1192.23 392.50L1191.23 392.50L1190.23 392.50L1189.23 392.50L1188.23 392.50L1187.23 392.50L1186.23 392.50L1185.23 392.50L1184.23 392.50L1183.23 392.50L1182.23 392.50L1181.23 392.50L1180.23 392.50L1179.23 392.50L1178.22 392.50L1177.22 392.50L1176.22 392.50L1175.22 392.50L1174.22 392.50L1173.22 392.50L1172.22 392.50L1171.22 392.50L1170.22 392.50L1169.22 392.50L1168.22 392.50L1167.22 392.50L1166.22 392.50L1165.22 392.50L1164.21 392.50L1163.21 392.50L1162.21 392.50L1161.21 392.50L1160.21 392.50L1159.21 392.50L1158.21 392.50L1157.21 392.50L1156.21 392.50L1155.21 392.50L1154.21 392.50L1153.21 392.50L1152.21 392.50L1151.21 392.50L1150.20 392.50L1149.20 392.50L1148.20 392.50L1147.20 392.50L1146.20 392.50L1145.20 392.50L1144.20 392.50L1143.20 392.50L1142.20 392.50L1141.20 392.50L1140.20 392.50L1139.20 392.50L1138.20 392.50L1137.20 392.50L1136.19 392.50L1135.19 392.50L1134.19 392.50L1133.19 392.50L1132.19 392.50L1131.19 392.50L1130.19 392.50L1129.19 392.50L1128.19 392.50L1127.19 392.50L1126.19 392.50L1125.19 392.50L1124.19 392.50L1123.19 392.50L1122.18 392.50L1121.18 392.50L1120.18 392.50L1119.18 392.50L1118.18 392.50L1117.18 392.50L1116.18 392.50L1115.18 392.50L1114.18 392.50L1113.18 392.50L1112.18 392.50L1111.18 392.50L1110.18 392.50L1109.18 392.50L1108.17 392.50L1107.17 392.50L1106.17 392.50L1105.17 392.50L1104.17 392.50L1103.17 392.50L1102.17 392.50L1101.17 392.50L1100.17 392.50L1099.17 392.50L1098.17 392.50L1097.17 392.50L1096.17 392.50L1095.16 392.50L1094.16 392.50L1093.16 392.50L1092.16 392.50L1091.16 392.50L1090.16 392.50L1089.16 392.50L1088.16 392.50L1087.16 392.50L1086.16 392.50L1085.16 392.50L1084.16 392.50L1083.16 392.50L1082.16 392.50L1081.15 392.50L1080.15 392.50L1079.15 392.50L1078.15 392.50L1077.15 392.50L1076.15 392.50L1075.15 392.50L1074.15 392.50L1073.15 392.50L1072.15 392.50L1071.15 392.50L1070.15 392.50L1069.15 392.50L1068.15 392.50L1067.14 392.50L1066.14 392.50L1065.14 392.50L1064.14 392.50L1063.14 392.50L1062.14 392.50L1061.14 392.50L1060.14 392.50L1059.14 392.50L1058.14 392.50L1057.14 392.50L1056.14 392.50L1055.14 392.50L1054.14 392.50L1053.13 392.50L1052.13 392.50L1051.13 392.50L1050.13 392.50L1049.13 392.50L1048.13 392.50L1047.13 392.50L1046.13 392.50L1045.13 392.50L1044.13 392.50L1043.13 392.50L1042.13 392.50L1041.13 392.50L1040.13 392.50L1039.12 392.50L1038.12 392.50L1037.12 392.50L1036.12 392.50L1035.12 392.50L1034.12 392.50L1033.12 392.50L1032.12 392.50L1031.12 392.50L1030.12 392.50L1029.12 392.50L1028.12 392.50L1027.12 392.50L1026.12 392.50L1025.11 392.50L1024.11 392.50L1023.11 392.50L1022.11 392.50L1021.11 392.50L1020.11 392.50L1019.11 392.50L1018.11 392.50L1017.11 392.50L1016.11 392.50L1015.11 392.50L1014.11 392.50L1013.11 392.50L1012.11 392.50L1011.10 392.50L1010.10 392.50L1009.10 392.50L1008.10 392.50L1007.10 392.50L1006.10 392.50L1005.10 392.50L1004.10 392.50L1003.10 392.50L1002.10 392.50L1001.10 392.50L1000.10 392.50L999.10 392.50L998.10 392.50L997.09 392.50L996.09 392.50L995.09 392.50L994.09 392.50L993.09 392.50L992.09 392.50L991.09 392.50L990.09 392.50L989.09 392.50L988.09 392.50L987.09 392.50L986.09 392.50L985.09 392.50L984.09 392.50L983.08 392.50L982.08 392.50L981.08 392.50L980.08 392.50L979.08 392.50L978.08 392.50L977.08 392.50L976.08 392.50L975.08 392.50L974.08 392.50L973.08 392.50L972.08 392.50L971.08 392.50L970.08 392.50L969.07 392.50L968.07 392.50L967.07 392.50L966.07 392.50L965.07 392.50L964.07 392.50L963.07 392.50L962.07 392.50L961.07 392.50L960.07 392.50L959.07 392.50L958.07 392.50L957.07 392.50L956.07 392.50L955.06 392.50L954.06 392.50L953.06 392.50L952.06 392.50L951.06 392.50L950.06 392.50L949.06 392.50L948.06 392.50L947.06 392.50L946.06 392.50L945.06 392.50L944.06 392.50L943.06 392.50L942.06 392.50L941.05 392.50L940.05 392.50L939.05 392.50L938.05 392.50L937.05 392.50L936.05 392.50L935.05 392.50L934.05 392.50L933.05 392.50L932.05 392.50L931.05 392.50L930.05 392.50L929.05 392.50L928.05 392.50L927.04 392.50L926.04 392.50L925.04 392.50L924.04 392.50L923.04 392.50L922.04 392.50L921.04 392.50L920.04 392.50L919.04 392.50L918.04 392.50L917.04 392.50L916.04 392.50L915.04 392.50L914.04 392.50L913.03 392.50L912.03 392.50L911.03 392.50L910.03 392.50L909.03 392.50L908.03 392.50L907.03 392.50L906.03 392.50L905.03 392.50L904.03 392.50L903.03 392.50L902.03 392.50L901.03 392.50L900.03 392.50L899.02 392.50L898.02 392.50L897.02 392.50L896.02 392.50L895.02 392.50L894.02 392.50L893.02 392.50L892.02 392.50L891.02 392.50L890.02 392.50L889.02 392.50L888.02 392.50L887.02 392.50L886.02 392.50L885.01 392.50L884.01 392.50L883.01 392.50L882.01 392.50L881.01 392.50L880.01 392.50L879.01 392.50L878.01 392.50L877.01 392.50L876.01 392.50L875.01 392.50L874.01 392.50L873.01 392.50L872.01 392.50L871.00 392.50L870.00 392.50L869.00 392.50L868.00 392.50L867.00 392.50L866.00 392.50L865.00 392.50Z" fill="#bf1b00" fill-opacity="0.4"/><path d="M865.0 340.5H1563.8" stroke="rgba(240,250,255,0.09)" stroke-width="1"/><path d="M865.0 363.5H1563.8" stroke="rgba(240,250,255,0.09)" stroke-width="1"/><path d="M865.0 386.5H1563.8" stroke="rgba(240,250,255,0.09)" stroke-width="1"/><path d="M865.0 409.5H1563.8" stroke="rgba(240,250,255,0.09)" stroke-width="1"/><path d="M865.0 432.5H1563.8" stroke="rgba(240,250,255,0.09)" stroke-width="1"/><path d="M865.0 455.5H1563.8" stroke="rgba(240,250,255,0.09)" stroke-width="1"/><path d="M865.0 479.5H1563.8" stroke="rgba(240,250,255,0.09)" stroke-width="1"/><path d="M867.5 332.5V483.0" stroke="rgba(240,250,255,0.09)" stroke-width="1"/><path d="M925.5 332.5V483.0" stroke="rgba(240,250,255,0.09)" stroke-width="1"/><path d="M983.5 332.5V483.0" stroke="rgba(240,250,255,0.09)" stroke-width="1"/><path d="M1041.5 332.5V483.0" stroke="rgba(240,250,255,0.09)" stroke-width="1"/><path d="M1100.5 332.5V483.0" stroke="rgba(240,250,255,0.09)" stroke-width="1"/><path d="M1158.5 332.5V483.0" stroke="rgba(240,250,255,0.09)" stroke-width="1"/><path d="M1216.5 332.5V483.0" stroke="rgba(240,250,255,0.09)" stroke-width="1"/><path d="M1274.5 332.5V483.0" stroke="rgba(240,250,255,0.09)" stroke-width="1"/><path d="M1333.5 332.5V483.0" stroke="rgba(240,250,255,0.09)" stroke-width="1"/><path d="M1391.5 332.5V483.0" stroke="rgba(240,250,255,0.09)" stroke-width="1"/><path d="M1449.5 332.5V483.0" stroke="rgba(240,250,255,0.09)" stroke-width="1"/><path d="M1507.5 332.5V483.0" stroke="rgba(240,250,255,0.09)" stroke-width="1"/><path d="M865.00 432.06L866.00 432.46L867.00 432.61L868.00 432.48L869.00 432.62L870.00 432.75L871.00 433.24L872.01 433.59L873.01 433.49L874.01 433.53L875.01 433.40L876.01 432.89L877.01 432.36L878.01 432.13L879.01 432.44L880.01 432.36L881.01 432.28L882.01 432.67L883.01 432.14L884.01 432.79L885.01 435.89L886.02 439.59L887.02 439.02L888.02 434.85L889.02 431.32L890.02 431.46L891.02 431.85L892.02 432.38L893.02 432.15L894.02 432.06L895.02 432.40L896.02 432.80L897.02 432.53L898.02 432.65L899.02 433.39L900.03 433.34L901.03 433.31L902.03 433.04L903.03 431.96L904.03 431.60L905.03 430.60L906.03 430.97L907.03 431.46L908.03 431.74L909.03 431.90L910.03 431.31L911.03 431.28L912.03 430.87L913.03 430.54L914.04 431.47L915.04 432.39L916.04 433.05L917.04 433.58L918.04 433.67L919.04 433.03L920.04 432.84L921.04 432.96L922.04 432.23L923.04 431.59L924.04 431.17L925.04 430.75L926.04 431.49L927.04 432.20L928.05 433.46L929.05 434.42L930.05 433.98L931.05 433.66L932.05 433.61L933.05 434.27L934.05 433.33L935.05 433.58L936.05 433.19L937.05 432.70L938.05 433.05L939.05 432.40L940.05 432.46L941.05 432.68L942.06 431.92L943.06 432.16L944.06 431.27L945.06 430.78L946.06 430.58L947.06 430.91L948.06 430.64L949.06 430.66L950.06 431.14L951.06 431.72L952.06 432.31L953.06 432.55L954.06 431.74L955.06 431.54L956.07 430.88L957.07 430.32L958.07 430.81L959.07 431.12L960.07 430.81L961.07 431.00L962.07 431.11L963.07 431.44L964.07 431.34L965.07 431.46L966.07 431.39L967.07 430.90L968.07 431.03L969.07 430.93L970.08 430.67L971.08 431.74L972.08 431.96L973.08 431.87L974.08 432.11L975.08 432.92L976.08 434.33L977.08 434.89L978.08 434.21L979.08 433.61L980.08 433.41L981.08 433.69L982.08 430.61L983.08 428.07L984.09 427.83L985.09 430.35L986.09 432.73L987.09 432.70L988.09 432.87L989.09 432.58L990.09 433.00L991.09 432.94L992.09 432.81L993.09 432.33L994.09 432.68L995.09 432.45L996.09 433.07L997.09 433.17L998.10 432.58L999.10 432.18L1000.10 432.28L1001.10 432.19L1002.10 432.20L1003.10 431.81L1004.10 431.29L1005.10 431.75L1006.10 431.80L1007.10 433.04L1008.10 433.18L1009.10 433.96L1010.10 434.32L1011.10 433.80L1012.11 433.81L1013.11 434.10L1014.11 434.12L1015.11 434.08L1016.11 433.82L1017.11 433.88L1018.11 433.40L1019.11 433.65L1020.11 432.84L1021.11 432.83L1022.11 432.72L1023.11 432.17L1024.11 432.17L1025.11 431.75L1026.12 431.58L1027.12 431.76L1028.12 431.45L1029.12 431.18L1030.12 431.29L1031.12 431.71L1032.12 431.81L1033.12 431.31L1034.12 431.62L1035.12 430.53L1036.12 428.37L1037.12 427.01L1038.12 428.94L1039.12 431.43L1040.13 432.63L1041.13 433.34L1042.13 432.55L1043.13 432.98L1044.13 432.28L1045.13 431.86L1046.13 432.58L1047.13 432.79L1048.13 433.14L1049.13 433.70L1050.13 432.79L1051.13 432.75L1052.13 432.24L1053.13 432.26L1054.14 432.74L1055.14 432.74L1056.14 433.41L1057.14 433.65L1058.14 433.80L1059.14 434.00L1060.14 433.97L1061.14 433.53L1062.14 432.64L1063.14 431.78L1064.14 431.36L1065.14 430.84L1066.14 430.39L1067.14 431.10L1068.15 430.68L1069.15 431.01L1070.15 431.67L1071.15 432.67L1072.15 433.00L1073.15 433.66L1074.15 433.48L1075.15 432.67L1076.15 432.77L1077.15 431.89L1078.15 432.66L1079.15 432.91L1080.15 433.33L1081.15 434.05L1082.16 433.45L1083.16 432.88L1084.16 432.39L1085.16 431.95L1086.16 431.37L1087.16 431.11L1088.16 431.16L1089.16 430.87L1090.16 431.29L1091.16 432.05L1092.16 432.35L1093.16 433.05L1094.16 432.69L1095.16 433.23L1096.17 433.42L1097.17 433.62L1098.17 432.70L1099.17 432.24L1100.17 432.27L1101.17 431.25L1102.17 431.71L1103.17 431.45L1104.17 430.69L1105.17 430.61L1106.17 431.22L1107.17 431.06L1108.17 431.15L1109.18 431.96L1110.18 432.20L1111.18 433.07L1112.18 433.10L1113.18 433.89L1114.18 433.93L1115.18 433.21L1116.18 433.18L1117.18 433.37L1118.18 432.98L1119.18 432.45L1120.18 431.19L1121.18 430.93L1122.18 431.25L1123.19 431.16L1124.19 431.42L1125.19 431.14L1126.19 430.91L1127.19 430.81L1128.19 430.62L1129.19 430.91L1130.19 430.84L1131.19 430.84L1132.19 430.47L1133.19 430.46L1134.19 431.14L1135.19 432.31L1136.19 433.10L1137.20 433.71L1138.20 432.49L1139.20 431.90L1140.20 432.06L1141.20 431.11L1142.20 431.69L1143.20 431.69L1144.20 432.14L1145.20 432.53L1146.20 432.36L1147.20 432.39L1148.20 431.82L1149.20 432.27L1150.20 432.16L1151.21 431.39L1152.21 431.38L1153.21 431.38L1154.21 431.60L1155.21 431.92L1156.21 432.38L1157.21 433.14L1158.21 432.21L1159.21 432.37L1160.21 431.75L1161.21 431.14L1162.21 431.72L1163.21 432.00L1164.21 432.28L1165.22 432.90L1166.22 432.35L1167.22 432.25L1168.22 431.64L1169.22 430.73L1170.22 431.52L1171.22 431.66L1172.22 433.69L1173.22 436.40L1174.22 437.22L1175.22 435.02L1176.22 432.42L1177.22 431.42L1178.22 431.53L1179.23 431.58L1180.23 431.34L1181.23 431.65L1182.23 431.76L1183.23 432.61L1184.23 433.34L1185.23 433.60L1186.23 433.73L1187.23 433.80L1188.23 433.64L1189.23 433.18L1190.23 433.30L1191.23 432.63L1192.23 431.91L1193.24 431.72L1194.24 432.17L1195.24 432.67L1196.24 433.07L1197.24 434.09L1198.24 433.19L1199.24 432.63L1200.24 432.07L1201.24 431.64L1202.24 431.04L1203.24 431.68L1204.24 431.95L1205.24 431.72L1206.24 432.25L1207.25 432.39L1208.25 432.92L1209.25 433.48L1210.25 433.06L1211.25 432.99L1212.25 432.43L1213.25 430.75L1214.25 429.63L1215.25 430.71L1216.25 431.11L1217.25 431.26L1218.25 431.77L1219.25 432.71L1220.25 432.92L1221.26 434.14L1222.26 433.57L1223.26 432.30L1224.26 432.31L1225.26 431.00L1226.26 431.29L1227.26 431.08L1228.26 431.39L1229.26 431.52L1230.26 431.54L1231.26 432.71L1232.26 432.76L1233.26 433.30L1234.26 432.96L1235.27 432.38L1236.27 431.91L1237.27 431.81L1238.27 431.70L1239.27 431.45L1240.27 431.77L1241.27 431.40L1242.27 430.98L1243.27 430.96L1244.27 430.60L1245.27 430.49L1246.27 430.98L1247.27 430.71L1248.27 431.13L1249.28 431.02L1250.28 430.91L1251.28 432.10L1252.28 432.51L1253.28 432.26L1254.28 432.62L1255.28 431.93L1256.28 431.66L1257.28 431.75L1258.28 431.49L1259.28 432.04L1260.28 432.69L1261.28 432.84L1262.28 432.43L1263.29 432.63L1264.29 432.30L1265.29 431.92L1266.29 431.60L1267.29 432.08L1268.29 432.02L1269.29 431.89L1270.29 432.23L1271.29 433.06L1272.29 433.20L1273.29 433.91L1274.29 433.66L1275.29 433.06L1276.29 432.48L1277.30 432.31L1278.30 432.26L1279.30 432.63L1280.30 432.51L1281.30 432.97L1282.30 433.19L1283.30 433.28L1284.30 433.15L1285.30 433.31L1286.30 433.32L1287.30 432.62L1288.30 431.87L1289.30 431.05L1290.30 430.95L1291.31 431.25L1292.31 431.13L1293.31 431.13L1294.31 431.84L1295.31 432.62L1296.31 432.84L1297.31 433.57L1298.31 434.07L1299.31 433.94L1300.31 433.83L1301.31 433.08L1302.31 432.58L1303.31 432.24L1304.31 431.85L1305.32 431.50L1306.32 431.03L1307.32 431.32L1308.32 430.90L1309.32 430.85L1310.32 431.82L1311.32 432.21L1312.32 432.77L1313.32 433.06L1314.32 433.33L1315.32 433.29L1316.32 433.58L1317.32 434.08L1318.32 433.49L1319.33 432.21L1320.33 431.57L1321.33 431.46L1322.33 431.98L1323.33 432.78L1324.33 433.01L1325.33 433.86L1326.33 433.67L1327.33 434.05L1328.33 433.63L1329.33 433.80L1330.33 432.82L1331.33 430.83L1332.34 430.36L1333.34 431.47L1334.34 432.65L1335.34 432.29L1336.34 432.08L1337.34 431.69L1338.34 432.03L1339.34 431.11L1340.34 430.83L1341.34 430.93L1342.34 430.80L1343.34 430.90L1344.34 430.54L1345.34 430.86L1346.35 431.13L1347.35 432.07L1348.35 433.26L1349.35 433.63L1350.35 433.16L1351.35 432.84L1352.35 432.17L1353.35 431.18L1354.35 431.49L1355.35 432.08L1356.35 432.80L1357.35 432.93L1358.35 432.33L1359.35 432.40L1360.36 431.88L1361.36 431.76L1362.36 432.29L1363.36 432.78L1364.36 432.91L1365.36 433.71L1366.36 433.10L1367.36 432.91L1368.36 432.77L1369.36 433.00L1370.36 432.69L1371.36 431.90L1372.36 431.72L1373.36 431.45L1374.37 431.34L1375.37 431.26L1376.37 431.15L1377.37 430.89L1378.37 431.67L1379.37 432.35L1380.37 432.64L1381.37 433.36L1382.37 432.56L1383.37 431.66L1384.37 431.54L1385.37 431.05L1386.37 430.72L1387.37 430.65L1388.38 431.19L1389.38 431.36L1390.38 431.67L1391.38 432.29L1392.38 432.34L1393.38 432.76L1394.38 432.43L1395.38 433.08L1396.38 433.54L1397.38 433.24L1398.38 433.02L1399.38 433.33L1400.38 433.25L1401.38 432.38L1402.39 432.52L1403.39 431.83L1404.39 432.01L1405.39 431.63L1406.39 431.88L1407.39 432.43L1408.39 434.51L1409.39 436.09L1410.39 435.90L1411.39 433.76L1412.39 431.88L1413.39 431.61L1414.39 431.20L1415.39 430.89L1416.40 430.76L1417.40 430.74L1418.40 430.95L1419.40 431.35L1420.40 431.17L1421.40 431.73L1422.40 431.76L1423.40 432.07L1424.40 432.19L1425.40 432.37L1426.40 432.07L1427.40 431.78L1428.40 431.18L1429.40 430.74L1430.41 430.99L1431.41 431.17L1432.41 430.97L1433.41 431.07L1434.41 431.02L1435.41 431.67L1436.41 432.05L1437.41 431.73L1438.41 431.74L1439.41 431.96L1440.41 432.32L1441.41 432.39L1442.41 432.54L1443.41 431.41L1444.42 431.22L1445.42 430.67L1446.42 431.30L1447.42 431.61L1448.42 431.34L1449.42 431.45L1450.42 432.25L1451.42 432.82L1452.42 433.56L1453.42 433.34L1454.42 433.47L1455.42 433.62L1456.42 433.72L1457.42 433.82L1458.43 433.91L1459.43 433.52L1460.43 432.94L1461.43 432.61L1462.43 432.72L1463.43 432.66L1464.43 433.16L1465.43 432.84L1466.43 432.93L1467.43 433.05L1468.43 432.68L1469.43 432.41L1470.43 432.51L1471.43 432.14L1472.44 431.28L1473.44 431.04L1474.44 431.28L1475.44 430.80L1476.44 430.50L1477.44 430.27L1478.44 430.97L1479.44 430.84L1480.44 430.49L1481.44 430.59L1482.44 431.38L1483.44 431.99L1484.44 433.37L1485.44 433.90L1486.45 433.38L1487.45 433.01L1488.45 433.19L1489.45 432.92L1490.45 433.50L1491.45 433.67L1492.45 433.82L1493.45 433.69L1494.45 432.84L1495.45 432.13L1496.45 431.23L1497.45 430.87L1498.45 431.14L1499.45 431.79L1500.46 432.63L1501.46 432.60L1502.46 432.68L1503.46 432.23L1504.46 432.59L1505.46 431.84L1506.46 432.72L1507.46 432.96L1508.46 433.16L1509.46 432.80L1510.46 432.58L1511.46 432.56L1512.46 431.70L1513.46 430.47L1514.47 429.88L1515.47 430.80L1516.47 432.31L1517.47 434.34L1518.47 433.11L1519.47 432.67L1520.47 431.54L1521.47 431.10L1522.47 430.87L1523.47 431.88L1524.47 431.81L1525.47 432.50L1526.47 432.66L1527.47 432.54L1528.48 433.25L1529.48 433.00L1530.48 433.15L1531.48 433.11L1532.48 433.44L1533.48 433.71L1534.48 433.77L1535.48 433.33L1536.48 433.45L1537.48 432.84L1538.48 433.04L1539.48 433.06L1540.48 433.44L1541.48 433.30L1542.49 433.24L1543.49 432.80L1544.49 433.18L1545.49 433.52L1546.49 433.26L1547.49 433.63L1548.49 433.65L1549.49 433.40L1550.49 433.68L1551.49 433.02L1552.49 432.04L1553.49 431.86L1554.49 431.90L1555.49 432.27L1556.50 432.70L1557.50 432.81L1558.50 437.42L1559.50 442.06L1560.50 442.49L1561.50 437.95L1562.50 433.48" fill="none" stroke="#e8c41a" stroke-width="1.2"/><path d="M865.00 401.11L866.00 400.22L867.00 401.58L868.00 400.74L869.00 401.09L870.00 400.23L871.00 401.32L872.01 399.70L873.01 399.81L874.01 399.71L875.01 400.99L876.01 401.06L877.01 399.90L878.01 400.39L879.01 401.34L880.01 400.80L881.01 399.70L882.01 400.00L883.01 399.85L884.01 399.77L885.01 400.40L886.02 399.66L887.02 401.53L888.02 400.44L889.02 400.63L890.02 400.92L891.02 401.19L892.02 401.31L893.02 400.35L894.02 400.23L895.02 400.41L896.02 399.53L897.02 400.38L898.02 401.04L899.02 401.66L900.03 401.24L901.03 400.95L902.03 400.84L903.03 399.54L904.03 400.23L905.03 400.25L906.03 400.93L907.03 399.73L908.03 400.33L909.03 400.62L910.03 401.23L911.03 401.32L912.03 400.85L913.03 399.85L914.04 401.19L915.04 401.49L916.04 400.71L917.04 400.28L918.04 400.60L919.04 399.81L920.04 401.07L921.04 401.67L922.04 400.64L923.04 401.07L924.04 401.34L925.04 399.93L926.04 401.58L927.04 400.88L928.05 399.94L929.05 399.68L930.05 400.04L931.05 400.77L932.05 401.03L933.05 400.22L934.05 401.54L935.05 400.29L936.05 400.52L937.05 399.77L938.05 401.64L939.05 399.80L940.05 401.49L941.05 400.70L942.06 400.73L943.06 400.73L944.06 400.08L945.06 401.50L946.06 401.68L947.06 401.30L948.06 400.82L949.06 399.77L950.06 401.31L951.06 400.13L952.06 401.47L953.06 400.03L954.06 400.76L955.06 401.33L956.07 399.91L957.07 400.71L958.07 399.67L959.07 399.57L960.07 399.90L961.07 401.67L962.07 401.57L963.07 400.95L964.07 400.18L965.07 400.98L966.07 401.12L967.07 400.34L968.07 400.80L969.07 401.27L970.08 399.54L971.08 399.94L972.08 400.53L973.08 399.81L974.08 400.35L975.08 400.75L976.08 399.88L977.08 400.64L978.08 400.08L979.08 400.75L980.08 400.23L981.08 400.91L982.08 399.58L983.08 400.98L984.09 399.82L985.09 401.61L986.09 400.82L987.09 400.53L988.09 400.41L989.09 400.87L990.09 401.02L991.09 401.17L992.09 401.15L993.09 400.57L994.09 401.69L995.09 401.34L996.09 401.38L997.09 400.40L998.10 400.45L999.10 400.75L1000.10 401.49L1001.10 400.66L1002.10 400.66L1003.10 400.45L1004.10 401.49L1005.10 400.21L1006.10 399.62L1007.10 401.10L1008.10 401.48L1009.10 401.11L1010.10 400.81L1011.10 401.15L1012.11 400.17L1013.11 400.81L1014.11 399.65L1015.11 399.77L1016.11 400.48L1017.11 400.61L1018.11 400.37L1019.11 399.61L1020.11 401.03L1021.11 400.66L1022.11 400.03L1023.11 400.17L1024.11 400.37L1025.11 400.02L1026.12 399.65L1027.12 401.50L1028.12 401.63L1029.12 400.96L1030.12 401.41L1031.12 400.43L1032.12 401.27L1033.12 399.99L1034.12 401.14L1035.12 400.75L1036.12 401.49L1037.12 399.72L1038.12 401.24L1039.12 399.77L1040.13 400.68L1041.13 401.59L1042.13 399.50L1043.13 400.04L1044.13 400.16L1045.13 400.21L1046.13 399.64L1047.13 401.47L1048.13 401.29L1049.13 400.37L1050.13 400.28L1051.13 400.79L1052.13 399.60L1053.13 399.57L1054.14 401.48L1055.14 400.18L1056.14 400.60L1057.14 401.55L1058.14 401.65L1059.14 400.54L1060.14 399.95L1061.14 400.15L1062.14 401.53L1063.14 401.47L1064.14 399.93L1065.14 401.34L1066.14 400.28L1067.14 400.54L1068.15 399.88L1069.15 401.44L1070.15 401.69L1071.15 399.94L1072.15 400.89L1073.15 399.92L1074.15 401.44L1075.15 399.61L1076.15 399.73L1077.15 401.10L1078.15 400.19L1079.15 401.48L1080.15 401.41L1081.15 401.07L1082.16 399.80L1083.16 401.03L1084.16 401.56L1085.16 400.48L1086.16 399.67L1087.16 399.99L1088.16 400.18L1089.16 401.06L1090.16 399.93L1091.16 399.90L1092.16 400.02L1093.16 400.96L1094.16 401.24L1095.16 400.32L1096.17 400.96L1097.17 401.45L1098.17 400.80L1099.17 400.00L1100.17 400.16L1101.17 401.54L1102.17 400.97L1103.17 400.11L1104.17 400.91L1105.17 399.70L1106.17 401.66L1107.17 400.47L1108.17 400.66L1109.18 400.67L1110.18 399.60L1111.18 400.82L1112.18 400.13L1113.18 400.05L1114.18 401.27L1115.18 399.69L1116.18 400.13L1117.18 401.16L1118.18 400.04L1119.18 400.11L1120.18 400.71L1121.18 399.91L1122.18 401.47L1123.19 401.67L1124.19 399.57L1125.19 400.52L1126.19 401.15L1127.19 400.35L1128.19 401.54L1129.19 400.60L1130.19 399.90L1131.19 400.72L1132.19 400.92L1133.19 400.29L1134.19 400.95L1135.19 401.22L1136.19 400.64L1137.20 400.61L1138.20 401.36L1139.20 401.01L1140.20 400.65L1141.20 401.59L1142.20 399.88L1143.20 401.22L1144.20 399.86L1145.20 400.84L1146.20 400.02L1147.20 400.47L1148.20 401.20L1149.20 401.23L1150.20 401.24L1151.21 400.02L1152.21 400.58L1153.21 399.99L1154.21 400.78L1155.21 400.60L1156.21 399.58L1157.21 400.81L1158.21 401.07L1159.21 400.76L1160.21 401.42L1161.21 399.90L1162.21 399.83L1163.21 399.54L1164.21 400.59L1165.22 400.46L1166.22 400.47L1167.22 400.08L1168.22 401.26L1169.22 399.66L1170.22 401.50L1171.22 400.75L1172.22 400.70L1173.22 401.24L1174.22 400.02L1175.22 399.82L1176.22 400.18L1177.22 399.59L1178.22 400.19L1179.23 400.87L1180.23 400.66L1181.23 400.08L1182.23 400.80L1183.23 399.69L1184.23 401.31L1185.23 399.88L1186.23 400.06L1187.23 399.85L1188.23 401.02L1189.23 401.33L1190.23 401.23L1191.23 399.63L1192.23 400.40L1193.24 400.30L1194.24 399.98L1195.24 401.64L1196.24 399.59L1197.24 400.58L1198.24 401.17L1199.24 401.67L1200.24 399.82L1201.24 400.50L1202.24 401.14L1203.24 399.59L1204.24 400.03L1205.24 401.46L1206.24 399.81L1207.25 400.36L1208.25 400.16L1209.25 400.43L1210.25 399.67L1211.25 399.58L1212.25 401.69L1213.25 401.18L1214.25 401.11L1215.25 400.01L1216.25 400.06L1217.25 400.71L1218.25 400.03L1219.25 400.52L1220.25 401.55L1221.26 400.30L1222.26 400.24L1223.26 401.66L1224.26 400.84L1225.26 399.59L1226.26 400.39L1227.26 400.93L1228.26 399.63L1229.26 400.26L1230.26 401.03L1231.26 401.40L1232.26 400.80L1233.26 401.45L1234.26 400.52L1235.27 400.36L1236.27 401.35L1237.27 400.34L1238.27 401.22L1239.27 399.97L1240.27 400.26L1241.27 399.90L1242.27 400.71L1243.27 399.86L1244.27 399.95L1245.27 399.97L1246.27 400.53L1247.27 400.18L1248.27 400.48L1249.28 401.69L1250.28 400.99L1251.28 401.40L1252.28 399.95L1253.28 400.34L1254.28 399.66L1255.28 401.02L1256.28 400.30L1257.28 400.10L1258.28 399.54L1259.28 399.90L1260.28 400.08L1261.28 400.36L1262.28 401.53L1263.29 401.07L1264.29 400.09L1265.29 400.29L1266.29 399.84L1267.29 401.56L1268.29 400.29L1269.29 401.18L1270.29 401.09L1271.29 401.50L1272.29 399.54L1273.29 400.21L1274.29 400.35L1275.29 399.68L1276.29 401.44L1277.30 400.22L1278.30 401.20L1279.30 400.64L1280.30 399.62L1281.30 400.37L1282.30 400.02L1283.30 399.59L1284.30 399.83L1285.30 400.81L1286.30 399.57L1287.30 400.19L1288.30 400.43L1289.30 400.70L1290.30 399.80L1291.31 401.05L1292.31 400.07L1293.31 401.10L1294.31 400.97L1295.31 399.82L1296.31 399.95L1297.31 400.12L1298.31 401.07L1299.31 400.39L1300.31 400.35L1301.31 401.41L1302.31 400.00L1303.31 400.14L1304.31 400.26L1305.32 399.97L1306.32 399.59L1307.32 399.55L1308.32 400.89L1309.32 400.75L1310.32 401.28L1311.32 401.65L1312.32 400.16L1313.32 400.98L1314.32 401.52L1315.32 399.98L1316.32 401.02L1317.32 400.97L1318.32 401.60L1319.33 401.41L1320.33 400.02L1321.33 400.89L1322.33 399.70L1323.33 400.44L1324.33 400.36L1325.33 399.63L1326.33 400.34L1327.33 400.22L1328.33 400.59L1329.33 400.12L1330.33 399.85L1331.33 400.39L1332.34 400.55L1333.34 399.87L1334.34 400.96L1335.34 400.03L1336.34 399.70L1337.34 400.25L1338.34 400.43L1339.34 399.83L1340.34 400.78L1341.34 401.04L1342.34 400.72L1343.34 401.04L1344.34 399.55L1345.34 400.36L1346.35 400.30L1347.35 399.64L1348.35 400.39L1349.35 399.62L1350.35 400.59L1351.35 400.79L1352.35 400.53L1353.35 400.22L1354.35 400.06L1355.35 399.55L1356.35 400.26L1357.35 401.46L1358.35 400.74L1359.35 400.08L1360.36 400.97L1361.36 399.91L1362.36 400.53L1363.36 400.85L1364.36 401.60L1365.36 400.30L1366.36 400.77L1367.36 401.57L1368.36 401.20L1369.36 400.88L1370.36 400.87L1371.36 400.40L1372.36 400.41L1373.36 400.11L1374.37 401.33L1375.37 401.44L1376.37 400.34L1377.37 401.50L1378.37 399.58L1379.37 399.80L1380.37 400.62L1381.37 400.18L1382.37 400.29L1383.37 401.65L1384.37 399.83L1385.37 399.92L1386.37 400.00L1387.37 401.00L1388.38 400.02L1389.38 399.50L1390.38 400.70L1391.38 400.37L1392.38 400.03L1393.38 400.59L1394.38 400.93L1395.38 400.71L1396.38 400.87L1397.38 400.73L1398.38 401.33L1399.38 401.63L1400.38 400.23L1401.38 400.26L1402.39 401.45L1403.39 400.19L1404.39 401.08L1405.39 401.03L1406.39 401.01L1407.39 401.62L1408.39 401.31L1409.39 399.85L1410.39 400.87L1411.39 400.58L1412.39 400.74L1413.39 400.31L1414.39 400.13L1415.39 401.15L1416.40 400.67L1417.40 400.02L1418.40 400.05L1419.40 400.21L1420.40 399.89L1421.40 400.63L1422.40 399.78L1423.40 399.64L1424.40 399.65L1425.40 399.72L1426.40 401.05L1427.40 399.75L1428.40 400.49L1429.40 401.20L1430.41 400.56L1431.41 399.86L1432.41 401.41L1433.41 401.41L1434.41 399.62L1435.41 400.06L1436.41 400.62L1437.41 401.25L1438.41 400.36L1439.41 401.08L1440.41 400.05L1441.41 401.07L1442.41 400.22L1443.41 400.23L1444.42 401.17L1445.42 401.35L1446.42 401.32L1447.42 400.75L1448.42 400.43L1449.42 401.06L1450.42 400.87L1451.42 401.33L1452.42 401.26L1453.42 399.78L1454.42 400.33L1455.42 400.97L1456.42 400.01L1457.42 399.91L1458.43 399.53L1459.43 400.79L1460.43 401.57L1461.43 401.63L1462.43 399.79L1463.43 401.01L1464.43 400.42L1465.43 400.89L1466.43 400.37L1467.43 401.55L1468.43 401.68L1469.43 399.61L1470.43 401.07L1471.43 399.76L1472.44 399.59L1473.44 400.13L1474.44 401.11L1475.44 401.69L1476.44 399.76L1477.44 400.23L1478.44 399.56L1479.44 400.69L1480.44 400.56L1481.44 400.32L1482.44 400.18L1483.44 401.26L1484.44 401.35L1485.44 400.12L1486.45 400.36L1487.45 400.86L1488.45 401.18L1489.45 401.66L1490.45 400.36L1491.45 401.03L1492.45 400.70L1493.45 401.26L1494.45 399.82L1495.45 399.89L1496.45 399.74L1497.45 401.55L1498.45 400.05L1499.45 400.57L1500.46 399.76L1501.46 400.21L1502.46 399.54L1503.46 400.75L1504.46 399.82L1505.46 400.88L1506.46 400.10L1507.46 400.00L1508.46 400.56L1509.46 400.30L1510.46 400.07L1511.46 399.61L1512.46 399.64L1513.46 401.46L1514.47 400.18L1515.47 399.67L1516.47 399.90L1517.47 400.56L1518.47 401.69L1519.47 399.94L1520.47 401.41L1521.47 400.57L1522.47 400.41L1523.47 401.28L1524.47 400.37L1525.47 399.63L1526.47 400.71L1527.47 400.95L1528.48 400.87L1529.48 400.11L1530.48 401.57L1531.48 401.40L1532.48 401.69L1533.48 400.48L1534.48 401.33L1535.48 401.09L1536.48 399.89L1537.48 399.56L1538.48 399.87L1539.48 399.76L1540.48 399.66L1541.48 400.29L1542.49 401.16L1543.49 400.18L1544.49 400.63L1545.49 399.52L1546.49 399.96L1547.49 401.61L1548.49 399.52L1549.49 400.66L1550.49 401.28L1551.49 401.24L1552.49 401.12L1553.49 400.38L1554.49 401.27L1555.49 401.32L1556.50 401.19L1557.50 401.67L1558.50 399.72L1559.50 401.59L1560.50 400.38L1561.50 401.05L1562.50 400.05" fill="none" stroke="#2b5576" stroke-width="0.8"/><path d="M865.0 392.5H1562.5" stroke="#d8e6b8" stroke-width="1" stroke-opacity="0.65"/><path d="M865.00 355.78L866.00 355.48L867.00 354.91L868.00 354.54L869.00 354.61L870.00 355.40L871.00 355.26L872.01 355.15L873.01 354.80L874.01 354.75L875.01 355.05L876.01 354.75L877.01 354.90L878.01 355.18L879.01 355.15L880.01 355.21L881.01 355.09L882.01 355.60L883.01 355.72L884.01 355.81L885.01 353.10L886.02 351.00L887.02 350.54L888.02 353.18L889.02 355.32L890.02 355.46L891.02 355.10L892.02 355.46L893.02 355.40L894.02 355.23L895.02 354.80L896.02 355.17L897.02 354.83L898.02 354.91L899.02 355.05L900.03 355.69L901.03 355.81L902.03 355.43L903.03 355.34L904.03 354.86L905.03 355.01L906.03 354.55L907.03 354.52L908.03 354.45L909.03 354.69L910.03 354.97L911.03 355.28L912.03 355.47L913.03 355.95L914.04 355.18L915.04 355.31L916.04 354.57L917.04 355.38L918.04 355.43L919.04 355.68L920.04 355.69L921.04 355.72L922.04 355.66L923.04 355.41L924.04 355.25L925.04 355.42L926.04 355.51L927.04 355.16L928.05 354.85L929.05 354.47L930.05 354.65L931.05 354.31L932.05 354.38L933.05 354.52L934.05 354.94L935.05 354.87L936.05 355.11L937.05 354.76L938.05 355.03L939.05 354.87L940.05 355.03L941.05 354.69L942.06 354.92L943.06 354.31L944.06 354.71L945.06 355.10L946.06 355.54L947.06 355.51L948.06 355.23L949.06 355.13L950.06 355.32L951.06 354.96L952.06 354.86L953.06 355.25L954.06 355.09L955.06 355.29L956.07 355.57L957.07 355.85L958.07 356.03L959.07 355.62L960.07 355.19L961.07 354.50L962.07 355.38L963.07 355.32L964.07 356.00L965.07 355.68L966.07 355.25L967.07 354.81L968.07 355.00L969.07 355.42L970.08 355.65L971.08 355.36L972.08 354.82L973.08 354.74L974.08 355.11L975.08 354.66L976.08 354.23L977.08 353.22L978.08 353.51L979.08 354.73L980.08 355.77L981.08 355.73L982.08 356.19L983.08 355.61L984.09 355.12L985.09 354.86L986.09 354.96L987.09 354.91L988.09 355.13L989.09 355.32L990.09 355.64L991.09 355.40L992.09 355.11L993.09 354.89L994.09 354.58L995.09 354.95L996.09 354.79L997.09 355.11L998.10 355.08L999.10 355.25L1000.10 355.73L1001.10 355.53L1002.10 356.23L1003.10 356.30L1004.10 355.63L1005.10 355.25L1006.10 355.17L1007.10 355.07L1008.10 354.90L1009.10 354.46L1010.10 354.99L1011.10 354.67L1012.11 355.12L1013.11 355.45L1014.11 356.06L1015.11 356.26L1016.11 355.39L1017.11 355.43L1018.11 354.82L1019.11 355.01L1020.11 354.95L1021.11 355.68L1022.11 355.34L1023.11 355.34L1024.11 355.37L1025.11 355.49L1026.12 355.14L1027.12 355.73L1028.12 355.26L1029.12 355.19L1030.12 354.71L1031.12 354.99L1032.12 355.23L1033.12 355.28L1034.12 355.56L1035.12 355.98L1036.12 355.74L1037.12 355.75L1038.12 356.16L1039.12 356.04L1040.13 355.83L1041.13 355.44L1042.13 355.30L1043.13 355.34L1044.13 355.66L1045.13 355.34L1046.13 355.60L1047.13 355.21L1048.13 355.37L1049.13 355.17L1050.13 355.08L1051.13 354.38L1052.13 355.26L1053.13 355.46L1054.14 355.63L1055.14 355.78L1056.14 355.66L1057.14 355.75L1058.14 355.76L1059.14 355.35L1060.14 355.33L1061.14 355.28L1062.14 355.64L1063.14 355.36L1064.14 355.60L1065.14 355.10L1066.14 355.21L1067.14 354.96L1068.15 355.02L1069.15 354.89L1070.15 354.91L1071.15 354.96L1072.15 354.83L1073.15 354.97L1074.15 355.30L1075.15 355.69L1076.15 355.38L1077.15 355.50L1078.15 355.42L1079.15 355.68L1080.15 355.26L1081.15 355.45L1082.16 354.88L1083.16 354.60L1084.16 354.60L1085.16 354.86L1086.16 355.03L1087.16 355.27L1088.16 355.62L1089.16 355.24L1090.16 355.33L1091.16 355.25L1092.16 355.45L1093.16 355.50L1094.16 355.75L1095.16 355.72L1096.17 355.44L1097.17 355.66L1098.17 355.18L1099.17 354.89L1100.17 353.51L1101.17 353.96L1102.17 354.62L1103.17 354.58L1104.17 355.17L1105.17 355.28L1106.17 355.59L1107.17 355.77L1108.17 355.98L1109.18 356.30L1110.18 356.04L1111.18 355.91L1112.18 355.23L1113.18 355.39L1114.18 354.79L1115.18 355.04L1116.18 355.49L1117.18 355.79L1118.18 355.65L1119.18 356.19L1120.18 356.23L1121.18 356.07L1122.18 355.73L1123.19 355.24L1124.19 355.32L1125.19 355.95L1126.19 356.09L1127.19 355.39L1128.19 355.29L1129.19 354.76L1130.19 355.00L1131.19 355.51L1132.19 355.89L1133.19 355.91L1134.19 355.44L1135.19 355.16L1136.19 354.98L1137.20 354.75L1138.20 354.81L1139.20 355.05L1140.20 355.42L1141.20 355.78L1142.20 355.80L1143.20 355.91L1144.20 355.36L1145.20 355.96L1146.20 356.13L1147.20 356.15L1148.20 356.05L1149.20 356.10L1150.20 355.91L1151.21 355.97L1152.21 356.11L1153.21 356.00L1154.21 355.52L1155.21 355.23L1156.21 355.58L1157.21 354.11L1158.21 352.65L1159.21 351.45L1160.21 353.03L1161.21 354.42L1162.21 354.65L1163.21 355.27L1164.21 355.49L1165.22 356.01L1166.22 355.78L1167.22 355.62L1168.22 355.95L1169.22 355.17L1170.22 355.39L1171.22 354.95L1172.22 354.93L1173.22 355.76L1174.22 355.61L1175.22 355.68L1176.22 355.20L1177.22 355.51L1178.22 355.15L1179.23 355.54L1180.23 355.10L1181.23 355.66L1182.23 355.50L1183.23 355.68L1184.23 355.60L1185.23 355.44L1186.23 354.86L1187.23 355.02L1188.23 355.02L1189.23 354.92L1190.23 354.87L1191.23 355.36L1192.23 355.37L1193.24 355.23L1194.24 354.79L1195.24 354.53L1196.24 354.64L1197.24 355.23L1198.24 355.35L1199.24 355.53L1200.24 355.42L1201.24 355.81L1202.24 355.67L1203.24 355.74L1204.24 355.32L1205.24 354.91L1206.24 354.86L1207.25 354.74L1208.25 355.29L1209.25 355.77L1210.25 356.13L1211.25 356.14L1212.25 356.16L1213.25 356.15L1214.25 356.15L1215.25 355.55L1216.25 355.78L1217.25 355.71L1218.25 355.63L1219.25 355.46L1220.25 355.67L1221.26 356.08L1222.26 355.78L1223.26 355.98L1224.26 356.18L1225.26 355.55L1226.26 355.21L1227.26 355.28L1228.26 354.95L1229.26 354.52L1230.26 354.65L1231.26 355.26L1232.26 355.01L1233.26 354.75L1234.26 354.63L1235.27 354.70L1236.27 354.69L1237.27 354.17L1238.27 354.39L1239.27 355.01L1240.27 355.31L1241.27 355.53L1242.27 355.59L1243.27 355.86L1244.27 355.85L1245.27 355.63L1246.27 356.06L1247.27 355.33L1248.27 355.09L1249.28 354.63L1250.28 354.55L1251.28 354.79L1252.28 354.70L1253.28 354.69L1254.28 355.20L1255.28 354.90L1256.28 355.17L1257.28 355.50L1258.28 355.92L1259.28 355.96L1260.28 355.55L1261.28 355.35L1262.28 355.77L1263.29 355.71L1264.29 356.04L1265.29 355.38L1266.29 355.25L1267.29 354.34L1268.29 354.92L1269.29 355.51L1270.29 356.08L1271.29 355.85L1272.29 355.35L1273.29 354.95L1274.29 355.05L1275.29 355.03L1276.29 355.69L1277.30 355.53L1278.30 355.66L1279.30 355.93L1280.30 356.18L1281.30 355.72L1282.30 355.62L1283.30 355.64L1284.30 355.37L1285.30 354.69L1286.30 354.82L1287.30 355.49L1288.30 355.77L1289.30 355.36L1290.30 355.49L1291.31 355.10L1292.31 354.80L1293.31 354.73L1294.31 354.57L1295.31 354.61L1296.31 355.01L1297.31 354.72L1298.31 355.00L1299.31 354.91L1300.31 354.71L1301.31 355.40L1302.31 355.13L1303.31 355.36L1304.31 355.55L1305.32 355.39L1306.32 355.16L1307.32 355.00L1308.32 355.55L1309.32 355.27L1310.32 355.67L1311.32 355.86L1312.32 355.47L1313.32 355.12L1314.32 355.14L1315.32 354.95L1316.32 354.83L1317.32 354.93L1318.32 354.60L1319.33 354.89L1320.33 355.08L1321.33 355.51L1322.33 355.78L1323.33 355.12L1324.33 355.05L1325.33 354.95L1326.33 354.56L1327.33 354.52L1328.33 354.43L1329.33 354.39L1330.33 354.62L1331.33 353.13L1332.34 351.24L1333.34 351.06L1334.34 353.12L1335.34 355.57L1336.34 355.25L1337.34 355.18L1338.34 354.94L1339.34 354.93L1340.34 355.10L1341.34 355.10L1342.34 354.76L1343.34 355.03L1344.34 355.61L1345.34 356.23L1346.35 355.89L1347.35 356.00L1348.35 355.93L1349.35 355.65L1350.35 355.76L1351.35 355.93L1352.35 355.48L1353.35 355.09L1354.35 355.32L1355.35 355.31L1356.35 354.70L1357.35 355.12L1358.35 354.96L1359.35 354.81L1360.36 354.93L1361.36 354.78L1362.36 354.96L1363.36 354.49L1364.36 354.67L1365.36 355.08L1366.36 355.72L1367.36 355.41L1368.36 355.38L1369.36 355.14L1370.36 355.21L1371.36 355.35L1372.36 355.76L1373.36 355.35L1374.37 355.24L1375.37 355.21L1376.37 355.09L1377.37 355.18L1378.37 355.30L1379.37 355.14L1380.37 355.20L1381.37 355.54L1382.37 355.62L1383.37 355.78L1384.37 356.12L1385.37 355.71L1386.37 355.28L1387.37 355.27L1388.38 355.08L1389.38 355.71L1390.38 355.88L1391.38 355.61L1392.38 354.90L1393.38 354.83L1394.38 355.32L1395.38 355.11L1396.38 355.25L1397.38 355.40L1398.38 354.93L1399.38 354.96L1400.38 355.06L1401.38 355.89L1402.39 355.84L1403.39 355.38L1404.39 355.38L1405.39 354.82L1406.39 355.29L1407.39 355.60L1408.39 356.19L1409.39 355.84L1410.39 355.65L1411.39 355.32L1412.39 355.48L1413.39 355.21L1414.39 355.26L1415.39 355.59L1416.40 355.77L1417.40 355.83L1418.40 355.75L1419.40 355.41L1420.40 355.18L1421.40 355.59L1422.40 355.39L1423.40 355.70L1424.40 355.40L1425.40 355.75L1426.40 355.32L1427.40 355.59L1428.40 355.48L1429.40 355.06L1430.41 355.22L1431.41 354.75L1432.41 354.47L1433.41 354.76L1434.41 355.21L1435.41 355.15L1436.41 355.06L1437.41 354.86L1438.41 355.11L1439.41 355.00L1440.41 355.00L1441.41 355.01L1442.41 355.33L1443.41 356.01L1444.42 356.30L1445.42 356.01L1446.42 355.57L1447.42 355.04L1448.42 355.35L1449.42 355.54L1450.42 355.84L1451.42 355.82L1452.42 355.43L1453.42 355.80L1454.42 355.24L1455.42 354.94L1456.42 355.09L1457.42 354.65L1458.43 355.05L1459.43 355.05L1460.43 355.15L1461.43 354.87L1462.43 354.88L1463.43 355.36L1464.43 355.64L1465.43 355.75L1466.43 355.73L1467.43 355.00L1468.43 355.14L1469.43 355.18L1470.43 354.94L1471.43 354.97L1472.44 355.23L1473.44 355.22L1474.44 355.31L1475.44 355.38L1476.44 355.36L1477.44 356.01L1478.44 355.63L1479.44 356.13L1480.44 356.09L1481.44 355.95L1482.44 355.84L1483.44 355.50L1484.44 355.70L1485.44 355.49L1486.45 355.38L1487.45 355.05L1488.45 354.76L1489.45 354.29L1490.45 354.85L1491.45 355.71L1492.45 355.85L1493.45 355.62L1494.45 355.21L1495.45 354.68L1496.45 354.73L1497.45 354.78L1498.45 354.92L1499.45 354.87L1500.46 355.16L1501.46 355.19L1502.46 355.55L1503.46 353.86L1504.46 352.82L1505.46 352.65L1506.46 353.85L1507.46 355.81L1508.46 355.48L1509.46 355.49L1510.46 355.18L1511.46 355.25L1512.46 355.55L1513.46 356.03L1514.47 356.04L1515.47 355.80L1516.47 356.33L1517.47 355.57L1518.47 354.98L1519.47 354.59L1520.47 354.66L1521.47 354.99L1522.47 355.59L1523.47 355.29L1524.47 355.24L1525.47 354.99L1526.47 354.91L1527.47 355.03L1528.48 355.07L1529.48 355.38L1530.48 355.26L1531.48 355.19L1532.48 355.09L1533.48 354.90L1534.48 354.95L1535.48 355.46L1536.48 355.17L1537.48 355.57L1538.48 355.68L1539.48 355.69L1540.48 355.52L1541.48 355.79L1542.49 356.19L1543.49 356.39L1544.49 356.00L1545.49 356.18L1546.49 356.46L1547.49 356.18L1548.49 355.99L1549.49 356.35L1550.49 355.56L1551.49 355.26L1552.49 355.14L1553.49 355.23L1554.49 355.76L1555.49 356.03L1556.50 353.68L1557.50 351.84L1558.50 351.65L1559.50 353.72L1560.50 355.60L1561.50 355.62L1562.50 355.60" fill="none" stroke="#cc2a14" stroke-width="1.4"/></svg>
<div id="t68" class="a ax" style="left:459.31px;width:400px;text-align:right;top:332.82px;line-height:14.59px;font-size:12.68px;color:#ccccdc;font-weight:normal;letter-spacing:-0.286px;">1.50 GiB</div>
<div id="t69" class="a ax" style="left:459.31px;width:400px;text-align:right;top:355.99px;line-height:14.59px;font-size:12.68px;color:#ccccdc;font-weight:normal;letter-spacing:-0.286px;">1.25 GiB</div>
<div id="t70" class="a ax" style="left:458.80px;width:400px;text-align:right;top:379.15px;line-height:14.59px;font-size:12.68px;color:#ccccdc;font-weight:normal;letter-spacing:-0.800px;">1 GiB</div>
<div id="t71" class="a ax" style="left:459.77px;width:400px;text-align:right;top:402.32px;line-height:14.59px;font-size:12.68px;color:#ccccdc;font-weight:normal;letter-spacing:0.167px;">768 MiB</div>
<div id="t72" class="a ax" style="left:459.43px;width:400px;text-align:right;top:425.49px;line-height:14.59px;font-size:12.68px;color:#ccccdc;font-weight:normal;letter-spacing:-0.167px;">512 MiB</div>
<div id="t73" class="a ax" style="left:459.77px;width:400px;text-align:right;top:448.65px;line-height:14.59px;font-size:12.68px;color:#ccccdc;font-weight:normal;letter-spacing:0.167px;">256 MiB</div>
<div id="t74" class="a ax" style="left:459.15px;width:400px;text-align:right;top:471.82px;line-height:14.59px;font-size:12.68px;color:#ccccdc;font-weight:normal;letter-spacing:-0.450px;">0 B</div>
<div id="t75" class="a ax" style="left:666.67px;width:400px;text-align:center;top:486.22px;line-height:14.59px;font-size:12.68px;color:#ccccdc;font-weight:normal;letter-spacing:-0.250px;">16:00</div>
<div id="t76" class="a ax" style="left:725.32px;width:400px;text-align:center;top:486.22px;line-height:14.59px;font-size:12.68px;color:#ccccdc;font-weight:normal;letter-spacing:0.000px;">18:00</div>
<div id="t77" class="a ax" style="left:783.72px;width:400px;text-align:center;top:486.22px;line-height:14.59px;font-size:12.68px;color:#ccccdc;font-weight:normal;letter-spacing:-0.250px;">20:00</div>
<div id="t78" class="a ax" style="left:841.74px;width:400px;text-align:center;top:486.22px;line-height:14.59px;font-size:12.68px;color:#ccccdc;font-weight:normal;letter-spacing:-0.250px;">22:00</div>
<div id="t79" class="a ax" style="left:899.75px;width:400px;text-align:center;top:486.22px;line-height:14.59px;font-size:12.68px;color:#ccccdc;font-weight:normal;letter-spacing:-0.250px;">00:00</div>
<div id="t80" class="a ax" style="left:958.15px;width:400px;text-align:center;top:486.22px;line-height:14.59px;font-size:12.68px;color:#ccccdc;font-weight:normal;letter-spacing:-0.500px;">02:00</div>
<div id="t81" class="a ax" style="left:1016.79px;width:400px;text-align:center;top:486.22px;line-height:14.59px;font-size:12.68px;color:#ccccdc;font-weight:normal;letter-spacing:-0.250px;">04:00</div>
<div id="t82" class="a ax" style="left:1074.81px;width:400px;text-align:center;top:486.22px;line-height:14.59px;font-size:12.68px;color:#ccccdc;font-weight:normal;letter-spacing:-0.250px;">06:00</div>
<div id="t83" class="a ax" style="left:1132.83px;width:400px;text-align:center;top:486.22px;line-height:14.59px;font-size:12.68px;color:#ccccdc;font-weight:normal;letter-spacing:-0.250px;">08:00</div>
<div id="t84" class="a ax" style="left:1190.85px;width:400px;text-align:center;top:486.22px;line-height:14.59px;font-size:12.68px;color:#ccccdc;font-weight:normal;letter-spacing:-0.250px;">10:00</div>
<div id="t85" class="a ax" style="left:1248.87px;width:400px;text-align:center;top:486.22px;line-height:14.59px;font-size:12.68px;color:#ccccdc;font-weight:normal;letter-spacing:-0.250px;">12:00</div>
<div id="t86" class="a ax" style="left:1307.52px;width:400px;text-align:center;top:486.22px;line-height:14.59px;font-size:12.68px;color:#ccccdc;font-weight:normal;letter-spacing:-0.000px;">14:00</div>
<div class="a" style="left:812.2px;top:517px;width:14px;height:4px;border-radius:2px;background:#e0f9d7"></div>
<div id="t87" class="a ax" style="left:834.00px;top:510.12px;line-height:14.59px;font-size:12.68px;color:#ccccdc;font-weight:normal;letter-spacing:0.250px;">Total</div>
<div class="a" style="left:872.6px;top:517px;width:14px;height:4px;border-radius:2px;background:#e8c41a"></div>
<div id="t88" class="a ax" style="left:894.00px;top:510.12px;line-height:14.59px;font-size:12.68px;color:#ccccdc;font-weight:normal;letter-spacing:0.333px;">Used</div>
<div class="a" style="left:934.3px;top:517px;width:14px;height:4px;border-radius:2px;background:#052b51"></div>
<div id="t89" class="a ax" style="left:956.00px;top:510.12px;line-height:14.59px;font-size:12.68px;color:#ccccdc;font-weight:normal;letter-spacing:0.154px;">Cache + Buffer</div>
<div class="a" style="left:1054.7px;top:517px;width:14px;height:4px;border-radius:2px;background:#7eb26d"></div>
<div id="t90" class="a ax" style="left:1076.20px;top:510.12px;line-height:14.59px;font-size:12.68px;color:#ccccdc;font-weight:normal;letter-spacing:-0.333px;">Free</div>
<div class="a" style="left:1111.2px;top:517px;width:14px;height:4px;border-radius:2px;background:#bf1b00"></div>
<div id="t91" class="a ax" style="left:1133.30px;top:510.12px;line-height:14.59px;font-size:12.68px;color:#ccccdc;font-weight:normal;letter-spacing:0.125px;">Swap used</div>
<div class="p" style="left:10px;top:549px;width:781px;height:258px"></div>
<div id="t92" class="a ttl" style="left:19.00px;top:557.61px;line-height:17.02px;font-size:14.80px;color:#ccccdc;font-weight:normal;letter-spacing:0.400px;">Network Traffic Basic</div>
<svg style="left:182.7px;top:559.2px" width="14" height="14" viewBox="0 0 14 14"><g opacity="0.78"><circle cx="7" cy="7" r="5.9" fill="none" stroke="#ccccdc" stroke-width="1.4"/><path d="M7 6.6V9.9" stroke="#ccccdc" stroke-width="1.7"/><path d="M7 3.9V5.4" stroke="#ccccdc" stroke-width="1.7"/></g></svg>
<svg style="left:0;top:0" width="1577" height="803"><path d="M86.80 731.50L87.80 731.50L88.80 731.50L89.80 732.47L90.80 731.50L91.80 731.50L92.80 731.50L93.80 731.50L94.80 732.22L95.80 731.50L96.80 731.50L97.80 731.50L98.80 731.50L99.80 732.87L100.80 731.50L101.80 731.50L102.80 731.50L103.80 731.50L104.80 731.50L105.80 731.50L106.80 726.88L107.80 715.31L108.80 722.25L109.80 731.50L110.80 732.68L111.80 731.50L112.80 731.50L113.80 731.50L114.80 731.50L115.80 731.50L116.80 731.50L117.80 732.79L118.80 731.50L119.80 732.05L120.80 731.50L121.80 731.50L122.80 731.50L123.80 731.50L124.80 731.50L125.80 732.75L126.80 731.50L127.80 732.95L128.80 732.34L129.80 731.50L130.80 731.50L131.80 731.50L132.80 731.50L133.80 732.15L134.80 731.50L135.80 731.50L136.80 731.50L137.80 731.50L138.80 731.50L139.80 731.50L140.80 732.92L141.80 732.49L142.80 731.50L143.80 731.50L144.80 731.50L145.80 732.43L146.80 732.84L147.80 731.50L148.80 731.50L149.80 731.50L150.80 731.50L151.80 731.50L152.80 731.50L153.80 731.50L154.80 731.50L155.80 731.50L156.80 732.27L157.80 731.50L158.80 731.50L159.80 731.50L160.80 731.50L161.80 731.50L162.80 731.50L163.80 731.50L164.80 731.50L165.80 731.50L166.80 732.55L167.80 731.50L168.80 731.50L169.80 731.50L170.80 731.50L171.80 731.50L172.80 731.50L173.80 731.50L174.80 731.50L175.80 731.50L176.80 731.50L177.80 731.50L178.80 731.50L179.80 731.50L180.80 731.50L181.80 731.50L182.80 731.50L183.80 731.50L184.80 732.16L185.80 731.50L186.80 731.50L187.80 731.50L188.80 731.50L189.80 732.13L190.80 731.50L191.80 731.50L192.80 731.50L193.80 731.50L194.80 731.50L195.80 732.41L196.80 731.50L197.80 732.83L198.80 731.50L199.80 731.50L200.80 731.50L201.80 731.50L202.80 731.50L203.80 731.50L204.80 731.50L205.80 731.50L206.80 731.50L207.80 731.50L208.80 731.50L209.80 732.57L210.80 731.50L211.80 731.50L212.80 731.50L213.80 731.50L214.80 731.50L215.80 731.50L216.80 731.50L217.80 731.50L218.80 731.50L219.80 731.50L220.80 731.50L221.80 732.62L222.80 731.50L223.80 731.50L224.80 732.53L225.80 731.50L226.80 731.50L227.80 731.50L228.80 731.50L229.80 731.50L230.80 731.50L231.80 731.50L232.80 731.50L233.80 731.50L234.80 731.50L235.80 731.50L236.80 731.50L237.80 732.25L238.80 731.50L239.80 731.50L240.80 732.78L241.80 731.50L242.80 731.50L243.80 731.50L244.80 731.50L245.80 731.50L246.80 731.50L247.80 732.84L248.80 731.50L249.80 731.50L250.80 731.50L251.80 731.50L252.80 731.50L253.80 731.50L254.80 731.50L255.80 731.50L256.80 731.50L257.80 732.72L258.80 731.50L259.80 731.50L260.80 731.50L261.80 731.50L262.80 731.50L263.80 731.50L264.80 732.61L265.80 731.50L266.80 731.50L267.80 732.38L268.80 732.06L269.80 731.50L270.80 731.50L271.80 731.50L272.80 731.50L273.80 731.50L274.80 732.70L275.80 731.50L276.80 731.50L277.80 731.50L278.80 731.50L279.80 731.50L280.80 731.50L281.80 731.50L282.80 731.50L283.80 731.50L284.80 732.67L285.80 732.12L286.80 731.50L287.80 731.50L288.80 731.50L289.80 732.73L290.80 732.15L291.80 731.50L292.80 731.50L293.80 731.50L294.80 731.50L295.80 731.50L296.80 731.50L297.80 731.50L298.80 731.50L299.80 731.50L300.80 731.50L301.80 731.50L302.80 731.50L303.80 731.50L304.80 732.03L305.80 731.50L306.80 731.50L307.80 731.50L308.80 731.50L309.80 731.50L310.80 731.50L311.80 731.50L312.80 731.50L313.80 731.50L314.80 731.50L315.80 731.50L316.80 731.50L317.80 732.92L318.80 731.50L319.80 731.50L320.80 731.50L321.80 732.67L322.80 731.50L323.80 731.50L324.80 731.50L325.80 731.50L326.80 731.50L327.80 731.50L328.80 731.50L329.80 731.50L330.80 731.50L331.80 731.50L332.80 731.50L333.80 731.50L334.80 732.78L335.80 731.50L336.80 731.50L337.80 731.50L338.80 732.07L339.80 731.50L340.80 731.50L341.80 731.50L342.80 731.50L343.80 731.50L344.80 731.50L345.80 732.97L346.80 731.50L347.80 731.50L348.80 732.31L349.80 732.54L350.80 731.50L351.80 731.50L352.80 732.54L353.80 731.50L354.80 731.50L355.80 731.50L356.80 731.50L357.80 731.50L358.80 732.31L359.80 732.77L360.80 731.50L361.80 732.08L362.80 731.50L363.80 731.50L364.80 731.50L365.80 731.50L366.80 731.50L367.80 731.50L368.80 731.50L369.80 731.50L370.80 731.50L371.80 731.50L372.80 731.50L373.80 731.50L374.80 731.50L375.80 731.50L376.80 731.50L377.80 732.17L378.80 731.50L379.80 731.50L380.80 731.50L381.80 732.05L382.80 732.36L383.80 731.50L384.80 731.50L385.80 731.50L386.80 731.50L387.80 731.50L388.80 731.50L389.80 731.50L390.80 731.50L391.80 731.50L392.80 732.32L393.80 731.50L394.80 731.50L395.80 731.50L396.80 731.50L397.80 731.50L398.80 731.50L399.80 732.98L400.80 732.58L401.80 731.50L402.80 731.50L403.80 731.50L404.80 731.50L405.80 731.50L406.80 731.50L407.80 731.50L408.80 731.50L409.80 731.50L410.80 731.50L411.80 732.17L412.80 732.72L413.80 731.50L414.80 731.50L415.80 731.50L416.80 731.50L417.80 731.50L418.80 731.50L419.80 731.50L420.80 731.50L421.80 731.50L422.80 731.50L423.80 731.50L424.80 731.50L425.80 731.50L426.80 731.50L427.80 731.50L428.80 731.50L429.80 731.50L430.80 732.36L431.80 731.50L432.80 731.50L433.80 731.50L434.80 731.50L435.80 731.50L436.80 731.50L437.80 731.50L438.80 731.50L439.80 731.50L440.80 731.50L441.80 731.50L442.80 731.50L443.80 731.50L444.80 731.50L445.80 731.50L446.80 731.50L447.80 731.50L448.80 731.50L449.80 731.50L450.80 731.50L451.80 731.50L452.80 731.50L453.80 731.50L454.80 732.57L455.80 731.50L456.80 731.50L457.80 731.50L458.80 731.50L459.80 731.50L460.80 731.50L461.80 732.12L462.80 731.50L463.80 731.50L464.80 731.50L465.80 731.50L466.80 732.48L467.80 731.50L468.80 731.50L469.80 731.50L470.80 731.50L471.80 731.50L472.80 732.19L473.80 731.50L474.80 731.50L475.80 732.76L476.80 731.50L477.80 731.50L478.80 731.50L479.80 731.50L480.80 732.10L481.80 732.21L482.80 731.50L483.80 731.50L484.80 732.40L485.80 731.50L486.80 732.60L487.80 731.50L488.80 731.50L489.80 731.50L490.80 731.50L491.80 731.50L492.80 731.50L493.80 731.50L494.80 731.50L495.80 731.50L496.80 731.50L497.80 731.50L498.80 731.50L499.80 732.42L500.80 731.50L501.80 732.27L502.80 732.48L503.80 731.50L504.80 731.50L505.80 732.36L506.80 731.50L507.80 731.50L508.80 732.25L509.80 731.50L510.80 731.50L511.80 731.50L512.80 731.50L513.80 732.28L514.80 731.50L515.80 731.50L516.80 731.50L517.80 731.50L518.80 731.50L519.80 731.50L520.80 732.77L521.80 731.50L522.80 731.50L523.80 731.50L524.80 731.50L525.80 732.78L526.80 731.50L527.80 731.50L528.80 731.50L529.80 731.50L530.80 731.50L531.80 731.50L532.80 732.38L533.80 731.50L534.80 731.50L535.80 731.50L536.80 731.50L537.80 731.50L538.80 731.50L539.80 731.50L540.80 731.50L541.80 731.50L542.80 731.50L543.80 731.50L544.80 732.11L545.80 731.50L546.80 731.50L547.80 731.50L548.80 731.50L549.80 731.50L550.80 731.50L551.80 731.50L552.80 732.77L553.80 731.50L554.80 731.50L555.80 732.50L556.80 732.39L557.80 731.50L558.80 731.50L559.80 731.50L560.80 731.50L561.80 731.50L562.80 731.50L563.80 731.50L564.80 731.50L565.80 731.50L566.80 731.50L567.80 731.50L568.80 731.50L569.80 732.35L570.80 731.50L571.80 731.50L572.80 732.09L573.80 731.50L574.80 731.50L575.80 731.50L576.80 731.50L577.80 731.50L578.80 731.50L579.80 731.50L580.80 731.50L581.80 731.50L582.80 732.05L583.80 731.50L584.80 732.04L585.80 731.50L586.80 731.50L587.80 731.50L588.80 731.50L589.80 731.50L590.80 731.50L591.80 732.68L592.80 732.07L593.80 731.50L594.80 731.50L595.80 732.64L596.80 731.50L597.80 731.50L598.80 731.50L599.80 731.50L600.80 731.50L601.80 731.50L602.80 731.50L603.80 731.50L604.80 731.50L605.80 731.50L606.80 731.50L607.80 732.49L608.80 731.50L609.80 731.50L610.80 732.27L611.80 731.50L612.80 731.50L613.80 731.50L614.80 731.50L615.80 731.50L616.80 731.50L617.80 731.50L618.80 731.50L619.80 731.50L620.80 731.50L621.80 732.63L622.80 731.50L623.80 732.97L624.80 731.50L625.80 731.50L626.80 731.50L627.80 732.06L628.80 731.50L629.80 731.50L630.80 731.50L631.80 731.50L632.80 731.50L633.80 732.42L634.80 731.50L635.80 731.50L636.80 732.51L637.80 731.50L638.80 731.50L639.80 731.50L640.80 731.50L641.80 731.50L642.80 731.50L643.80 731.50L644.80 731.50L645.80 731.50L646.80 731.50L647.80 731.50L648.80 731.50L649.80 732.05L650.80 731.50L651.80 731.50L652.80 731.50L653.80 731.50L654.80 731.50L655.80 731.50L656.80 732.20L657.80 731.50L658.80 733.00L659.80 732.17L660.80 732.45L661.80 731.50L662.80 731.50L663.80 732.58L664.80 731.50L665.80 732.72L666.80 732.76L667.80 731.50L668.80 731.50L669.80 731.50L670.80 731.50L671.80 731.50L672.80 731.50L673.80 731.50L674.80 731.50L675.80 731.50L676.80 731.50L677.80 731.50L678.80 731.50L679.80 731.50L680.80 731.50L681.80 731.50L682.80 731.50L683.80 731.50L684.80 731.50L685.80 731.50L686.80 731.50L687.80 732.20L688.80 731.50L689.80 731.50L690.80 731.50L691.80 731.50L692.80 731.50L693.80 731.50L694.80 731.50L695.80 731.50L696.80 731.50L697.80 731.50L698.80 731.50L699.80 732.26L700.80 731.50L701.80 732.01L702.80 731.50L703.80 731.50L704.80 731.50L705.80 731.50L706.80 731.50L707.80 731.50L708.80 731.50L709.80 731.50L710.80 732.88L711.80 731.50L712.80 732.34L713.80 732.37L714.80 732.22L715.80 732.43L716.80 731.50L717.80 731.50L718.80 731.50L719.80 731.50L720.80 731.50L721.80 731.50L722.80 731.50L723.80 731.50L724.80 731.50L725.80 731.50L726.80 731.50L727.80 731.50L728.80 731.50L729.80 731.50L730.80 731.50L731.80 731.50L732.80 731.50L733.80 731.50L734.80 732.61L735.80 731.50L736.80 731.50L737.80 732.43L738.80 732.01L739.80 731.50L740.80 731.50L741.80 731.50L742.80 731.50L743.80 732.60L744.80 731.50L745.80 731.50L746.80 731.50L747.80 731.50L748.80 731.50L749.80 731.50L750.80 731.50L751.80 732.54L752.80 731.50L753.80 731.50L754.80 731.50L755.80 731.50L756.80 731.50L757.80 731.50L758.80 731.50L759.80 731.50L760.80 731.50L761.80 731.50L762.80 731.50L763.80 731.50L764.80 732.67L765.80 731.50L766.80 732.30L767.80 731.50L768.80 732.35L769.80 731.50L770.80 731.50L771.80 731.50L772.80 732.86L773.80 731.50L773.8 620.3L86.8 620.3Z" fill="#ff9830" fill-opacity="0.4"/><rect x="86.8" y="613" width="687.0" height="7.3" fill="#73bf69" fill-opacity="0.4"/><path d="M86.8 604.5H774.4" stroke="rgba(240,250,255,0.09)" stroke-width="1"/><path d="M86.8 620.5H774.4" stroke="rgba(240,250,255,0.09)" stroke-width="1"/><path d="M86.8 636.5H774.4" stroke="rgba(240,250,255,0.09)" stroke-width="1"/><path d="M86.8 652.5H774.4" stroke="rgba(240,250,255,0.09)" stroke-width="1"/><path d="M86.8 668.5H774.4" stroke="rgba(240,250,255,0.09)" stroke-width="1"/><path d="M86.8 683.5H774.4" stroke="rgba(240,250,255,0.09)" stroke-width="1"/><path d="M86.8 699.5H774.4" stroke="rgba(240,250,255,0.09)" stroke-width="1"/><path d="M86.8 715.5H774.4" stroke="rgba(240,250,255,0.09)" stroke-width="1"/><path d="M86.8 731.5H774.4" stroke="rgba(240,250,255,0.09)" stroke-width="1"/><path d="M89.5 598.5V749.5" stroke="rgba(240,250,255,0.09)" stroke-width="1"/><path d="M146.5 598.5V749.5" stroke="rgba(240,250,255,0.09)" stroke-width="1"/><path d="M203.5 598.5V749.5" stroke="rgba(240,250,255,0.09)" stroke-width="1"/><path d="M261.5 598.5V749.5" stroke="rgba(240,250,255,0.09)" stroke-width="1"/><path d="M318.5 598.5V749.5" stroke="rgba(240,250,255,0.09)" stroke-width="1"/><path d="M375.5 598.5V749.5" stroke="rgba(240,250,255,0.09)" stroke-width="1"/><path d="M432.5 598.5V749.5" stroke="rgba(240,250,255,0.09)" stroke-width="1"/><path d="M490.5 598.5V749.5" stroke="rgba(240,250,255,0.09)" stroke-width="1"/><path d="M547.5 598.5V749.5" stroke="rgba(240,250,255,0.09)" stroke-width="1"/><path d="M604.5 598.5V749.5" stroke="rgba(240,250,255,0.09)" stroke-width="1"/><path d="M662.5 598.5V749.5" stroke="rgba(240,250,255,0.09)" stroke-width="1"/><path d="M719.5 598.5V749.5" stroke="rgba(240,250,255,0.09)" stroke-width="1"/><path d="M86.8 613.3H773.8" stroke="#73bf69" stroke-width="1"/><path d="M86.80 731.50L87.80 731.50L88.80 731.50L89.80 732.47L90.80 731.50L91.80 731.50L92.80 731.50L93.80 731.50L94.80 732.22L95.80 731.50L96.80 731.50L97.80 731.50L98.80 731.50L99.80 732.87L100.80 731.50L101.80 731.50L102.80 731.50L103.80 731.50L104.80 731.50L105.80 731.50L106.80 726.88L107.80 715.31L108.80 722.25L109.80 731.50L110.80 732.68L111.80 731.50L112.80 731.50L113.80 731.50L114.80 731.50L115.80 731.50L116.80 731.50L117.80 732.79L118.80 731.50L119.80 732.05L120.80 731.50L121.80 731.50L122.80 731.50L123.80 731.50L124.80 731.50L125.80 732.75L126.80 731.50L127.80 732.95L128.80 732.34L129.80 731.50L130.80 731.50L131.80 731.50L132.80 731.50L133.80 732.15L134.80 731.50L135.80 731.50L136.80 731.50L137.80 731.50L138.80 731.50L139.80 731.50L140.80 732.92L141.80 732.49L142.80 731.50L143.80 731.50L144.80 731.50L145.80 732.43L146.80 732.84L147.80 731.50L148.80 731.50L149.80 731.50L150.80 731.50L151.80 731.50L152.80 731.50L153.80 731.50L154.80 731.50L155.80 731.50L156.80 732.27L157.80 731.50L158.80 731.50L159.80 731.50L160.80 731.50L161.80 731.50L162.80 731.50L163.80 731.50L164.80 731.50L165.80 731.50L166.80 732.55L167.80 731.50L168.80 731.50L169.80 731.50L170.80 731.50L171.80 731.50L172.80 731.50L173.80 731.50L174.80 731.50L175.80 731.50L176.80 731.50L177.80 731.50L178.80 731.50L179.80 731.50L180.80 731.50L181.80 731.50L182.80 731.50L183.80 731.50L184.80 732.16L185.80 731.50L186.80 731.50L187.80 731.50L188.80 731.50L189.80 732.13L190.80 731.50L191.80 731.50L192.80 731.50L193.80 731.50L194.80 731.50L195.80 732.41L196.80 731.50L197.80 732.83L198.80 731.50L199.80 731.50L200.80 731.50L201.80 731.50L202.80 731.50L203.80 731.50L204.80 731.50L205.80 731.50L206.80 731.50L207.80 731.50L208.80 731.50L209.80 732.57L210.80 731.50L211.80 731.50L212.80 731.50L213.80 731.50L214.80 731.50L215.80 731.50L216.80 731.50L217.80 731.50L218.80 731.50L219.80 731.50L220.80 731.50L221.80 732.62L222.80 731.50L223.80 731.50L224.80 732.53L225.80 731.50L226.80 731.50L227.80 731.50L228.80 731.50L229.80 731.50L230.80 731.50L231.80 731.50L232.80 731.50L233.80 731.50L234.80 731.50L235.80 731.50L236.80 731.50L237.80 732.25L238.80 731.50L239.80 731.50L240.80 732.78L241.80 731.50L242.80 731.50L243.80 731.50L244.80 731.50L245.80 731.50L246.80 731.50L247.80 732.84L248.80 731.50L249.80 731.50L250.80 731.50L251.80 731.50L252.80 731.50L253.80 731.50L254.80 731.50L255.80 731.50L256.80 731.50L257.80 732.72L258.80 731.50L259.80 731.50L260.80 731.50L261.80 731.50L262.80 731.50L263.80 731.50L264.80 732.61L265.80 731.50L266.80 731.50L267.80 732.38L268.80 732.06L269.80 731.50L270.80 731.50L271.80 731.50L272.80 731.50L273.80 731.50L274.80 732.70L275.80 731.50L276.80 731.50L277.80 731.50L278.80 731.50L279.80 731.50L280.80 731.50L281.80 731.50L282.80 731.50L283.80 731.50L284.80 732.67L285.80 732.12L286.80 731.50L287.80 731.50L288.80 731.50L289.80 732.73L290.80 732.15L291.80 731.50L292.80 731.50L293.80 731.50L294.80 731.50L295.80 731.50L296.80 731.50L297.80 731.50L298.80 731.50L299.80 731.50L300.80 731.50L301.80 731.50L302.80 731.50L303.80 731.50L304.80 732.03L305.80 731.50L306.80 731.50L307.80 731.50L308.80 731.50L309.80 731.50L310.80 731.50L311.80 731.50L312.80 731.50L313.80 731.50L314.80 731.50L315.80 731.50L316.80 731.50L317.80 732.92L318.80 731.50L319.80 731.50L320.80 731.50L321.80 732.67L322.80 731.50L323.80 731.50L324.80 731.50L325.80 731.50L326.80 731.50L327.80 731.50L328.80 731.50L329.80 731.50L330.80 731.50L331.80 731.50L332.80 731.50L333.80 731.50L334.80 732.78L335.80 731.50L336.80 731.50L337.80 731.50L338.80 732.07L339.80 731.50L340.80 731.50L341.80 731.50L342.80 731.50L343.80 731.50L344.80 731.50L345.80 732.97L346.80 731.50L347.80 731.50L348.80 732.31L349.80 732.54L350.80 731.50L351.80 731.50L352.80 732.54L353.80 731.50L354.80 731.50L355.80 731.50L356.80 731.50L357.80 731.50L358.80 732.31L359.80 732.77L360.80 731.50L361.80 732.08L362.80 731.50L363.80 731.50L364.80 731.50L365.80 731.50L366.80 731.50L367.80 731.50L368.80 731.50L369.80 731.50L370.80 731.50L371.80 731.50L372.80 731.50L373.80 731.50L374.80 731.50L375.80 731.50L376.80 731.50L377.80 732.17L378.80 731.50L379.80 731.50L380.80 731.50L381.80 732.05L382.80 732.36L383.80 731.50L384.80 731.50L385.80 731.50L386.80 731.50L387.80 731.50L388.80 731.50L389.80 731.50L390.80 731.50L391.80 731.50L392.80 732.32L393.80 731.50L394.80 731.50L395.80 731.50L396.80 731.50L397.80 731.50L398.80 731.50L399.80 732.98L400.80 732.58L401.80 731.50L402.80 731.50L403.80 731.50L404.80 731.50L405.80 731.50L406.80 731.50L407.80 731.50L408.80 731.50L409.80 731.50L410.80 731.50L411.80 732.17L412.80 732.72L413.80 731.50L414.80 731.50L415.80 731.50L416.80 731.50L417.80 731.50L418.80 731.50L419.80 731.50L420.80 731.50L421.80 731.50L422.80 731.50L423.80 731.50L424.80 731.50L425.80 731.50L426.80 731.50L427.80 731.50L428.80 731.50L429.80 731.50L430.80 732.36L431.80 731.50L432.80 731.50L433.80 731.50L434.80 731.50L435.80 731.50L436.80 731.50L437.80 731.50L438.80 731.50L439.80 731.50L440.80 731.50L441.80 731.50L442.80 731.50L443.80 731.50L444.80 731.50L445.80 731.50L446.80 731.50L447.80 731.50L448.80 731.50L449.80 731.50L450.80 731.50L451.80 731.50L452.80 731.50L453.80 731.50L454.80 732.57L455.80 731.50L456.80 731.50L457.80 731.50L458.80 731.50L459.80 731.50L460.80 731.50L461.80 732.12L462.80 731.50L463.80 731.50L464.80 731.50L465.80 731.50L466.80 732.48L467.80 731.50L468.80 731.50L469.80 731.50L470.80 731.50L471.80 731.50L472.80 732.19L473.80 731.50L474.80 731.50L475.80 732.76L476.80 731.50L477.80 731.50L478.80 731.50L479.80 731.50L480.80 732.10L481.80 732.21L482.80 731.50L483.80 731.50L484.80 732.40L485.80 731.50L486.80 732.60L487.80 731.50L488.80 731.50L489.80 731.50L490.80 731.50L491.80 731.50L492.80 731.50L493.80 731.50L494.80 731.50L495.80 731.50L496.80 731.50L497.80 731.50L498.80 731.50L499.80 732.42L500.80 731.50L501.80 732.27L502.80 732.48L503.80 731.50L504.80 731.50L505.80 732.36L506.80 731.50L507.80 731.50L508.80 732.25L509.80 731.50L510.80 731.50L511.80 731.50L512.80 731.50L513.80 732.28L514.80 731.50L515.80 731.50L516.80 731.50L517.80 731.50L518.80 731.50L519.80 731.50L520.80 732.77L521.80 731.50L522.80 731.50L523.80 731.50L524.80 731.50L525.80 732.78L526.80 731.50L527.80 731.50L528.80 731.50L529.80 731.50L530.80 731.50L531.80 731.50L532.80 732.38L533.80 731.50L534.80 731.50L535.80 731.50L536.80 731.50L537.80 731.50L538.80 731.50L539.80 731.50L540.80 731.50L541.80 731.50L542.80 731.50L543.80 731.50L544.80 732.11L545.80 731.50L546.80 731.50L547.80 731.50L548.80 731.50L549.80 731.50L550.80 731.50L551.80 731.50L552.80 732.77L553.80 731.50L554.80 731.50L555.80 732.50L556.80 732.39L557.80 731.50L558.80 731.50L559.80 731.50L560.80 731.50L561.80 731.50L562.80 731.50L563.80 731.50L564.80 731.50L565.80 731.50L566.80 731.50L567.80 731.50L568.80 731.50L569.80 732.35L570.80 731.50L571.80 731.50L572.80 732.09L573.80 731.50L574.80 731.50L575.80 731.50L576.80 731.50L577.80 731.50L578.80 731.50L579.80 731.50L580.80 731.50L581.80 731.50L582.80 732.05L583.80 731.50L584.80 732.04L585.80 731.50L586.80 731.50L587.80 731.50L588.80 731.50L589.80 731.50L590.80 731.50L591.80 732.68L592.80 732.07L593.80 731.50L594.80 731.50L595.80 732.64L596.80 731.50L597.80 731.50L598.80 731.50L599.80 731.50L600.80 731.50L601.80 731.50L602.80 731.50L603.80 731.50L604.80 731.50L605.80 731.50L606.80 731.50L607.80 732.49L608.80 731.50L609.80 731.50L610.80 732.27L611.80 731.50L612.80 731.50L613.80 731.50L614.80 731.50L615.80 731.50L616.80 731.50L617.80 731.50L618.80 731.50L619.80 731.50L620.80 731.50L621.80 732.63L622.80 731.50L623.80 732.97L624.80 731.50L625.80 731.50L626.80 731.50L627.80 732.06L628.80 731.50L629.80 731.50L630.80 731.50L631.80 731.50L632.80 731.50L633.80 732.42L634.80 731.50L635.80 731.50L636.80 732.51L637.80 731.50L638.80 731.50L639.80 731.50L640.80 731.50L641.80 731.50L642.80 731.50L643.80 731.50L644.80 731.50L645.80 731.50L646.80 731.50L647.80 731.50L648.80 731.50L649.80 732.05L650.80 731.50L651.80 731.50L652.80 731.50L653.80 731.50L654.80 731.50L655.80 731.50L656.80 732.20L657.80 731.50L658.80 733.00L659.80 732.17L660.80 732.45L661.80 731.50L662.80 731.50L663.80 732.58L664.80 731.50L665.80 732.72L666.80 732.76L667.80 731.50L668.80 731.50L669.80 731.50L670.80 731.50L671.80 731.50L672.80 731.50L673.80 731.50L674.80 731.50L675.80 731.50L676.80 731.50L677.80 731.50L678.80 731.50L679.80 731.50L680.80 731.50L681.80 731.50L682.80 731.50L683.80 731.50L684.80 731.50L685.80 731.50L686.80 731.50L687.80 732.20L688.80 731.50L689.80 731.50L690.80 731.50L691.80 731.50L692.80 731.50L693.80 731.50L694.80 731.50L695.80 731.50L696.80 731.50L697.80 731.50L698.80 731.50L699.80 732.26L700.80 731.50L701.80 732.01L702.80 731.50L703.80 731.50L704.80 731.50L705.80 731.50L706.80 731.50L707.80 731.50L708.80 731.50L709.80 731.50L710.80 732.88L711.80 731.50L712.80 732.34L713.80 732.37L714.80 732.22L715.80 732.43L716.80 731.50L717.80 731.50L718.80 731.50L719.80 731.50L720.80 731.50L721.80 731.50L722.80 731.50L723.80 731.50L724.80 731.50L725.80 731.50L726.80 731.50L727.80 731.50L728.80 731.50L729.80 731.50L730.80 731.50L731.80 731.50L732.80 731.50L733.80 731.50L734.80 732.61L735.80 731.50L736.80 731.50L737.80 732.43L738.80 732.01L739.80 731.50L740.80 731.50L741.80 731.50L742.80 731.50L743.80 732.60L744.80 731.50L745.80 731.50L746.80 731.50L747.80 731.50L748.80 731.50L749.80 731.50L750.80 731.50L751.80 732.54L752.80 731.50L753.80 731.50L754.80 731.50L755.80 731.50L756.80 731.50L757.80 731.50L758.80 731.50L759.80 731.50L760.80 731.50L761.80 731.50L762.80 731.50L763.80 731.50L764.80 732.67L765.80 731.50L766.80 732.30L767.80 731.50L768.80 732.35L769.80 731.50L770.80 731.50L771.80 731.50L772.80 732.86L773.80 731.50" fill="none" stroke="#ff9830" stroke-width="1"/><path d="M86.8 620.6H773.8" stroke="#d678c8" stroke-width="1.2"/></svg>
<div id="t93" class="a ax" style="left:-317.90px;width:400px;text-align:right;top:597.12px;line-height:14.59px;font-size:12.68px;color:#ccccdc;font-weight:normal;letter-spacing:0.500px;">500 b/s</div>
<div id="t94" class="a ax" style="left:-317.90px;width:400px;text-align:right;top:613.05px;line-height:14.59px;font-size:12.68px;color:#ccccdc;font-weight:normal;letter-spacing:0.500px;">0 b/s</div>
<div id="t95" class="a ax" style="left:-317.83px;width:400px;text-align:right;top:628.98px;line-height:14.59px;font-size:12.68px;color:#ccccdc;font-weight:normal;letter-spacing:0.571px;">-500 b/s</div>
<div id="t96" class="a ax" style="left:-318.40px;width:400px;text-align:right;top:644.91px;line-height:14.59px;font-size:12.68px;color:#ccccdc;font-weight:normal;letter-spacing:-0.000px;">-1 kb/s</div>
<div id="t97" class="a ax" style="left:-318.18px;width:400px;text-align:right;top:660.84px;line-height:14.59px;font-size:12.68px;color:#ccccdc;font-weight:normal;letter-spacing:0.222px;">-1.50 kb/s</div>
<div id="t98" class="a ax" style="left:-317.90px;width:400px;text-align:right;top:676.77px;line-height:14.59px;font-size:12.68px;color:#ccccdc;font-weight:normal;letter-spacing:0.500px;">-2 kb/s</div>
<div id="t99" class="a ax" style="left:-318.07px;width:400px;text-align:right;top:692.70px;line-height:14.59px;font-size:12.68px;color:#ccccdc;font-weight:normal;letter-spacing:0.333px;">-2.50 kb/s</div>
<div id="t100" class="a ax" style="left:-317.90px;width:400px;text-align:right;top:708.63px;line-height:14.59px;font-size:12.68px;color:#ccccdc;font-weight:normal;letter-spacing:0.500px;">-3 kb/s</div>
<div id="t101" class="a ax" style="left:-318.07px;width:400px;text-align:right;top:724.56px;line-height:14.59px;font-size:12.68px;color:#ccccdc;font-weight:normal;letter-spacing:0.333px;">-3.50 kb/s</div>
<div id="t102" class="a ax" style="left:-110.90px;width:400px;text-align:center;top:753.32px;line-height:14.59px;font-size:12.68px;color:#ccccdc;font-weight:normal;letter-spacing:0.000px;">16:00</div>
<div id="t103" class="a ax" style="left:-53.60px;width:400px;text-align:center;top:753.32px;line-height:14.59px;font-size:12.68px;color:#ccccdc;font-weight:normal;letter-spacing:0.000px;">18:00</div>
<div id="t104" class="a ax" style="left:3.70px;width:400px;text-align:center;top:753.32px;line-height:14.59px;font-size:12.68px;color:#ccccdc;font-weight:normal;letter-spacing:0.000px;">20:00</div>
<div id="t105" class="a ax" style="left:61.00px;width:400px;text-align:center;top:753.32px;line-height:14.59px;font-size:12.68px;color:#ccccdc;font-weight:normal;letter-spacing:0.000px;">22:00</div>
<div id="t106" class="a ax" style="left:118.30px;width:400px;text-align:center;top:753.32px;line-height:14.59px;font-size:12.68px;color:#ccccdc;font-weight:normal;letter-spacing:0.000px;">00:00</div>
<div id="t107" class="a ax" style="left:175.60px;width:400px;text-align:center;top:753.32px;line-height:14.59px;font-size:12.68px;color:#ccccdc;font-weight:normal;letter-spacing:0.000px;">02:00</div>
<div id="t108" class="a ax" style="left:232.90px;width:400px;text-align:center;top:753.32px;line-height:14.59px;font-size:12.68px;color:#ccccdc;font-weight:normal;letter-spacing:0.000px;">04:00</div>
<div id="t109" class="a ax" style="left:290.20px;width:400px;text-align:center;top:753.32px;line-height:14.59px;font-size:12.68px;color:#ccccdc;font-weight:normal;letter-spacing:0.000px;">06:00</div>
<div id="t110" class="a ax" style="left:347.50px;width:400px;text-align:center;top:753.32px;line-height:14.59px;font-size:12.68px;color:#ccccdc;font-weight:normal;letter-spacing:0.000px;">08:00</div>
<div id="t111" class="a ax" style="left:404.80px;width:400px;text-align:center;top:753.32px;line-height:14.59px;font-size:12.68px;color:#ccccdc;font-weight:normal;letter-spacing:0.000px;">10:00</div>
<div id="t112" class="a ax" style="left:462.10px;width:400px;text-align:center;top:753.32px;line-height:14.59px;font-size:12.68px;color:#ccccdc;font-weight:normal;letter-spacing:0.000px;">12:00</div>
<div id="t113" class="a ax" style="left:519.40px;width:400px;text-align:center;top:753.32px;line-height:14.59px;font-size:12.68px;color:#ccccdc;font-weight:normal;letter-spacing:0.000px;">14:00</div>
<div class="a" style="left:22.9px;top:783px;width:14px;height:4px;border-radius:2px;background:#73bf69"></div>
<div id="t114" class="a ax" style="left:44.90px;top:777.82px;line-height:14.59px;font-size:12.68px;color:#ccccdc;font-weight:normal;letter-spacing:0.000px;">Rx eth0</div>
<div class="a" style="left:99.3px;top:783px;width:14px;height:4px;border-radius:2px;background:#fade2a"></div>
<div id="t115" class="a ax" style="left:121.20px;top:777.82px;line-height:14.59px;font-size:12.68px;color:#ccccdc;font-weight:normal;letter-spacing:-0.500px;">Rx eth1</div>
<div class="a" style="left:172px;top:783px;width:14px;height:4px;border-radius:2px;background:#5794f2"></div>
<div id="t116" class="a ax" style="left:193.90px;top:777.82px;line-height:14.59px;font-size:12.68px;color:#ccccdc;font-weight:normal;letter-spacing:-0.250px;">Rx lo</div>
<div class="a" style="left:233.3px;top:783px;width:14px;height:4px;border-radius:2px;background:#ff9830"></div>
<div id="t117" class="a ax" style="left:254.50px;top:777.82px;line-height:14.59px;font-size:12.68px;color:#ccccdc;font-weight:normal;letter-spacing:0.167px;">Tx eth0</div>
<div class="a" style="left:308px;top:783px;width:14px;height:4px;border-radius:2px;background:#f2495c"></div>
<div id="t118" class="a ax" style="left:329.90px;top:777.82px;line-height:14.59px;font-size:12.68px;color:#ccccdc;font-weight:normal;letter-spacing:-0.333px;">Tx eth1</div>
<div class="a" style="left:380px;top:783px;width:14px;height:4px;border-radius:2px;background:#b877d9"></div>
<div id="t119" class="a ax" style="left:402.60px;top:777.82px;line-height:14.59px;font-size:12.68px;color:#ccccdc;font-weight:normal;letter-spacing:-0.250px;">Tx lo</div>
<div class="p" style="left:799px;top:549px;width:781px;height:258px"></div>
<div id="t120" class="a ttl" style="left:808.10px;top:557.61px;line-height:17.02px;font-size:14.80px;color:#ccccdc;font-weight:normal;letter-spacing:0.100px;">Disk Space Used Basic</div>
<svg style="left:981.8px;top:559.2px" width="14" height="14" viewBox="0 0 14 14"><g opacity="0.78"><circle cx="7" cy="7" r="5.9" fill="none" stroke="#ccccdc" stroke-width="1.4"/><path d="M7 6.6V9.9" stroke="#ccccdc" stroke-width="1.7"/><path d="M7 3.9V5.4" stroke="#ccccdc" stroke-width="1.7"/></g></svg>
<svg style="left:0;top:0" width="1577" height="803"><rect x="849.0" y="712" width="713.6" height="33.9" fill="#73bf69" fill-opacity="0.4"/><rect x="849.0" y="736.6" width="713.6" height="9.3" fill="#fade2a" fill-opacity="0.4"/><rect x="849.0" y="742.5" width="713.6" height="3.4" fill="#c4847e"/><path d="M849.0 598.5H1563.6" stroke="rgba(240,250,255,0.09)" stroke-width="1"/><path d="M849.0 627.5H1563.6" stroke="rgba(240,250,255,0.09)" stroke-width="1"/><path d="M849.0 657.5H1563.6" stroke="rgba(240,250,255,0.09)" stroke-width="1"/><path d="M849.0 686.5H1563.6" stroke="rgba(240,250,255,0.09)" stroke-width="1"/><path d="M849.0 715.5H1563.6" stroke="rgba(240,250,255,0.09)" stroke-width="1"/><path d="M849.0 745.5H1563.6" stroke="rgba(240,250,255,0.09)" stroke-width="1"/><path d="M851.5 598.3V749.1" stroke="rgba(240,250,255,0.09)" stroke-width="1"/><path d="M910.5 598.3V749.1" stroke="rgba(240,250,255,0.09)" stroke-width="1"/><path d="M970.5 598.3V749.1" stroke="rgba(240,250,255,0.09)" stroke-width="1"/><path d="M1029.5 598.3V749.1" stroke="rgba(240,250,255,0.09)" stroke-width="1"/><path d="M1089.5 598.3V749.1" stroke="rgba(240,250,255,0.09)" stroke-width="1"/><path d="M1149.5 598.3V749.1" stroke="rgba(240,250,255,0.09)" stroke-width="1"/><path d="M1208.5 598.3V749.1" stroke="rgba(240,250,255,0.09)" stroke-width="1"/><path d="M1268.5 598.3V749.1" stroke="rgba(240,250,255,0.09)" stroke-width="1"/><path d="M1327.5 598.3V749.1" stroke="rgba(240,250,255,0.09)" stroke-width="1"/><path d="M1387.5 598.3V749.1" stroke="rgba(240,250,255,0.09)" stroke-width="1"/><path d="M1446.5 598.3V749.1" stroke="rgba(240,250,255,0.09)" stroke-width="1"/><path d="M1506.5 598.3V749.1" stroke="rgba(240,250,255,0.09)" stroke-width="1"/><path d="M849.0 712.5H1562.6" stroke="#73bf69" stroke-width="1"/><path d="M849.0 736.5H1562.6" stroke="#fade2a" stroke-width="1"/><path d="M849.0 742.5H1562.6" stroke="#c983c8" stroke-width="1"/><path d="M849.0 745.4H1562.6" stroke="#f2495c" stroke-width="1"/></svg>
<div id="t121" class="a ax" style="left:442.17px;width:400px;text-align:right;top:591.12px;line-height:14.59px;font-size:12.68px;color:#ccccdc;font-weight:normal;letter-spacing:-0.333px;">100%</div>
<div id="t122" class="a ax" style="left:442.50px;width:400px;text-align:right;top:620.48px;line-height:14.59px;font-size:12.68px;color:#ccccdc;font-weight:normal;letter-spacing:0.000px;">80%</div>
<div id="t123" class="a ax" style="left:442.50px;width:400px;text-align:right;top:649.84px;line-height:14.59px;font-size:12.68px;color:#ccccdc;font-weight:normal;letter-spacing:0.000px;">60%</div>
<div id="t124" class="a ax" style="left:442.00px;width:400px;text-align:right;top:679.20px;line-height:14.59px;font-size:12.68px;color:#ccccdc;font-weight:normal;letter-spacing:-0.500px;">40%</div>
<div id="t125" class="a ax" style="left:442.50px;width:400px;text-align:right;top:708.56px;line-height:14.59px;font-size:12.68px;color:#ccccdc;font-weight:normal;letter-spacing:0.000px;">20%</div>
<div id="t126" class="a ax" style="left:441.70px;width:400px;text-align:right;top:737.92px;line-height:14.59px;font-size:12.68px;color:#ccccdc;font-weight:normal;letter-spacing:-0.800px;">0%</div>
<div id="t127" class="a ax" style="left:651.30px;width:400px;text-align:center;top:753.32px;line-height:14.59px;font-size:12.68px;color:#ccccdc;font-weight:normal;letter-spacing:0.000px;">16:00</div>
<div id="t128" class="a ax" style="left:710.44px;width:400px;text-align:center;top:753.32px;line-height:14.59px;font-size:12.68px;color:#ccccdc;font-weight:normal;letter-spacing:0.000px;">18:00</div>
<div id="t129" class="a ax" style="left:769.95px;width:400px;text-align:center;top:753.32px;line-height:14.59px;font-size:12.68px;color:#ccccdc;font-weight:normal;letter-spacing:-0.250px;">20:00</div>
<div id="t130" class="a ax" style="left:829.72px;width:400px;text-align:center;top:753.32px;line-height:14.59px;font-size:12.68px;color:#ccccdc;font-weight:normal;letter-spacing:0.000px;">22:00</div>
<div id="t131" class="a ax" style="left:889.24px;width:400px;text-align:center;top:753.32px;line-height:14.59px;font-size:12.68px;color:#ccccdc;font-weight:normal;letter-spacing:-0.250px;">00:00</div>
<div id="t132" class="a ax" style="left:949.00px;width:400px;text-align:center;top:753.32px;line-height:14.59px;font-size:12.68px;color:#ccccdc;font-weight:normal;letter-spacing:0.000px;">02:00</div>
<div id="t133" class="a ax" style="left:1008.51px;width:400px;text-align:center;top:753.32px;line-height:14.59px;font-size:12.68px;color:#ccccdc;font-weight:normal;letter-spacing:-0.250px;">04:00</div>
<div id="t134" class="a ax" style="left:1067.65px;width:400px;text-align:center;top:753.32px;line-height:14.59px;font-size:12.68px;color:#ccccdc;font-weight:normal;letter-spacing:-0.250px;">06:00</div>
<div id="t135" class="a ax" style="left:1127.79px;width:400px;text-align:center;top:753.32px;line-height:14.59px;font-size:12.68px;color:#ccccdc;font-weight:normal;letter-spacing:-0.250px;">08:00</div>
<div id="t136" class="a ax" style="left:1186.93px;width:400px;text-align:center;top:753.32px;line-height:14.59px;font-size:12.68px;color:#ccccdc;font-weight:normal;letter-spacing:-0.250px;">10:00</div>
<div id="t137" class="a ax" style="left:1246.70px;width:400px;text-align:center;top:753.32px;line-height:14.59px;font-size:12.68px;color:#ccccdc;font-weight:normal;letter-spacing:0.000px;">12:00</div>
<div id="t138" class="a ax" style="left:1305.84px;width:400px;text-align:center;top:753.32px;line-height:14.59px;font-size:12.68px;color:#ccccdc;font-weight:normal;letter-spacing:0.000px;">14:00</div>
<div class="a" style="left:812px;top:783px;width:14px;height:4px;border-radius:2px;background:#73bf69"></div>
<div id="t139" class="a ax" style="left:834.30px;top:776.82px;line-height:14.59px;font-size:12.68px;color:#ccccdc;font-weight:normal;letter-spacing:0.450px;">/</div>
<div class="a" style="left:848px;top:783px;width:14px;height:4px;border-radius:2px;background:#fade2a"></div>
<div id="t140" class="a ax" style="left:870.30px;top:777.82px;line-height:14.59px;font-size:12.68px;color:#ccccdc;font-weight:normal;letter-spacing:0.625px;">/boot/efi</div>
<div class="a" style="left:930.3px;top:783px;width:14px;height:4px;border-radius:2px;background:#5794f2"></div>
<div id="t141" class="a ax" style="left:952.30px;top:777.82px;line-height:14.59px;font-size:12.68px;color:#ccccdc;font-weight:normal;letter-spacing:0.325px;">/run/credentials/systemd-sysusers.service</div>
<div class="a" style="left:1211.4px;top:783px;width:14px;height:4px;border-radius:2px;background:#ff9830"></div>
<div id="t142" class="a ax" style="left:1232.70px;top:777.82px;line-height:14.59px;font-size:12.68px;color:#ccccdc;font-weight:normal;letter-spacing:0.667px;">/run</div>
<div class="a" style="left:1266.1px;top:783px;width:14px;height:4px;border-radius:2px;background:#f2495c"></div>
<div id="t143" class="a ax" style="left:1288.40px;top:777.82px;line-height:14.59px;font-size:12.68px;color:#ccccdc;font-weight:normal;letter-spacing:0.500px;">/run/lock</div>
<div class="a" style="left:1351.3px;top:783px;width:14px;height:4px;border-radius:2px;background:#b877d9"></div>
<div id="t144" class="a ax" style="left:1373.00px;top:777.82px;line-height:14.59px;font-size:12.68px;color:#ccccdc;font-weight:normal;letter-spacing:0.333px;">/run/snapd/ns</div>
</body></html>
